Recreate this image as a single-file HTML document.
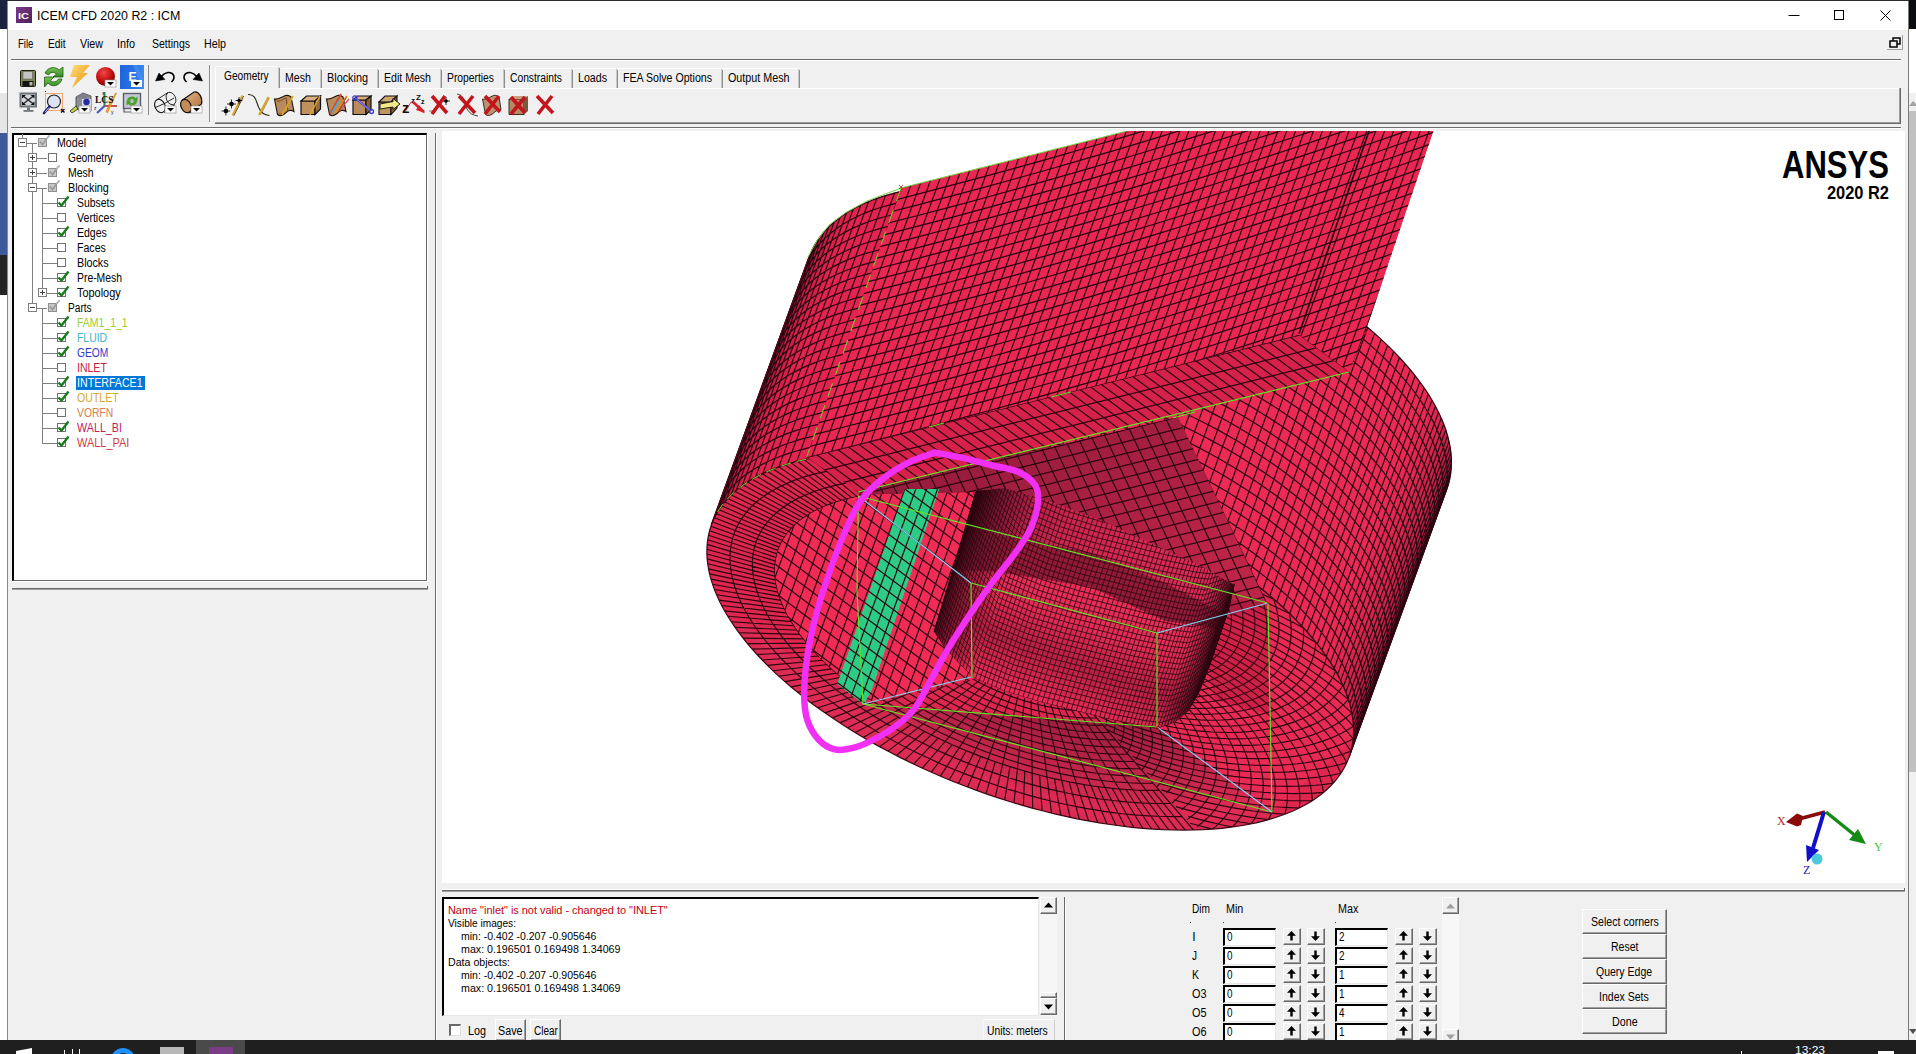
<!DOCTYPE html>
<html><head><meta charset="utf-8"><title>ICEM CFD 2020 R2 : ICM</title>
<style>
html,body{margin:0;padding:0}
body{width:1916px;height:1054px;overflow:hidden;position:relative;background:#f0f0f0;font-family:"Liberation Sans",sans-serif;font-size:11px;color:#000}
.a{position:absolute}
.t{position:absolute;white-space:nowrap;line-height:14px;font-size:11px}
.ln{position:absolute;background:#696969}
svg{position:absolute;overflow:visible}
</style></head><body>
<!-- background desktop strips -->
<div class="a" style="left:0;top:0;width:8px;height:29px;background:#1b2540"></div>
<div class="a" style="left:0;top:29px;width:8px;height:64px;background:#fff"></div>
<div class="a" style="left:0;top:93px;width:8px;height:40px;background:#e6e6e6"></div>
<div class="a" style="left:0;top:133px;width:8px;height:122px;background:#3c599b"></div>
<div class="a" style="left:0;top:255px;width:8px;height:40px;background:#242424"></div>
<div class="a" style="left:0;top:295px;width:8px;height:745px;background:#fff"></div>
<div class="a" style="left:1908px;top:0;width:8px;height:29px;background:#0b0b12"></div>
<div class="a" style="left:1908px;top:29px;width:8px;height:64px;background:#fff"></div>
<div class="a" style="left:1908px;top:93px;width:8px;height:18px;background:#f0f0f0"></div>
<div class="a" style="left:1908px;top:111px;width:8px;height:661px;background:#c1c1c1"></div>
<div class="a" style="left:1908px;top:772px;width:8px;height:268px;background:#f0f0f0"></div>
<svg style="left:1909px;top:101px" width="7" height="5"><path d="M0 5L4 0L7 3V5Z" fill="#a3a3a3"/></svg>
<svg style="left:1909px;top:1029px" width="7" height="5"><path d="M0 0H7V1L4 5Z" fill="#505050"/></svg>
<!-- window frame -->
<div class="a" style="left:7px;top:0;width:1px;height:1040px;background:#8a8a8a"></div>
<div class="a" style="left:1908px;top:0;width:1px;height:1040px;background:#7a7a7a"></div>
<div class="a" style="left:8px;top:0;width:1900px;height:30px;background:#fff"></div>
<div class="a" style="left:7px;top:0;width:1902px;height:1px;background:#2b2b2b"></div>
<!-- title -->
<div class="a" style="left:16px;top:7px;width:16px;height:16px;background:linear-gradient(135deg,#7a3c86,#4d1f5c)"></div>
<svg style="left:1780px;top:0" width="128" height="30" fill="none" stroke="#000" stroke-width="1"><path d="M8.5 15.5H19.500"/><rect x="54.500" y="10.500" width="9" height="9"/><path d="M100.500 10.500L110.500 20.500M110.500 10.500L100.500 20.500"/></svg>
<!-- menu -->
<!-- restore button in menu bar -->
<div class="a" style="left:1887px;top:35px;width:16px;height:15px;border-right:1px solid #a0a0a0;border-bottom:1px solid #a0a0a0;box-sizing:border-box"></div>
<svg style="left:1889px;top:37px" width="13" height="12" fill="none" stroke="#000" stroke-width="1.5"><rect x="4" y="1" width="7" height="6"/><rect x="1" y="4" width="7" height="6" fill="#f0f0f0"/></svg>
<!-- separators -->
<div class="a" style="left:11px;top:59px;width:1890px;height:1px;background:#6d6d6d"></div>
<div class="a" style="left:11px;top:60px;width:1890px;height:1px;background:#fff"></div>
<div class="a" style="left:11px;top:127px;width:1890px;height:1px;background:#6d6d6d"></div>
<div class="a" style="left:11px;top:128px;width:1890px;height:1px;background:#fff"></div>
<div class="a" style="left:148px;top:65px;width:1px;height:50px;background:#8a8a8a"></div>
<div class="a" style="left:209px;top:65px;width:1px;height:57px;background:#8a8a8a"></div>
<div class="a" style="left:210px;top:65px;width:1px;height:57px;background:#fff"></div>

<div class="t" style="left:18.3px;top:8.8815px;font-size:9px;color:#fff;font-weight:bold;transform:scaleX(1.2222);transform-origin:0 0;">IC</div>
<div class="t" style="left:37px;top:8.642px;font-size:12px;color:#000;transform:scaleX(1.0332);transform-origin:0 0;">ICEM CFD 2020 R2 : ICM</div>
<div class="t" style="left:18.4px;top:37.442px;font-size:12px;transform:scaleX(0.7965);transform-origin:0 0;">File</div>
<div class="t" style="left:48.4px;top:37.442px;font-size:12px;transform:scaleX(0.8511);transform-origin:0 0;">Edit</div>
<div class="t" style="left:80px;top:37.442px;font-size:12px;transform:scaleX(0.8917);transform-origin:0 0;">View</div>
<div class="t" style="left:117px;top:37.442px;font-size:12px;transform:scaleX(0.8993);transform-origin:0 0;">Info</div>
<div class="t" style="left:152px;top:37.442px;font-size:12px;transform:scaleX(0.8764);transform-origin:0 0;">Settings</div>
<div class="t" style="left:204px;top:37.442px;font-size:12px;transform:scaleX(0.8915);transform-origin:0 0;">Help</div>
<div class="t" style="left:224.4px;top:69.242px;font-size:12px;transform:scaleX(0.8466);transform-origin:0 0;">Geometry</div>
<div class="t" style="left:285px;top:70.842px;font-size:12px;transform:scaleX(0.8860);transform-origin:0 0;">Mesh</div>
<div class="t" style="left:327px;top:70.842px;font-size:12px;transform:scaleX(0.9040);transform-origin:0 0;">Blocking</div>
<div class="t" style="left:384px;top:70.842px;font-size:12px;transform:scaleX(0.8809);transform-origin:0 0;">Edit Mesh</div>
<div class="t" style="left:447px;top:70.842px;font-size:12px;transform:scaleX(0.8594);transform-origin:0 0;">Properties</div>
<div class="t" style="left:510px;top:70.842px;font-size:12px;transform:scaleX(0.8568);transform-origin:0 0;">Constraints</div>
<div class="t" style="left:578px;top:70.842px;font-size:12px;transform:scaleX(0.8870);transform-origin:0 0;">Loads</div>
<div class="t" style="left:623px;top:70.842px;font-size:12px;transform:scaleX(0.8837);transform-origin:0 0;">FEA Solve Options</div>
<div class="t" style="left:727.5px;top:70.842px;font-size:12px;transform:scaleX(0.8952);transform-origin:0 0;">Output Mesh</div>
<div class="a" style="left:216px;top:66px;width:62px;height:1px;background:#fff;"></div>
<div class="a" style="left:215px;top:67px;width:1px;height:21px;background:#fff;"></div>
<div class="a" style="left:278px;top:67px;width:1px;height:21px;background:#c8c8c8;"></div>
<div class="a" style="left:279px;top:68px;width:1px;height:20px;background:#8c8c8c;"></div>
<div class="a" style="left:281px;top:68px;width:39px;height:1px;background:#fff;"></div>
<div class="a" style="left:320px;top:69px;width:1px;height:19px;background:#c8c8c8;"></div>
<div class="a" style="left:321px;top:70px;width:1px;height:18px;background:#8c8c8c;"></div>
<div class="a" style="left:322px;top:68px;width:55px;height:1px;background:#fff;"></div>
<div class="a" style="left:377px;top:69px;width:1px;height:19px;background:#c8c8c8;"></div>
<div class="a" style="left:378px;top:70px;width:1px;height:18px;background:#8c8c8c;"></div>
<div class="a" style="left:379px;top:68px;width:61px;height:1px;background:#fff;"></div>
<div class="a" style="left:440px;top:69px;width:1px;height:19px;background:#c8c8c8;"></div>
<div class="a" style="left:441px;top:70px;width:1px;height:18px;background:#8c8c8c;"></div>
<div class="a" style="left:442px;top:68px;width:61px;height:1px;background:#fff;"></div>
<div class="a" style="left:503px;top:69px;width:1px;height:19px;background:#c8c8c8;"></div>
<div class="a" style="left:504px;top:70px;width:1px;height:18px;background:#8c8c8c;"></div>
<div class="a" style="left:505px;top:68px;width:66px;height:1px;background:#fff;"></div>
<div class="a" style="left:571px;top:69px;width:1px;height:19px;background:#c8c8c8;"></div>
<div class="a" style="left:572px;top:70px;width:1px;height:18px;background:#8c8c8c;"></div>
<div class="a" style="left:573px;top:68px;width:43px;height:1px;background:#fff;"></div>
<div class="a" style="left:616px;top:69px;width:1px;height:19px;background:#c8c8c8;"></div>
<div class="a" style="left:617px;top:70px;width:1px;height:18px;background:#8c8c8c;"></div>
<div class="a" style="left:618px;top:68px;width:103px;height:1px;background:#fff;"></div>
<div class="a" style="left:721px;top:69px;width:1px;height:19px;background:#c8c8c8;"></div>
<div class="a" style="left:722px;top:70px;width:1px;height:18px;background:#8c8c8c;"></div>
<div class="a" style="left:723px;top:68px;width:75px;height:1px;background:#fff;"></div>
<div class="a" style="left:798px;top:69px;width:1px;height:19px;background:#c8c8c8;"></div>
<div class="a" style="left:799px;top:70px;width:1px;height:18px;background:#8c8c8c;"></div>
<div class="a" style="left:280px;top:88px;width:1620px;height:1px;background:#fff;"></div>
<div class="a" style="left:215px;top:88px;width:1px;height:35px;background:#fff;"></div>
<div class="a" style="left:215px;top:122px;width:1685px;height:1px;background:#a0a0a0;"></div>
<div class="a" style="left:215px;top:123px;width:1686px;height:1px;background:#696969;"></div>
<div class="a" style="left:1899px;top:88px;width:1px;height:35px;background:#a0a0a0;"></div>
<div class="a" style="left:1900px;top:88px;width:1px;height:36px;background:#696969;"></div>
<!-- left toolbar icons -->
<svg style="left:19px;top:69px" width="18" height="19" viewBox="0 0 18 19"><rect x="1.500" y="1.500" width="15" height="16" rx="1" fill="#7d8558" stroke="#1c1f0c"/><rect x="4" y="2.500" width="9.500" height="7.500" fill="#c4c4c4" stroke="#555" stroke-width=".5"/><rect x="3.500" y="12" width="11" height="5" fill="#111"/><rect x="10.500" y="13" width="3" height="3.500" fill="#b9bba8"/></svg>
<svg style="left:43px;top:66px" width="22" height="22" viewBox="0 0 22 22"><defs><linearGradient id="gr1" x1="0" y1="0" x2="0" y2="1"><stop offset="0" stop-color="#7fc45a"/><stop offset="1" stop-color="#2f8a1e"/></linearGradient></defs><path d="M2 7C5 1 12 0 16 4L20 1V11H10L13.500 8C11 5.500 7 6 5.500 9Z" fill="url(#gr1)" stroke="#1f5a12" stroke-width=".8"/><path d="M19 13C17 20 9 22 5 17L1.500 21V11H11L7.500 14.500C10 17 14 16 15.500 13Z" fill="url(#gr1)" stroke="#1f5a12" stroke-width=".8"/></svg>
<svg style="left:69px;top:64px" width="23" height="25" viewBox="0 0 23 25"><defs><linearGradient id="gl1" x1="0" y1="0" x2="1" y2="1"><stop offset="0" stop-color="#fbe28a"/><stop offset=".5" stop-color="#f5b53a"/><stop offset="1" stop-color="#e98a1e"/></linearGradient></defs><path d="M5 1H21L14 9H19L3 24L8 13H1Z" fill="url(#gl1)"/></svg>
<svg style="left:95px;top:65px" width="24" height="24" viewBox="0 0 24 24"><defs><radialGradient id="gb1" cx=".4" cy=".3" r=".7"><stop offset="0" stop-color="#f04a4a"/><stop offset=".6" stop-color="#c40f10"/><stop offset="1" stop-color="#7a0507"/></radialGradient></defs><circle cx="10.500" cy="11.500" r="9.500" fill="url(#gb1)"/><rect x="10" y="15" width="11" height="7" fill="#fff" stroke="#8a8a8a" stroke-width=".6"/><path d="M12 17H19L15.500 20.500Z" fill="#000"/></svg>
<svg style="left:120px;top:65px" width="24" height="24" viewBox="0 0 24 24"><defs><linearGradient id="ge1" x1="0" y1="0" x2="1" y2="0"><stop offset="0" stop-color="#1d66de"/><stop offset=".6" stop-color="#2a72e4"/><stop offset="1" stop-color="#3b8af0"/></linearGradient></defs><rect width="24" height="24" fill="url(#ge1)"/><path d="M13 0L17 0L24 16V24H22Z" fill="#4a96f4" opacity=".55"/><text x="8.500" y="16" font-family="Liberation Sans,sans-serif" font-weight="bold" font-size="12" fill="#fff">E</text><rect x="11" y="15" width="11" height="7" fill="#fff"/><path d="M13 17H20L16.500 20.500Z" fill="#000"/></svg>
<svg style="left:154px;top:69px" width="24" height="16" viewBox="0 0 24 16" fill="none" stroke="#000"><path d="M17.500 13C22 9 20 3 14 3.500C11 4 8 6.500 6 9" stroke-width="1.600"/><path d="M1.500 12L5 4L11 10.500Z" fill="#000" stroke-width=".5"/></svg>
<svg style="left:180px;top:69px" width="24" height="16" viewBox="0 0 24 16" fill="none" stroke="#000"><path d="M6.500 13C2 9 4 3 10 3.500C13 4 16 6.500 18 9" stroke-width="1.600"/><path d="M22.500 12L19 4L13 10.500Z" fill="#000" stroke-width=".5"/></svg>
<!-- row 2 -->
<svg style="left:19px;top:92px" width="19" height="21" viewBox="0 0 19 21"><rect x=".5" y=".5" width="17.500" height="15" fill="#6f737a"/><rect x="2.500" y="2.500" width="13.500" height="11" fill="#d4d6dc"/><path d="M4 4L14.500 12M14.500 4L4 12" stroke="#222" stroke-width="1.300"/><path d="M3 3H7L3 6.500ZM15.500 3H11.500L15.500 6.500ZM3 13H7L3 9.500ZM15.500 13H11.500L15.500 9.500Z" fill="#111"/><rect x="8" y="15.500" width="3" height="2.500" fill="#6f737a"/><rect x="4.500" y="18" width="10" height="1.800" fill="#6f737a"/></svg>
<svg style="left:42px;top:90px" width="24" height="25" viewBox="0 0 24 25"><rect x="3.500" y="3.500" width="17" height="17" fill="none" stroke="#f0a060" stroke-width=".9"/><circle cx="12" cy="11.500" r="6.500" fill="#dde3f2" stroke="#222" stroke-width="1.200"/><path d="M7.500 16.500L2 23" stroke="#1c1c70" stroke-width="2.600" stroke-linecap="round"/><path d="M7 17.500L3 22.300" stroke="#c8c8f0" stroke-width=".9"/><path d="M19 19L22.500 22.500M22.500 19L19 22.500" stroke="#111" stroke-width="1.400"/><rect x="3" y="1" width="1" height="1" fill="#333"/></svg>
<svg style="left:68px;top:92px" width="24" height="23" viewBox="0 0 24 23"><path d="M8 5L15 1L23 4V19H12L8 16Z" fill="#8c8f96" stroke="#3a3a3a" stroke-width=".8"/><path d="M8 5L15 1L23 4L15 7Z" fill="#7d8087"/><rect x="14" y="7" width="9" height="12" fill="#d7d9e0"/><circle cx="18.500" cy="10" r="3.200" fill="#262aa0"/><path d="M8 14L2 19L4 21L10 17Z" fill="#c9d04a" stroke="#222" stroke-width=".8"/><rect x="11" y="14" width="11" height="7" fill="#fff" stroke="#8a8a8a" stroke-width=".6"/><path d="M13 16H20L16.500 19.500Z" fill="#000"/></svg>
<svg style="left:94px;top:90px" width="24" height="25" viewBox="0 0 24 25"><path d="M10.500 2V16" stroke="#2d8a4e" stroke-width="2"/><path d="M10.500 16L23 16" stroke="#c62828" stroke-width="1.600"/><path d="M10.500 16L3 23" stroke="#4a58c0" stroke-width="2.200"/><path d="M22 3L13 23" stroke="#d9a020" stroke-width="1.800"/><path d="M19 6L12 22" stroke="#e06020" stroke-width=".8"/><text x="1" y="13" font-family="Liberation Serif,serif" font-weight="bold" font-size="9.500" fill="#111">LCS</text><text x="8" y="5" font-family="Liberation Sans,sans-serif" font-size="5" fill="#111">x</text><text x="17" y="24" font-family="Liberation Sans,sans-serif" font-size="5" fill="#111">y</text><text x="0" y="20" font-family="Liberation Sans,sans-serif" font-size="5" fill="#111">z</text></svg>
<svg style="left:122px;top:92px" width="22" height="23" viewBox="0 0 22 23"><rect x="1.500" y="1.500" width="17" height="15" fill="#c6c8cf" stroke="#5b5d74" stroke-width="1.400"/><path d="M5 8C6 4 12 3.500 13.500 6L15.500 4.500V9.500H10.500L12 8C11 6.500 8 7 7.500 9Z" fill="#4aa02c"/><path d="M15 10C14 14 8 14.500 6.500 12L4.500 13.500V8.500H9.500L8 10C9 11.500 12 11 12.500 9Z" fill="#4aa02c"/><path d="M2 17V20H9" fill="none" stroke="#5b5d74" stroke-width="1.200"/><rect x="9" y="14" width="11" height="7" fill="#fff" stroke="#8a8a8a" stroke-width=".6"/><path d="M11 16H18L14.500 19.500Z" fill="#000"/></svg>
<svg style="left:153px;top:90px" width="25" height="25" viewBox="0 0 25 25" fill="none" stroke="#111" stroke-width="1.100"><ellipse cx="7" cy="16" rx="5" ry="7" transform="rotate(-25 7 16)"/><ellipse cx="18" cy="8.500" rx="4.500" ry="6.500" transform="rotate(-25 18 8.500)" stroke-width=".8"/><path d="M3.500 10L15 2.500M11 22.500L22 14.500M2.500 17.500L11.500 13.500L21 8" stroke-width=".9"/><rect x="12" y="16" width="11" height="7" fill="#fff" stroke="#8a8a8a" stroke-width=".6"/><path d="M14 18H21L17.500 21.500Z" fill="#000" stroke="none"/></svg>
<svg style="left:179px;top:90px" width="25" height="25" viewBox="0 0 25 25"><defs><linearGradient id="gc1" x1="0" y1="0" x2="1" y2="1"><stop offset="0" stop-color="#e6b98a"/><stop offset=".5" stop-color="#c99160"/><stop offset="1" stop-color="#a06c3c"/></linearGradient></defs><path d="M3.500 10L15 2C20 1 24 8 22.500 14L11 22.500Z" fill="url(#gc1)" stroke="#111" stroke-width="1.200"/><ellipse cx="7" cy="16" rx="5" ry="7" transform="rotate(-25 7 16)" fill="#c48a58" stroke="#111" stroke-width="1.200"/><rect x="12" y="16" width="11" height="7" fill="#fff" stroke="#8a8a8a" stroke-width=".6"/><path d="M14 18H21L17.500 21.500Z" fill="#000"/></svg>
<!-- geometry tab icons -->
<svg style="left:221px;top:93px" width="24" height="24" viewBox="0 0 24 24"><path d="M11.500 22.500L21.500 2.500" stroke="#d9a520" stroke-width="2"/><path d="M13 22.500L22.800 3" stroke="#3a2a05" stroke-width=".7"/><path d="M4.900 13.500V22.500M0.500 18H9.300" stroke="#000" stroke-width=".8"/><circle cx="4.900" cy="18" r="2.300" fill="#000"/><path d="M10.500 6.500V15.500M6 11H15" stroke="#000" stroke-width=".8"/><circle cx="10.500" cy="11" r="2.300" fill="#000"/><path d="M18 4V11M14.500 7.500H21.500" stroke="#000" stroke-width=".8"/><circle cx="18" cy="7.500" r="1.700" fill="#000"/></svg>
<svg style="left:247px;top:93px" width="24" height="24" viewBox="0 0 24 24" fill="none"><path d="M1 1.500C9 1 9 9 12 15C14 20 18 22 22.500 22.500" stroke="#2a2410" stroke-width="1.100"/><path d="M12 22L21.500 4" stroke="#d9a520" stroke-width="2"/><path d="M13.500 22L22.500 5" stroke="#8a6a10" stroke-width=".6"/></svg>
<svg style="left:273px;top:94px" width="23" height="23" viewBox="0 0 23 23"><path d="M1.500 5C5 6 9 3 12.500 1.500C15 1 17 2 18 3L21 17.500C17 15 15 17 12 19.500C9 22 6 22 4.500 20.500Z" fill="#b98a5c" stroke="#1e1408" stroke-width="1.100"/><path d="M4 7C7 8 10 5 13 4L15 17C12 18 9 21 6 20" fill="none" stroke="#5a3a18" stroke-width=".8"/><path d="M9 21L20 2" stroke="#d9a520" stroke-width="1.700"/></svg>
<svg style="left:300px;top:95px" width="22" height="21" viewBox="0 0 22 21"><path d="M1 6H15V19.500H1Z" fill="#c0905e" stroke="#111" stroke-width="1.200"/><path d="M1 6L6.500 1H20.500L15 6Z" fill="#dcae80" stroke="#111" stroke-width="1.200"/><path d="M15 6L20.500 1V14L15 19.500Z" fill="#9a6c40" stroke="#111" stroke-width="1.200"/><path d="M10 20L20 1" stroke="#d9a520" stroke-width="1.600"/></svg>
<svg style="left:325px;top:92px" width="26" height="25" viewBox="0 0 26 25"><path d="M1.500 7C5 8 9 5 12.500 3.500C15 3 17 4 18 5L21 19.500C17 17 15 19 12 21.500C9 24 6 24 4.500 22.500Z" fill="#b98a5c" stroke="#1e1408" stroke-width="1.100"/><path d="M5 22L16 2" stroke="#d04a38" stroke-width="1.800"/><path d="M7 21L14 9" stroke="#4ab0c8" stroke-width="1.600"/><path d="M10 21L22 4" stroke="#e88a1a" stroke-width="2"/><path d="M13 20L24 7" stroke="#e04a5a" stroke-width="1.300"/><path d="M12 22L21 6" stroke="#4a3010" stroke-width=".6"/></svg>
<svg style="left:352px;top:95px" width="23" height="21" viewBox="0 0 23 21"><path d="M1 5H14V19.500H1Z" fill="#b88a5c" stroke="#111" stroke-width="1.200"/><path d="M1 5L5 1H19L14 5Z" fill="#d9aa7c" stroke="#111" stroke-width="1.200"/><path d="M14 5L19 1V15L14 19.500Z" fill="#8a6038" stroke="#111" stroke-width="1.200"/><path d="M3 3L19 16" stroke="#4a4ad8" stroke-width="2.200"/><path d="M3 3L19 16" stroke="#9a9af0" stroke-width=".7"/><circle cx="2.800" cy="2.800" r="2" fill="none" stroke="#3a3ad0" stroke-width="1.300"/><circle cx="19.500" cy="16.500" r="2" fill="none" stroke="#3a3ad0" stroke-width="1.300"/></svg>
<svg style="left:378px;top:95px" width="23" height="21" viewBox="0 0 23 21"><path d="M1 7H13V19.500H1Z" fill="#bf9563" stroke="#111" stroke-width="1.100"/><path d="M1 7L7 1H19L13 7Z" fill="#cfa572" stroke="#111" stroke-width="1.100"/><path d="M13 7L19 1V13L13 19.500Z" fill="#8a6a38" stroke="#111" stroke-width="1.100"/><path d="M2 9L15 6.500V3.500L22 9L15 14.500V12L2 14Z" fill="#f2ea88" stroke="#111" stroke-width=".9"/></svg>
<svg style="left:402px;top:93px" width="25" height="24" viewBox="0 0 25 24"><text x="0" y="20" font-family="Liberation Sans,sans-serif" font-weight="bold" font-size="15" fill="#111">z</text><text x="9" y="10" font-family="Liberation Sans,sans-serif" font-weight="bold" font-size="8" fill="#111">z</text><text x="14" y="7" font-family="Liberation Sans,sans-serif" font-weight="bold" font-size="8" fill="#111">Z</text><text x="19" y="11" font-family="Liberation Sans,sans-serif" font-weight="bold" font-size="7" fill="#111">z</text><path d="M11 9L22 19" stroke="#d81e28" stroke-width="2.600"/><path d="M17 12L23 20L14 17Z" fill="#d81e28"/><path d="M3 19L9 9" stroke="#d81e28" stroke-width=".8"/></svg>
<svg style="left:429px;top:94px" width="24" height="22" viewBox="0 0 24 22"><path d="M0 17H6" stroke="#333" stroke-width=".6"/><path d="M17 3V11M13 7H21" stroke="#000" stroke-width=".8"/><circle cx="17" cy="7" r="1.800" fill="#000"/><path d="M3 2L18 19M16 2L3 20" stroke="#c4141c" stroke-width="3.600"/></svg>
<svg style="left:455px;top:93px" width="24" height="24" viewBox="0 0 24 24" fill="none"><path d="M2 1C10 2 9 10 12 16C14 20 18 22.500 23 23" stroke="#333" stroke-width=".9"/><path d="M4 3L20 20M18 3L4 21" stroke="#c4141c" stroke-width="3.600"/></svg>
<svg style="left:481px;top:94px" width="23" height="23" viewBox="0 0 23 23"><path d="M1.500 5C5 6 9 3 12.500 1.500C15 1 17 2 18 3L20 15.500C17 15 15 17 12 19.500C9 22 6 22 4.500 20.500Z" fill="#b99272" stroke="#2a1a10" stroke-width=".9"/><path d="M4 2L19 18M18 2L4 20" stroke="#c4141c" stroke-width="3.600"/></svg>
<svg style="left:508px;top:95px" width="21" height="21" viewBox="0 0 21 21"><path d="M1 4H16V19.500H1Z" fill="#b58a66" stroke="#2a1a10" stroke-width=".9"/><path d="M1 4L4 1H20L16 4Z" fill="#c9a07a"/><path d="M16 4L20 1V16L16 19.500Z" fill="#7a5a3a"/><path d="M3 2L17 18M17 2L3 19" stroke="#c4141c" stroke-width="3.600"/></svg>
<svg style="left:535px;top:94px" width="21" height="22" viewBox="0 0 21 22"><path d="M2 2L18 19M17 2L3 20" stroke="#c4141c" stroke-width="3.600"/></svg>
<!-- tree panel -->
<div class="a" style="left:12px;top:133px;width:415px;height:448px;background:#fff;box-sizing:border-box;border-left:2px solid #000;border-top:2px solid #000;border-right:1px solid #696969;border-bottom:1px solid #696969;"></div>
<div class="a" style="left:427px;top:133px;width:1px;height:449px;background:#fff;"></div>
<div class="a" style="left:12px;top:581px;width:416px;height:1px;background:#fff;"></div>
<div class="a" style="left:12px;top:588px;width:416px;height:1px;background:#696969;"></div>
<div class="a" style="left:12px;top:589px;width:416px;height:1px;background:#a0a0a0;"></div>
<div class="a" style="left:427px;top:586px;width:1px;height:3px;background:#696969;"></div>
<div class="a" style="left:435px;top:133px;width:1px;height:907px;background:#696969;"></div>
<div class="a" style="left:436px;top:133px;width:1px;height:907px;background:#fff;"></div>
<div class="a" style="left:22px;top:134px;width:1px;height:4px;background:#808080;"></div>
<div class="a" style="left:32px;top:142.5px;width:1px;height:161px;background:#808080;"></div>
<div class="a" style="left:42px;top:187.5px;width:1px;height:101px;background:#808080;"></div>
<div class="a" style="left:42px;top:307.5px;width:1px;height:136px;background:#808080;"></div>
<div class="a" style="left:27px;top:142.5px;width:10px;height:1px;background:#808080;"></div>
<div class="a" style="left:18px;top:138px;width:9px;height:9px;background:#fff;box-sizing:border-box;border:1px solid #808080;"></div>
<div class="a" style="left:20px;top:142px;width:5px;height:1px;background:#404040;"></div>
<div class="a" style="left:37.5px;top:138px;width:9px;height:9px;background:#c8c8c8;box-sizing:border-box;border:1px solid #909090;"></div>
<svg style="left:37.5px;top:135px" width="13" height="13" viewBox="0 0 13 13"><path d="M2 6.500L4.500 9.500L8 4.500L11.500 0.500" fill="none" stroke="#9a9a9a" stroke-width="1.700"/><path d="M8.500 4L12 0" stroke="#c4c4c4" stroke-width="1"/></svg>
<div class="t" style="left:57.4px;top:135.742px;font-size:12px;transform:scaleX(0.8873);transform-origin:0 0;">Model</div>
<div class="a" style="left:37px;top:157.5px;width:10px;height:1px;background:#808080;"></div>
<div class="a" style="left:28px;top:153px;width:9px;height:9px;background:#fff;box-sizing:border-box;border:1px solid #808080;"></div>
<div class="a" style="left:30px;top:157px;width:5px;height:1px;background:#404040;"></div>
<div class="a" style="left:32px;top:155px;width:1px;height:5px;background:#404040;"></div>
<div class="a" style="left:47.5px;top:153px;width:9px;height:9px;background:#fff;box-sizing:border-box;border:1px solid #707070;"></div>
<div class="t" style="left:67.6px;top:150.742px;font-size:12px;transform:scaleX(0.8466);transform-origin:0 0;">Geometry</div>
<div class="a" style="left:37px;top:172.5px;width:10px;height:1px;background:#808080;"></div>
<div class="a" style="left:28px;top:168px;width:9px;height:9px;background:#fff;box-sizing:border-box;border:1px solid #808080;"></div>
<div class="a" style="left:30px;top:172px;width:5px;height:1px;background:#404040;"></div>
<div class="a" style="left:32px;top:170px;width:1px;height:5px;background:#404040;"></div>
<div class="a" style="left:47.5px;top:168px;width:9px;height:9px;background:#c8c8c8;box-sizing:border-box;border:1px solid #909090;"></div>
<svg style="left:47.5px;top:165px" width="13" height="13" viewBox="0 0 13 13"><path d="M2 6.500L4.500 9.500L8 4.500L11.500 0.500" fill="none" stroke="#9a9a9a" stroke-width="1.700"/><path d="M8.500 4L12 0" stroke="#c4c4c4" stroke-width="1"/></svg>
<div class="t" style="left:67.6px;top:165.742px;font-size:12px;transform:scaleX(0.8724);transform-origin:0 0;">Mesh</div>
<div class="a" style="left:37px;top:187.5px;width:10px;height:1px;background:#808080;"></div>
<div class="a" style="left:37px;top:187.5px;width:10px;height:1px;background:#808080;"></div>
<div class="a" style="left:28px;top:183px;width:9px;height:9px;background:#fff;box-sizing:border-box;border:1px solid #808080;"></div>
<div class="a" style="left:30px;top:187px;width:5px;height:1px;background:#404040;"></div>
<div class="a" style="left:47.5px;top:183px;width:9px;height:9px;background:#c8c8c8;box-sizing:border-box;border:1px solid #909090;"></div>
<svg style="left:47.5px;top:180px" width="13" height="13" viewBox="0 0 13 13"><path d="M2 6.500L4.500 9.500L8 4.500L11.500 0.500" fill="none" stroke="#9a9a9a" stroke-width="1.700"/><path d="M8.500 4L12 0" stroke="#c4c4c4" stroke-width="1"/></svg>
<div class="t" style="left:67.6px;top:180.742px;font-size:12px;transform:scaleX(0.8995);transform-origin:0 0;">Blocking</div>
<div class="a" style="left:42px;top:202.5px;width:15px;height:1px;background:#808080;"></div>
<div class="a" style="left:57.3px;top:198px;width:9px;height:9px;background:#fff;box-sizing:border-box;border:1px solid #707070;"></div>
<svg style="left:57.3px;top:195px" width="13" height="13" viewBox="0 0 13 13"><path d="M1.500 7.500L4.500 10.500L11.500 1.500" fill="none" stroke="#147a1c" stroke-width="2.300"/></svg>
<div class="t" style="left:77.4px;top:195.742px;font-size:12px;transform:scaleX(0.8695);transform-origin:0 0;">Subsets</div>
<div class="a" style="left:42px;top:217.5px;width:15px;height:1px;background:#808080;"></div>
<div class="a" style="left:57.3px;top:213px;width:9px;height:9px;background:#fff;box-sizing:border-box;border:1px solid #707070;"></div>
<div class="t" style="left:77.4px;top:210.742px;font-size:12px;transform:scaleX(0.8832);transform-origin:0 0;">Vertices</div>
<div class="a" style="left:42px;top:232.5px;width:15px;height:1px;background:#808080;"></div>
<div class="a" style="left:57.3px;top:228px;width:9px;height:9px;background:#fff;box-sizing:border-box;border:1px solid #707070;"></div>
<svg style="left:57.3px;top:225px" width="13" height="13" viewBox="0 0 13 13"><path d="M1.500 7.500L4.500 10.500L11.500 1.500" fill="none" stroke="#147a1c" stroke-width="2.300"/></svg>
<div class="t" style="left:77.4px;top:225.742px;font-size:12px;transform:scaleX(0.8758);transform-origin:0 0;">Edges</div>
<div class="a" style="left:42px;top:247.5px;width:15px;height:1px;background:#808080;"></div>
<div class="a" style="left:57.3px;top:243px;width:9px;height:9px;background:#fff;box-sizing:border-box;border:1px solid #707070;"></div>
<div class="t" style="left:77.4px;top:240.742px;font-size:12px;transform:scaleX(0.8814);transform-origin:0 0;">Faces</div>
<div class="a" style="left:42px;top:262.5px;width:15px;height:1px;background:#808080;"></div>
<div class="a" style="left:57.3px;top:258px;width:9px;height:9px;background:#fff;box-sizing:border-box;border:1px solid #707070;"></div>
<div class="t" style="left:77.4px;top:255.742px;font-size:12px;transform:scaleX(0.8941);transform-origin:0 0;">Blocks</div>
<div class="a" style="left:42px;top:277.5px;width:15px;height:1px;background:#808080;"></div>
<div class="a" style="left:57.3px;top:273px;width:9px;height:9px;background:#fff;box-sizing:border-box;border:1px solid #707070;"></div>
<svg style="left:57.3px;top:270px" width="13" height="13" viewBox="0 0 13 13"><path d="M1.500 7.500L4.500 10.500L11.500 1.500" fill="none" stroke="#147a1c" stroke-width="2.300"/></svg>
<div class="t" style="left:77.4px;top:270.742px;font-size:12px;transform:scaleX(0.8651);transform-origin:0 0;">Pre-Mesh</div>
<div class="a" style="left:47px;top:292.5px;width:10px;height:1px;background:#808080;"></div>
<div class="a" style="left:38px;top:288px;width:9px;height:9px;background:#fff;box-sizing:border-box;border:1px solid #808080;"></div>
<div class="a" style="left:40px;top:292px;width:5px;height:1px;background:#404040;"></div>
<div class="a" style="left:42px;top:290px;width:1px;height:5px;background:#404040;"></div>
<div class="a" style="left:57.3px;top:288px;width:9px;height:9px;background:#fff;box-sizing:border-box;border:1px solid #707070;"></div>
<svg style="left:57.3px;top:285px" width="13" height="13" viewBox="0 0 13 13"><path d="M1.500 7.500L4.500 10.500L11.500 1.500" fill="none" stroke="#147a1c" stroke-width="2.300"/></svg>
<div class="t" style="left:77.4px;top:285.742px;font-size:12px;transform:scaleX(0.9098);transform-origin:0 0;">Topology</div>
<div class="a" style="left:37px;top:307.5px;width:10px;height:1px;background:#808080;"></div>
<div class="a" style="left:37px;top:307.5px;width:10px;height:1px;background:#808080;"></div>
<div class="a" style="left:28px;top:303px;width:9px;height:9px;background:#fff;box-sizing:border-box;border:1px solid #808080;"></div>
<div class="a" style="left:30px;top:307px;width:5px;height:1px;background:#404040;"></div>
<div class="a" style="left:47.5px;top:303px;width:9px;height:9px;background:#c8c8c8;box-sizing:border-box;border:1px solid #909090;"></div>
<svg style="left:47.5px;top:300px" width="13" height="13" viewBox="0 0 13 13"><path d="M2 6.500L4.500 9.500L8 4.500L11.500 0.500" fill="none" stroke="#9a9a9a" stroke-width="1.700"/><path d="M8.500 4L12 0" stroke="#c4c4c4" stroke-width="1"/></svg>
<div class="t" style="left:67.6px;top:300.742px;font-size:12px;transform:scaleX(0.8461);transform-origin:0 0;">Parts</div>
<div class="a" style="left:42px;top:322.5px;width:15px;height:1px;background:#808080;"></div>
<div class="a" style="left:57.3px;top:318px;width:9px;height:9px;background:#fff;box-sizing:border-box;border:1px solid #707070;"></div>
<svg style="left:57.3px;top:315px" width="13" height="13" viewBox="0 0 13 13"><path d="M1.500 7.500L4.500 10.500L11.500 1.500" fill="none" stroke="#147a1c" stroke-width="2.300"/></svg>
<div class="t" style="left:77.4px;top:315.742px;font-size:12px;color:#9acd32;transform:scaleX(0.8736);transform-origin:0 0;">FAM1_1_1</div>
<div class="a" style="left:42px;top:337.5px;width:15px;height:1px;background:#808080;"></div>
<div class="a" style="left:57.3px;top:333px;width:9px;height:9px;background:#fff;box-sizing:border-box;border:1px solid #707070;"></div>
<svg style="left:57.3px;top:330px" width="13" height="13" viewBox="0 0 13 13"><path d="M1.500 7.500L4.500 10.500L11.500 1.500" fill="none" stroke="#147a1c" stroke-width="2.300"/></svg>
<div class="t" style="left:77.4px;top:330.742px;font-size:12px;color:#3fb4c4;transform:scaleX(0.8682);transform-origin:0 0;">FLUID</div>
<div class="a" style="left:42px;top:352.5px;width:15px;height:1px;background:#808080;"></div>
<div class="a" style="left:57.3px;top:348px;width:9px;height:9px;background:#fff;box-sizing:border-box;border:1px solid #707070;"></div>
<svg style="left:57.3px;top:345px" width="13" height="13" viewBox="0 0 13 13"><path d="M1.500 7.500L4.500 10.500L11.500 1.500" fill="none" stroke="#147a1c" stroke-width="2.300"/></svg>
<div class="t" style="left:77.4px;top:345.742px;font-size:12px;color:#3838c8;transform:scaleX(0.8536);transform-origin:0 0;">GEOM</div>
<div class="a" style="left:42px;top:367.5px;width:15px;height:1px;background:#808080;"></div>
<div class="a" style="left:57.3px;top:363px;width:9px;height:9px;background:#fff;box-sizing:border-box;border:1px solid #707070;"></div>
<div class="t" style="left:77.4px;top:360.742px;font-size:12px;color:#c8203c;transform:scaleX(0.8763);transform-origin:0 0;">INLET</div>
<div class="a" style="left:42px;top:382.5px;width:15px;height:1px;background:#808080;"></div>
<div class="a" style="left:57.3px;top:378px;width:9px;height:9px;background:#fff;box-sizing:border-box;border:1px solid #707070;"></div>
<svg style="left:57.3px;top:375px" width="13" height="13" viewBox="0 0 13 13"><path d="M1.500 7.500L4.500 10.500L11.500 1.500" fill="none" stroke="#147a1c" stroke-width="2.300"/></svg>
<div class="a" style="left:75.7px;top:376px;width:69.5px;height:13.5px;background:#0078d7;"></div>
<div class="t" style="left:77.4px;top:375.742px;font-size:12px;color:#fff;transform:scaleX(0.8863);transform-origin:0 0;">INTERFACE1</div>
<div class="a" style="left:42px;top:397.5px;width:15px;height:1px;background:#808080;"></div>
<div class="a" style="left:57.3px;top:393px;width:9px;height:9px;background:#fff;box-sizing:border-box;border:1px solid #707070;"></div>
<svg style="left:57.3px;top:390px" width="13" height="13" viewBox="0 0 13 13"><path d="M1.500 7.500L4.500 10.500L11.500 1.500" fill="none" stroke="#147a1c" stroke-width="2.300"/></svg>
<div class="t" style="left:77.4px;top:390.742px;font-size:12px;color:#d4a830;transform:scaleX(0.8830);transform-origin:0 0;">OUTLET</div>
<div class="a" style="left:42px;top:412.5px;width:15px;height:1px;background:#808080;"></div>
<div class="a" style="left:57.3px;top:408px;width:9px;height:9px;background:#fff;box-sizing:border-box;border:1px solid #707070;"></div>
<div class="t" style="left:77.4px;top:405.742px;font-size:12px;color:#d98048;transform:scaleX(0.8595);transform-origin:0 0;">VORFN</div>
<div class="a" style="left:42px;top:427.5px;width:15px;height:1px;background:#808080;"></div>
<div class="a" style="left:57.3px;top:423px;width:9px;height:9px;background:#fff;box-sizing:border-box;border:1px solid #707070;"></div>
<svg style="left:57.3px;top:420px" width="13" height="13" viewBox="0 0 13 13"><path d="M1.500 7.500L4.500 10.500L11.500 1.500" fill="none" stroke="#147a1c" stroke-width="2.300"/></svg>
<div class="t" style="left:77.4px;top:420.742px;font-size:12px;color:#c8205a;transform:scaleX(0.8956);transform-origin:0 0;">WALL_BI</div>
<div class="a" style="left:42px;top:442.5px;width:15px;height:1px;background:#808080;"></div>
<div class="a" style="left:57.3px;top:438px;width:9px;height:9px;background:#fff;box-sizing:border-box;border:1px solid #707070;"></div>
<svg style="left:57.3px;top:435px" width="13" height="13" viewBox="0 0 13 13"><path d="M1.500 7.500L4.500 10.500L11.500 1.500" fill="none" stroke="#147a1c" stroke-width="2.300"/></svg>
<div class="t" style="left:77.4px;top:435.742px;font-size:12px;color:#d04040;transform:scaleX(0.9118);transform-origin:0 0;">WALL_PAI</div>
<!-- bottom panels -->
<div class="a" style="left:442px;top:889px;width:1463px;height:1px;background:#fff;"></div>
<div class="a" style="left:442px;top:890px;width:1463px;height:1px;background:#696969;"></div>
<div class="a" style="left:442px;top:891px;width:1463px;height:1px;background:#a0a0a0;"></div>
<div class="a" style="left:1904px;top:888px;width:1px;height:3px;background:#696969;"></div>
<div class="a" style="left:442px;top:897px;width:597px;height:119px;background:#fff;box-sizing:border-box;border-left:2px solid #000;border-top:2px solid #000;border-right:1px solid #e8e8e8;border-bottom:1px solid #e8e8e8;"></div>
<div class="t" style="left:448.4px;top:902.688px;font-size:11px;color:#c00010;transform:scaleX(0.9912);transform-origin:0 0;">Name "inlet" is not valid - changed to "INLET"</div>
<div class="t" style="left:448.4px;top:915.688px;font-size:11px;transform:scaleX(0.9217);transform-origin:0 0;">Visible images:</div>
<div class="t" style="left:460.9px;top:928.688px;font-size:11px;transform:scaleX(0.9537);transform-origin:0 0;">min: -0.402 -0.207 -0.905646</div>
<div class="t" style="left:460.9px;top:941.688px;font-size:11px;transform:scaleX(0.9689);transform-origin:0 0;">max: 0.196501 0.169498 1.34069</div>
<div class="t" style="left:448.4px;top:954.688px;font-size:11px;transform:scaleX(0.9658);transform-origin:0 0;">Data objects:</div>
<div class="t" style="left:460.9px;top:967.688px;font-size:11px;transform:scaleX(0.9537);transform-origin:0 0;">min: -0.402 -0.207 -0.905646</div>
<div class="t" style="left:460.9px;top:980.688px;font-size:11px;transform:scaleX(0.9689);transform-origin:0 0;">max: 0.196501 0.169498 1.34069</div>
<div class="a" style="left:1040px;top:897px;width:17px;height:119px;background:#f6f6f6;"></div>
<div class="a" style="left:1040px;top:897px;width:17px;height:17px;background:#f0f0f0;box-sizing:border-box;border-left:1px solid #fff;border-top:1px solid #fff;border-right:1px solid #696969;border-bottom:1px solid #696969;box-shadow:inset -1px -1px 0 #a0a0a0;"></div>
<div class="a" style="left:1040px;top:998px;width:17px;height:17px;background:#f0f0f0;box-sizing:border-box;border-left:1px solid #fff;border-top:1px solid #fff;border-right:1px solid #696969;border-bottom:1px solid #696969;box-shadow:inset -1px -1px 0 #a0a0a0;"></div>
<div class="a" style="left:1040px;top:992px;width:17px;height:6px;background:#f0f0f0;box-sizing:border-box;border-left:1px solid #fff;border-top:1px solid #fff;border-right:1px solid #696969;border-bottom:1px solid #696969;box-shadow:inset -1px -1px 0 #a0a0a0;"></div>
<svg style="left:1044px;top:902px" width="9" height="6"><path d="M0 5.500L4.500 0.500L9 5.500Z" fill="#000"/></svg>
<svg style="left:1044px;top:1004px" width="9" height="6"><path d="M0 0.500L4.500 5.500L9 0.500Z" fill="#000"/></svg>
<div class="a" style="left:449px;top:1024px;width:12px;height:12px;background:#fff;box-sizing:border-box;border-left:2px solid #696969;border-top:2px solid #696969;border-right:1px solid #e0e0e0;border-bottom:1px solid #e0e0e0;"></div>
<div class="t" style="left:467.6px;top:1024.14px;font-size:12px;transform:scaleX(0.8991);transform-origin:0 0;">Log</div>
<div class="a" style="left:495px;top:1019px;width:31px;height:22px;background:#f0f0f0;box-sizing:border-box;border-left:1px solid #fff;border-top:1px solid #fff;border-right:1px solid #696969;border-bottom:1px solid #696969;box-shadow:inset -1px -1px 0 #a0a0a0;"></div>
<div class="t" style="left:497.5px;top:1024.34px;font-size:12px;transform:scaleX(0.8957);transform-origin:0 0;">Save</div>
<div class="a" style="left:530px;top:1019px;width:31px;height:22px;background:#f0f0f0;box-sizing:border-box;border-left:1px solid #fff;border-top:1px solid #fff;border-right:1px solid #696969;border-bottom:1px solid #696969;box-shadow:inset -1px -1px 0 #a0a0a0;"></div>
<div class="t" style="left:533.5px;top:1024.34px;font-size:12px;transform:scaleX(0.8300);transform-origin:0 0;">Clear</div>
<div class="a" style="left:983px;top:1019px;width:72px;height:22px;background:#f0f0f0;box-sizing:border-box;border-left:1px solid #fff;border-top:1px solid #fff;border-right:1px solid #696969;border-bottom:1px solid #696969;box-shadow:inset -1px -1px 0 #a0a0a0;border-right-color:#d0d0d0;box-shadow:none;border-left-color:#f8f8f8"></div>
<div class="t" style="left:987.3px;top:1024.34px;font-size:12px;transform:scaleX(0.8588);transform-origin:0 0;">Units: meters</div>
<div class="a" style="left:1064px;top:897px;width:1px;height:143px;background:#696969;"></div>
<div class="a" style="left:1065px;top:897px;width:1px;height:143px;background:#fff;"></div>
<div class="t" style="left:1192.3px;top:901.842px;font-size:12px;transform:scaleX(0.8440);transform-origin:0 0;">Dim</div>
<div class="t" style="left:1226.2px;top:901.842px;font-size:12px;transform:scaleX(0.8947);transform-origin:0 0;">Min</div>
<div class="t" style="left:1338.2px;top:901.842px;font-size:12px;transform:scaleX(0.8954);transform-origin:0 0;">Max</div>
<div class="a" style="left:1190px;top:922px;width:1px;height:1px;background:#404040;"></div>
<div class="a" style="left:1223px;top:922px;width:1px;height:1px;background:#404040;"></div>
<div class="a" style="left:1335px;top:922px;width:1px;height:1px;background:#404040;"></div>
<div class="t" style="left:1192.3px;top:929.942px;font-size:12px;">I</div>
<div class="a" style="left:1223px;top:927.5px;width:53px;height:18px;background:#fff;box-sizing:border-box;border-left:2px solid #000;border-top:2px solid #000;border-right:1px solid #e8e8e8;border-bottom:1px solid #e8e8e8;"></div>
<div class="t" style="left:1227px;top:929.642px;font-size:12px;transform:scaleX(0.8242);transform-origin:0 0;">0</div>
<div class="a" style="left:1283px;top:928px;width:18px;height:17px;background:#f0f0f0;box-sizing:border-box;border-left:1px solid #fff;border-top:1px solid #fff;border-right:1px solid #696969;border-bottom:1px solid #696969;box-shadow:inset -1px -1px 0 #a0a0a0;"></div>
<svg style="left:1283px;top:928px" width="17" height="16"><path d="M8.500 3L4 7.800H7.300V12.500H9.700V7.800H13Z" fill="#000"/></svg>
<div class="a" style="left:1307px;top:928px;width:18px;height:17px;background:#f0f0f0;box-sizing:border-box;border-left:1px solid #fff;border-top:1px solid #fff;border-right:1px solid #696969;border-bottom:1px solid #696969;box-shadow:inset -1px -1px 0 #a0a0a0;"></div>
<svg style="left:1307px;top:928px" width="17" height="16"><path d="M8.500 13L4 8.200H7.300V3.500H9.700V8.200H13Z" fill="#000"/></svg>
<div class="a" style="left:1335px;top:927.5px;width:53px;height:18px;background:#fff;box-sizing:border-box;border-left:2px solid #000;border-top:2px solid #000;border-right:1px solid #e8e8e8;border-bottom:1px solid #e8e8e8;"></div>
<div class="t" style="left:1339px;top:929.642px;font-size:12px;transform:scaleX(0.8242);transform-origin:0 0;">2</div>
<div class="a" style="left:1395px;top:928px;width:18px;height:17px;background:#f0f0f0;box-sizing:border-box;border-left:1px solid #fff;border-top:1px solid #fff;border-right:1px solid #696969;border-bottom:1px solid #696969;box-shadow:inset -1px -1px 0 #a0a0a0;"></div>
<svg style="left:1395px;top:928px" width="17" height="16"><path d="M8.500 3L4 7.800H7.300V12.500H9.700V7.800H13Z" fill="#000"/></svg>
<div class="a" style="left:1419px;top:928px;width:18px;height:17px;background:#f0f0f0;box-sizing:border-box;border-left:1px solid #fff;border-top:1px solid #fff;border-right:1px solid #696969;border-bottom:1px solid #696969;box-shadow:inset -1px -1px 0 #a0a0a0;"></div>
<svg style="left:1419px;top:928px" width="17" height="16"><path d="M8.500 13L4 8.200H7.300V3.500H9.700V8.200H13Z" fill="#000"/></svg>
<div class="t" style="left:1192.3px;top:948.942px;font-size:12px;transform:scaleX(0.8333);transform-origin:0 0;">J</div>
<div class="a" style="left:1223px;top:946.5px;width:53px;height:18px;background:#fff;box-sizing:border-box;border-left:2px solid #000;border-top:2px solid #000;border-right:1px solid #e8e8e8;border-bottom:1px solid #e8e8e8;"></div>
<div class="t" style="left:1227px;top:948.642px;font-size:12px;transform:scaleX(0.8242);transform-origin:0 0;">0</div>
<div class="a" style="left:1283px;top:947px;width:18px;height:17px;background:#f0f0f0;box-sizing:border-box;border-left:1px solid #fff;border-top:1px solid #fff;border-right:1px solid #696969;border-bottom:1px solid #696969;box-shadow:inset -1px -1px 0 #a0a0a0;"></div>
<svg style="left:1283px;top:947px" width="17" height="16"><path d="M8.500 3L4 7.800H7.300V12.500H9.700V7.800H13Z" fill="#000"/></svg>
<div class="a" style="left:1307px;top:947px;width:18px;height:17px;background:#f0f0f0;box-sizing:border-box;border-left:1px solid #fff;border-top:1px solid #fff;border-right:1px solid #696969;border-bottom:1px solid #696969;box-shadow:inset -1px -1px 0 #a0a0a0;"></div>
<svg style="left:1307px;top:947px" width="17" height="16"><path d="M8.500 13L4 8.200H7.300V3.500H9.700V8.200H13Z" fill="#000"/></svg>
<div class="a" style="left:1335px;top:946.5px;width:53px;height:18px;background:#fff;box-sizing:border-box;border-left:2px solid #000;border-top:2px solid #000;border-right:1px solid #e8e8e8;border-bottom:1px solid #e8e8e8;"></div>
<div class="t" style="left:1339px;top:948.642px;font-size:12px;transform:scaleX(0.8242);transform-origin:0 0;">2</div>
<div class="a" style="left:1395px;top:947px;width:18px;height:17px;background:#f0f0f0;box-sizing:border-box;border-left:1px solid #fff;border-top:1px solid #fff;border-right:1px solid #696969;border-bottom:1px solid #696969;box-shadow:inset -1px -1px 0 #a0a0a0;"></div>
<svg style="left:1395px;top:947px" width="17" height="16"><path d="M8.500 3L4 7.800H7.300V12.500H9.700V7.800H13Z" fill="#000"/></svg>
<div class="a" style="left:1419px;top:947px;width:18px;height:17px;background:#f0f0f0;box-sizing:border-box;border-left:1px solid #fff;border-top:1px solid #fff;border-right:1px solid #696969;border-bottom:1px solid #696969;box-shadow:inset -1px -1px 0 #a0a0a0;"></div>
<svg style="left:1419px;top:947px" width="17" height="16"><path d="M8.500 13L4 8.200H7.300V3.500H9.700V8.200H13Z" fill="#000"/></svg>
<div class="t" style="left:1192.3px;top:967.942px;font-size:12px;transform:scaleX(0.8745);transform-origin:0 0;">K</div>
<div class="a" style="left:1223px;top:965.5px;width:53px;height:18px;background:#fff;box-sizing:border-box;border-left:2px solid #000;border-top:2px solid #000;border-right:1px solid #e8e8e8;border-bottom:1px solid #e8e8e8;"></div>
<div class="t" style="left:1227px;top:967.642px;font-size:12px;transform:scaleX(0.8242);transform-origin:0 0;">0</div>
<div class="a" style="left:1283px;top:966px;width:18px;height:17px;background:#f0f0f0;box-sizing:border-box;border-left:1px solid #fff;border-top:1px solid #fff;border-right:1px solid #696969;border-bottom:1px solid #696969;box-shadow:inset -1px -1px 0 #a0a0a0;"></div>
<svg style="left:1283px;top:966px" width="17" height="16"><path d="M8.500 3L4 7.800H7.300V12.500H9.700V7.800H13Z" fill="#000"/></svg>
<div class="a" style="left:1307px;top:966px;width:18px;height:17px;background:#f0f0f0;box-sizing:border-box;border-left:1px solid #fff;border-top:1px solid #fff;border-right:1px solid #696969;border-bottom:1px solid #696969;box-shadow:inset -1px -1px 0 #a0a0a0;"></div>
<svg style="left:1307px;top:966px" width="17" height="16"><path d="M8.500 13L4 8.200H7.300V3.500H9.700V8.200H13Z" fill="#000"/></svg>
<div class="a" style="left:1335px;top:965.5px;width:53px;height:18px;background:#fff;box-sizing:border-box;border-left:2px solid #000;border-top:2px solid #000;border-right:1px solid #e8e8e8;border-bottom:1px solid #e8e8e8;"></div>
<div class="t" style="left:1339px;top:967.642px;font-size:12px;transform:scaleX(0.8242);transform-origin:0 0;">1</div>
<div class="a" style="left:1395px;top:966px;width:18px;height:17px;background:#f0f0f0;box-sizing:border-box;border-left:1px solid #fff;border-top:1px solid #fff;border-right:1px solid #696969;border-bottom:1px solid #696969;box-shadow:inset -1px -1px 0 #a0a0a0;"></div>
<svg style="left:1395px;top:966px" width="17" height="16"><path d="M8.500 3L4 7.800H7.300V12.500H9.700V7.800H13Z" fill="#000"/></svg>
<div class="a" style="left:1419px;top:966px;width:18px;height:17px;background:#f0f0f0;box-sizing:border-box;border-left:1px solid #fff;border-top:1px solid #fff;border-right:1px solid #696969;border-bottom:1px solid #696969;box-shadow:inset -1px -1px 0 #a0a0a0;"></div>
<svg style="left:1419px;top:966px" width="17" height="16"><path d="M8.500 13L4 8.200H7.300V3.500H9.700V8.200H13Z" fill="#000"/></svg>
<div class="t" style="left:1192.3px;top:986.942px;font-size:12px;transform:scaleX(0.9058);transform-origin:0 0;">O3</div>
<div class="a" style="left:1223px;top:984.5px;width:53px;height:18px;background:#fff;box-sizing:border-box;border-left:2px solid #000;border-top:2px solid #000;border-right:1px solid #e8e8e8;border-bottom:1px solid #e8e8e8;"></div>
<div class="t" style="left:1227px;top:986.642px;font-size:12px;transform:scaleX(0.8242);transform-origin:0 0;">0</div>
<div class="a" style="left:1283px;top:985px;width:18px;height:17px;background:#f0f0f0;box-sizing:border-box;border-left:1px solid #fff;border-top:1px solid #fff;border-right:1px solid #696969;border-bottom:1px solid #696969;box-shadow:inset -1px -1px 0 #a0a0a0;"></div>
<svg style="left:1283px;top:985px" width="17" height="16"><path d="M8.500 3L4 7.800H7.300V12.500H9.700V7.800H13Z" fill="#000"/></svg>
<div class="a" style="left:1307px;top:985px;width:18px;height:17px;background:#f0f0f0;box-sizing:border-box;border-left:1px solid #fff;border-top:1px solid #fff;border-right:1px solid #696969;border-bottom:1px solid #696969;box-shadow:inset -1px -1px 0 #a0a0a0;"></div>
<svg style="left:1307px;top:985px" width="17" height="16"><path d="M8.500 13L4 8.200H7.300V3.500H9.700V8.200H13Z" fill="#000"/></svg>
<div class="a" style="left:1335px;top:984.5px;width:53px;height:18px;background:#fff;box-sizing:border-box;border-left:2px solid #000;border-top:2px solid #000;border-right:1px solid #e8e8e8;border-bottom:1px solid #e8e8e8;"></div>
<div class="t" style="left:1339px;top:986.642px;font-size:12px;transform:scaleX(0.8242);transform-origin:0 0;">1</div>
<div class="a" style="left:1395px;top:985px;width:18px;height:17px;background:#f0f0f0;box-sizing:border-box;border-left:1px solid #fff;border-top:1px solid #fff;border-right:1px solid #696969;border-bottom:1px solid #696969;box-shadow:inset -1px -1px 0 #a0a0a0;"></div>
<svg style="left:1395px;top:985px" width="17" height="16"><path d="M8.500 3L4 7.800H7.300V12.500H9.700V7.800H13Z" fill="#000"/></svg>
<div class="a" style="left:1419px;top:985px;width:18px;height:17px;background:#f0f0f0;box-sizing:border-box;border-left:1px solid #fff;border-top:1px solid #fff;border-right:1px solid #696969;border-bottom:1px solid #696969;box-shadow:inset -1px -1px 0 #a0a0a0;"></div>
<svg style="left:1419px;top:985px" width="17" height="16"><path d="M8.500 13L4 8.200H7.300V3.500H9.700V8.200H13Z" fill="#000"/></svg>
<div class="t" style="left:1192.3px;top:1005.94px;font-size:12px;transform:scaleX(0.9058);transform-origin:0 0;">O5</div>
<div class="a" style="left:1223px;top:1003.5px;width:53px;height:18px;background:#fff;box-sizing:border-box;border-left:2px solid #000;border-top:2px solid #000;border-right:1px solid #e8e8e8;border-bottom:1px solid #e8e8e8;"></div>
<div class="t" style="left:1227px;top:1005.64px;font-size:12px;transform:scaleX(0.8242);transform-origin:0 0;">0</div>
<div class="a" style="left:1283px;top:1004px;width:18px;height:17px;background:#f0f0f0;box-sizing:border-box;border-left:1px solid #fff;border-top:1px solid #fff;border-right:1px solid #696969;border-bottom:1px solid #696969;box-shadow:inset -1px -1px 0 #a0a0a0;"></div>
<svg style="left:1283px;top:1004px" width="17" height="16"><path d="M8.500 3L4 7.800H7.300V12.500H9.700V7.800H13Z" fill="#000"/></svg>
<div class="a" style="left:1307px;top:1004px;width:18px;height:17px;background:#f0f0f0;box-sizing:border-box;border-left:1px solid #fff;border-top:1px solid #fff;border-right:1px solid #696969;border-bottom:1px solid #696969;box-shadow:inset -1px -1px 0 #a0a0a0;"></div>
<svg style="left:1307px;top:1004px" width="17" height="16"><path d="M8.500 13L4 8.200H7.300V3.500H9.700V8.200H13Z" fill="#000"/></svg>
<div class="a" style="left:1335px;top:1003.5px;width:53px;height:18px;background:#fff;box-sizing:border-box;border-left:2px solid #000;border-top:2px solid #000;border-right:1px solid #e8e8e8;border-bottom:1px solid #e8e8e8;"></div>
<div class="t" style="left:1339px;top:1005.64px;font-size:12px;transform:scaleX(0.8242);transform-origin:0 0;">4</div>
<div class="a" style="left:1395px;top:1004px;width:18px;height:17px;background:#f0f0f0;box-sizing:border-box;border-left:1px solid #fff;border-top:1px solid #fff;border-right:1px solid #696969;border-bottom:1px solid #696969;box-shadow:inset -1px -1px 0 #a0a0a0;"></div>
<svg style="left:1395px;top:1004px" width="17" height="16"><path d="M8.500 3L4 7.800H7.300V12.500H9.700V7.800H13Z" fill="#000"/></svg>
<div class="a" style="left:1419px;top:1004px;width:18px;height:17px;background:#f0f0f0;box-sizing:border-box;border-left:1px solid #fff;border-top:1px solid #fff;border-right:1px solid #696969;border-bottom:1px solid #696969;box-shadow:inset -1px -1px 0 #a0a0a0;"></div>
<svg style="left:1419px;top:1004px" width="17" height="16"><path d="M8.500 13L4 8.200H7.300V3.500H9.700V8.200H13Z" fill="#000"/></svg>
<div class="t" style="left:1192.3px;top:1024.94px;font-size:12px;transform:scaleX(0.9058);transform-origin:0 0;">O6</div>
<div class="a" style="left:1223px;top:1022.5px;width:53px;height:18px;background:#fff;box-sizing:border-box;border-left:2px solid #000;border-top:2px solid #000;border-right:1px solid #e8e8e8;border-bottom:1px solid #e8e8e8;"></div>
<div class="t" style="left:1227px;top:1024.64px;font-size:12px;transform:scaleX(0.8242);transform-origin:0 0;">0</div>
<div class="a" style="left:1283px;top:1023px;width:18px;height:17px;background:#f0f0f0;box-sizing:border-box;border-left:1px solid #fff;border-top:1px solid #fff;border-right:1px solid #696969;border-bottom:1px solid #696969;box-shadow:inset -1px -1px 0 #a0a0a0;"></div>
<svg style="left:1283px;top:1023px" width="17" height="16"><path d="M8.500 3L4 7.800H7.300V12.500H9.700V7.800H13Z" fill="#000"/></svg>
<div class="a" style="left:1307px;top:1023px;width:18px;height:17px;background:#f0f0f0;box-sizing:border-box;border-left:1px solid #fff;border-top:1px solid #fff;border-right:1px solid #696969;border-bottom:1px solid #696969;box-shadow:inset -1px -1px 0 #a0a0a0;"></div>
<svg style="left:1307px;top:1023px" width="17" height="16"><path d="M8.500 13L4 8.200H7.300V3.500H9.700V8.200H13Z" fill="#000"/></svg>
<div class="a" style="left:1335px;top:1022.5px;width:53px;height:18px;background:#fff;box-sizing:border-box;border-left:2px solid #000;border-top:2px solid #000;border-right:1px solid #e8e8e8;border-bottom:1px solid #e8e8e8;"></div>
<div class="t" style="left:1339px;top:1024.64px;font-size:12px;transform:scaleX(0.8242);transform-origin:0 0;">1</div>
<div class="a" style="left:1395px;top:1023px;width:18px;height:17px;background:#f0f0f0;box-sizing:border-box;border-left:1px solid #fff;border-top:1px solid #fff;border-right:1px solid #696969;border-bottom:1px solid #696969;box-shadow:inset -1px -1px 0 #a0a0a0;"></div>
<svg style="left:1395px;top:1023px" width="17" height="16"><path d="M8.500 3L4 7.800H7.300V12.500H9.700V7.800H13Z" fill="#000"/></svg>
<div class="a" style="left:1419px;top:1023px;width:18px;height:17px;background:#f0f0f0;box-sizing:border-box;border-left:1px solid #fff;border-top:1px solid #fff;border-right:1px solid #696969;border-bottom:1px solid #696969;box-shadow:inset -1px -1px 0 #a0a0a0;"></div>
<svg style="left:1419px;top:1023px" width="17" height="16"><path d="M8.500 13L4 8.200H7.300V3.500H9.700V8.200H13Z" fill="#000"/></svg>
<div class="a" style="left:1442px;top:897px;width:17px;height:143px;background:#f7f7f7;"></div>
<div class="a" style="left:1442px;top:897px;width:17px;height:17px;background:#f0f0f0;box-sizing:border-box;border-left:1px solid #fff;border-top:1px solid #fff;border-right:1px solid #696969;border-bottom:1px solid #696969;box-shadow:inset -1px -1px 0 #a0a0a0;"></div>
<div class="a" style="left:1442px;top:1029px;width:17px;height:17px;background:#f0f0f0;box-sizing:border-box;border-left:1px solid #fff;border-top:1px solid #fff;border-right:1px solid #696969;border-bottom:1px solid #696969;box-shadow:inset -1px -1px 0 #a0a0a0;"></div>
<svg style="left:1446px;top:903px" width="9" height="6"><path d="M0 5.500L4.500 0.500L9 5.500Z" fill="#a0a0a0"/></svg>
<svg style="left:1446px;top:1034px" width="9" height="6"><path d="M0 0.500L4.500 5.500L9 0.500Z" fill="#a0a0a0"/></svg>
<div class="a" style="left:1582px;top:909px;width:85px;height:25px;background:#f0f0f0;box-sizing:border-box;border-left:1px solid #fff;border-top:1px solid #fff;border-right:1px solid #696969;border-bottom:1px solid #696969;box-shadow:inset -1px -1px 0 #a0a0a0;"></div>
<div class="t" style="left:1590.7px;top:915.242px;font-size:12px;transform:scaleX(0.8840);transform-origin:0 0;">Select corners</div>
<div class="a" style="left:1582px;top:934px;width:85px;height:25px;background:#f0f0f0;box-sizing:border-box;border-left:1px solid #fff;border-top:1px solid #fff;border-right:1px solid #696969;border-bottom:1px solid #696969;box-shadow:inset -1px -1px 0 #a0a0a0;"></div>
<div class="t" style="left:1610.5px;top:940.242px;font-size:12px;transform:scaleX(0.8773);transform-origin:0 0;">Reset</div>
<div class="a" style="left:1582px;top:959px;width:85px;height:25px;background:#f0f0f0;box-sizing:border-box;border-left:1px solid #fff;border-top:1px solid #fff;border-right:1px solid #696969;border-bottom:1px solid #696969;box-shadow:inset -1px -1px 0 #a0a0a0;"></div>
<div class="t" style="left:1596.2px;top:965.242px;font-size:12px;transform:scaleX(0.8760);transform-origin:0 0;">Query Edge</div>
<div class="a" style="left:1582px;top:984px;width:85px;height:25px;background:#f0f0f0;box-sizing:border-box;border-left:1px solid #fff;border-top:1px solid #fff;border-right:1px solid #696969;border-bottom:1px solid #696969;box-shadow:inset -1px -1px 0 #a0a0a0;"></div>
<div class="t" style="left:1599.4px;top:990.242px;font-size:12px;transform:scaleX(0.8783);transform-origin:0 0;">Index Sets</div>
<div class="a" style="left:1582px;top:1009px;width:85px;height:25px;background:#f0f0f0;box-sizing:border-box;border-left:1px solid #fff;border-top:1px solid #fff;border-right:1px solid #696969;border-bottom:1px solid #696969;box-shadow:inset -1px -1px 0 #a0a0a0;"></div>
<div class="t" style="left:1611.5px;top:1015.24px;font-size:12px;transform:scaleX(0.8924);transform-origin:0 0;">Done</div>
<div class="a" style="left:0px;top:1040px;width:1916px;height:14px;background:#1f1f1f;"></div>
<div class="a" style="left:196px;top:1040px;width:49px;height:14px;background:#4a4a4a;"></div>
<div class="a" style="left:160px;top:1047px;width:24px;height:7px;background:#b8b8b8;"></div>
<div class="a" style="left:209px;top:1047px;width:24px;height:7px;background:#7a3c86;"></div>
<svg style="left:110px;top:1046px" width="26" height="8"><circle cx="13" cy="14" r="12" fill="#1e90ff"/><circle cx="13" cy="14" r="7" fill="#1f1f1f"/></svg>
<svg style="left:14px;top:1048px" width="20" height="6"><path d="M2 3L18 0V6H2Z" fill="#fff"/></svg>
<div class="a" style="left:64px;top:1050px;width:1px;height:4px;background:#fff;"></div>
<div class="a" style="left:72px;top:1049px;width:1px;height:5px;background:#fff;"></div>
<div class="a" style="left:79px;top:1049px;width:1px;height:5px;background:#fff;"></div>
<div class="t" style="left:1795px;top:1043.19px;font-size:11px;color:#fff;transform:scaleX(1.0899);transform-origin:0 0;">13:23</div>
<div class="a" style="left:1741px;top:1051px;width:1px;height:3px;background:#fff;"></div>
<div class="a" style="left:1878px;top:1051px;width:16px;height:3px;background:#fff;"></div>
<!-- 3D view -->
<div class="a" style="left:442px;top:131px;width:1462.5px;height:752px;background:#fff;"></div>
<svg style="left:442px;top:131px;overflow:hidden" width="1462.5" height="752" viewBox="442 131 1462.5 752" shape-rendering="auto">
<defs><clipPath id="c1"><path d="M1349.0 757.4L1346.9 762.6L1344.4 767.5L1341.5 772.4L1338.3 777.0L1334.7 781.5L1330.7 785.9L1326.4 790.0L1321.7 794.0L1316.6 797.8L1311.2 801.4L1305.4 804.8L1299.3 808.0L1292.9 811.0L1286.2 813.8L1279.1 816.3L1271.8 818.7L1264.1 820.9L1256.2 822.8L1248.0 824.5L1239.5 826.0L1230.8 827.2L1221.8 828.3L1212.6 829.1L1203.1 829.7L1193.5 830.0L1183.7 830.1L1173.6 830.0L1163.4 829.7L1153.1 829.1L1142.6 828.3L1131.9 827.3L1121.1 826.0L1110.2 824.5L1099.3 822.8L1088.2 820.9L1077.1 818.8L1065.9 816.4L1054.6 813.8L1043.4 811.0L1032.1 808.1L1020.8 804.9L1009.5 801.5L998.3 797.9L987.0 794.1L975.9 790.1L964.8 786.0L953.8 781.7L942.9 777.2L932.1 772.5L921.4 767.7L910.8 762.7L900.4 757.6L890.1 752.3L880.0 746.9L870.1 741.4L860.4 735.7L850.9 730.0L841.6 724.1L832.6 718.1L823.8 712.1L815.2 705.9L806.9 699.7L798.9 693.4L791.1 687.0L783.7 680.6L776.5 674.1L769.7 667.6L763.2 661.0L757.0 654.5L751.1 647.9L745.6 641.3L740.4 634.7L735.6 628.1L731.1 621.5L727.0 615.0L723.2 608.5L719.9 602.0L716.9 595.6L714.3 589.2L712.1 582.9L710.2 576.7L708.8 570.5L707.8 564.4L707.1 558.5L706.8 552.6L707.0 546.8L707.5 541.2L708.4 535.6L709.7 530.2L711.4 525.0L713.5 519.8L716.0 514.9L718.9 510.0L722.1 505.4L725.7 500.9L729.7 496.5L734.0 492.4L738.7 488.4L743.8 484.6L749.2 481.0L755.0 477.6L761.1 474.4L767.5 471.4L774.2 468.6L781.3 466.1L788.6 463.7L796.3 461.5L804.2 459.6L812.4 457.9L820.9 456.4L829.6 455.2L838.6 454.1L847.8 453.3L857.3 452.7L866.9 452.4L876.7 452.3L886.8 452.4L897.0 452.7L907.3 453.3L917.8 454.1L928.5 455.1L939.3 456.4L950.2 457.9L961.1 459.6L972.2 461.5L983.3 463.6L994.5 466.0L1005.8 468.6L1017.0 471.4L1028.3 474.3L1039.6 477.5L1050.9 480.9L1062.1 484.5L1073.4 488.3L1084.5 492.3L1095.6 496.4L1106.6 500.7L1117.5 505.2L1128.3 509.9L1139.0 514.7L1149.6 519.7L1160.0 524.8L1170.3 530.1L1180.4 535.5L1190.3 541.0L1200.0 546.7L1209.5 552.4L1218.8 558.3L1227.8 564.3L1236.6 570.3L1245.2 576.5L1253.5 582.7L1261.5 589.0L1269.3 595.4L1276.7 601.8L1283.9 608.3L1290.7 614.8L1297.2 621.4L1303.4 627.9L1309.3 634.5L1314.8 641.1L1320.0 647.7L1324.8 654.3L1329.3 660.9L1333.4 667.4L1337.2 673.9L1340.5 680.4L1343.5 686.8L1346.1 693.2L1348.3 699.5L1350.2 705.7L1351.6 711.9L1352.6 718.0L1353.3 723.9L1353.6 729.8L1353.4 735.6L1352.9 741.2L1352.0 746.8L1350.7 752.2L1349.0 757.4Z"/></clipPath><radialGradient id="glow" gradientUnits="userSpaceOnUse" cx="0" cy="0" r="1" gradientTransform="matrix(318.772 116.244 -54.3093 148.93 1030.2 641.2)"><stop offset=".42" stop-color="#9e1c3e"/><stop offset=".62" stop-color="#b42246"/><stop offset=".8" stop-color="#cc284e"/><stop offset=".93" stop-color="#e02c56"/><stop offset="1" stop-color="#d82a52"/></radialGradient><clipPath id="c2"><path d="M858.0 492.0L1178.0 417.0L1267.0 603.0L1236.0 614.0L1000.0 640.0L870.0 520.0Z"/></clipPath><linearGradient id="gdark" gradientUnits="userSpaceOnUse" x1="1000" y1="440" x2="1100" y2="620"><stop offset="0" stop-color="#981c3c"/><stop offset=".5" stop-color="#aa2042"/><stop offset="1" stop-color="#bc2448"/></linearGradient><clipPath id="c3"><path d="M858.0 492.0L1178.0 417.0L1267.0 603.0L1236.0 614.0L1000.0 640.0L870.0 520.0Z"/></clipPath><clipPath id="c4"><path d="M871.8 494.3L862.9 495.6L854.3 497.2L846.1 499.1L838.2 501.4L830.8 503.9L823.7 506.7L817.1 509.7L811.0 513.1L805.2 516.7L800.0 520.5L795.2 524.6L790.9 529.0L787.1 533.5L783.8 538.3L781.0 543.4L778.7 548.6L777.0 554.0L775.7 559.5L775.0 565.3L774.8 571.2L775.1 577.3L776.0 583.4L777.4 589.7L779.3 596.1L781.7 602.6L784.6 609.2L788.0 615.9L792.0 622.6L796.4 629.3L801.3 636.1L806.7 642.8L812.5 649.6L818.8 656.4L825.5 663.1L832.6 669.7L840.2 676.4L848.1 682.9L856.4 689.4L865.1 695.7L874.1 702.0L975.0 679.0L1000.0 600.0L973.0 492.0Z"/></clipPath><clipPath id="c5"><path d="M905.0 489.0L939.5 489.0L872.0 690.0L864.0 705.0L837.0 684.0Z"/></clipPath><clipPath id="c6"><path d="M1235.0 583.0L1228.3 610.7L1218.0 641.7L1209.4 667.5L1199.0 693.3L1188.7 710.6L1174.9 722.6L1159.4 727.8L1143.9 726.0L1109.5 719.2L1075.0 710.6L1040.6 702.0L1006.0 691.6L973.4 677.8L959.6 664.0L944.0 646.8L933.8 631.3L975.8 490.9L1004.6 488.0L1043.0 499.0L1099.4 519.5L1150.6 543.0L1201.8 566.5L1234.2 585.1Z"/></clipPath><linearGradient id="gb3" gradientUnits="userSpaceOnUse" x1="1090" y1="587" x2="1042.04" y2="718.53"><stop offset="0" stop-color="#ec2e58"/><stop offset=".28" stop-color="#e22c54"/><stop offset=".55" stop-color="#b82044"/><stop offset=".75" stop-color="#d4284e"/><stop offset=".9" stop-color="#ee2e5a"/><stop offset="1" stop-color="#f03058"/></linearGradient><linearGradient id="gbi" gradientUnits="userSpaceOnUse" x1="965" y1="510" x2="1235" y2="600"><stop offset="0" stop-color="#6a1228"/><stop offset=".14" stop-color="#a81e42"/><stop offset=".35" stop-color="#cc264e"/><stop offset="1" stop-color="#e02c58"/></linearGradient><linearGradient id="ghubL" gradientUnits="userSpaceOnUse" x1="932.819" y1="618.893" x2="1191.18" y2="713.107"><stop offset="0" stop-color="#28040c" stop-opacity=".9"/><stop offset=".08" stop-color="#50101f" stop-opacity=".5"/><stop offset=".2" stop-color="#50101f" stop-opacity="0"/><stop offset=".9" stop-color="#50101f" stop-opacity="0"/><stop offset="1" stop-color="#30080f" stop-opacity=".75"/></linearGradient><clipPath id="c7"><path d="M901.0 188.0L1127.0 131.0L1433.6 131.0L1365.0 333.0L1349.0 372.0L1299.0 335.0L806.5 457.6Z"/></clipPath><clipPath id="c8"><path d="M806.5 457.6L1299.0 335.0L1349.0 372.0L858.0 492.0Z"/></clipPath></defs>
<g><path d="M711.4 525.0L712.1 523.3L809.9 254.9L809.3 256.5Z" fill="#971937" stroke="#971937" stroke-width=".6"/><path d="M712.1 523.3L714.8 517.2L812.6 248.8L809.9 254.9Z" fill="#9d1a39" stroke="#9d1a39" stroke-width=".6"/><path d="M714.8 517.2L718.0 511.4L815.9 243.0L812.6 248.8Z" fill="#a51b3c" stroke="#a51b3c" stroke-width=".6"/><path d="M718.0 511.4L721.8 505.8L819.7 237.4L815.9 243.0Z" fill="#ad1c3f" stroke="#ad1c3f" stroke-width=".6"/><path d="M721.8 505.8L726.1 500.4L824.0 232.0L819.7 237.4Z" fill="#b61e41" stroke="#b61e41" stroke-width=".6"/><path d="M726.1 500.4L731.0 495.3L828.8 226.9L824.0 232.0Z" fill="#be1f44" stroke="#be1f44" stroke-width=".6"/><path d="M731.0 495.3L736.3 490.4L834.2 222.0L828.8 226.9Z" fill="#c72047" stroke="#c72047" stroke-width=".6"/><path d="M736.3 490.4L742.2 485.8L840.1 217.4L834.2 222.0Z" fill="#cf2149" stroke="#cf2149" stroke-width=".6"/><path d="M742.2 485.8L748.6 481.4L846.5 213.0L840.1 217.4Z" fill="#d8224c" stroke="#d8224c" stroke-width=".6"/><path d="M748.6 481.4L755.5 477.4L853.3 209.0L846.5 213.0Z" fill="#e0234f" stroke="#e0234f" stroke-width=".6"/><path d="M755.5 477.4L762.8 473.6L860.7 205.2L853.3 209.0Z" fill="#e42450" stroke="#e42450" stroke-width=".6"/><path d="M762.8 473.6L770.6 470.1L868.5 201.7L860.7 205.2Z" fill="#e42450" stroke="#e42450" stroke-width=".6"/><path d="M770.6 470.1L778.9 466.9L876.8 198.5L868.5 201.7Z" fill="#e42450" stroke="#e42450" stroke-width=".6"/><path d="M778.9 466.9L787.6 464.0L885.5 195.6L876.8 198.5Z" fill="#e42450" stroke="#e42450" stroke-width=".6"/><path d="M787.6 464.0L796.7 461.4L894.6 193.0L885.5 195.6Z" fill="#e42450" stroke="#e42450" stroke-width=".6"/><path d="M796.7 461.4L806.3 459.2L904.1 190.8L894.6 193.0Z" fill="#e42450" stroke="#e42450" stroke-width=".6"/><path d="M806.3 459.2L816.2 457.2L914.1 188.8L904.1 190.8Z" fill="#aa1e3c" stroke="#aa1e3c" stroke-width=".6"/><path d="M816.2 457.2L826.5 455.6L924.4 187.2L914.1 188.8Z" fill="#aa1e3c" stroke="#aa1e3c" stroke-width=".6"/><path d="M826.5 455.6L837.1 454.3L935.0 185.9L924.4 187.2Z" fill="#aa1e3c" stroke="#aa1e3c" stroke-width=".6"/><path d="M837.1 454.3L848.1 453.3L946.0 184.9L935.0 185.9Z" fill="#aa1e3c" stroke="#aa1e3c" stroke-width=".6"/><path d="M848.1 453.3L859.4 452.6L957.3 184.2L946.0 184.9Z" fill="#aa1e3c" stroke="#aa1e3c" stroke-width=".6"/><path d="M859.4 452.6L871.0 452.3L968.9 183.9L957.3 184.2Z" fill="#aa1e3c" stroke="#aa1e3c" stroke-width=".6"/><path d="M871.0 452.3L882.9 452.3L980.8 183.9L968.9 183.9Z" fill="#aa1e3c" stroke="#aa1e3c" stroke-width=".6"/><path d="M882.9 452.3L895.0 452.6L992.9 184.2L980.8 183.9Z" fill="#aa1e3c" stroke="#aa1e3c" stroke-width=".6"/><path d="M895.0 452.6L907.4 453.3L1005.3 184.9L992.9 184.2Z" fill="#aa1e3c" stroke="#aa1e3c" stroke-width=".6"/><path d="M907.4 453.3L920.0 454.3L1017.8 185.9L1005.3 184.9Z" fill="#aa1e3c" stroke="#aa1e3c" stroke-width=".6"/><path d="M920.0 454.3L932.7 455.6L1030.6 187.2L1017.8 185.9Z" fill="#aa1e3c" stroke="#aa1e3c" stroke-width=".6"/><path d="M932.7 455.6L945.7 457.2L1043.6 188.8L1030.6 187.2Z" fill="#aa1e3c" stroke="#aa1e3c" stroke-width=".6"/><path d="M945.7 457.2L958.8 459.2L1056.7 190.8L1043.6 188.8Z" fill="#aa1e3c" stroke="#aa1e3c" stroke-width=".6"/><path d="M958.8 459.2L972.0 461.5L1069.9 193.0L1056.7 190.8Z" fill="#aa1e3c" stroke="#aa1e3c" stroke-width=".6"/><path d="M972.0 461.5L985.3 464.0L1083.2 195.6L1069.9 193.0Z" fill="#aa1e3c" stroke="#aa1e3c" stroke-width=".6"/><path d="M985.3 464.0L998.7 466.9L1096.6 198.5L1083.2 195.6Z" fill="#aa1e3c" stroke="#aa1e3c" stroke-width=".6"/><path d="M998.7 466.9L1012.1 470.1L1110.0 201.7L1096.6 198.5Z" fill="#aa1e3c" stroke="#aa1e3c" stroke-width=".6"/><path d="M1012.1 470.1L1025.6 473.6L1123.5 205.2L1110.0 201.7Z" fill="#aa1e3c" stroke="#aa1e3c" stroke-width=".6"/><path d="M1025.6 473.6L1039.1 477.4L1137.0 209.0L1123.5 205.2Z" fill="#aa1e3c" stroke="#aa1e3c" stroke-width=".6"/><path d="M1039.1 477.4L1049.5 480.5L1147.4 212.1L1137.0 209.0Z" fill="#ec2a56" stroke="#ec2a56" stroke-width=".6"/><path d="M1049.5 480.5L1059.9 483.8L1157.8 215.4L1147.4 212.1Z" fill="#ec2a56" stroke="#ec2a56" stroke-width=".6"/><path d="M1059.9 483.8L1070.3 487.2L1168.2 218.8L1157.8 215.4Z" fill="#ec2a56" stroke="#ec2a56" stroke-width=".6"/><path d="M1070.3 487.2L1080.6 490.9L1178.5 222.4L1168.2 218.8Z" fill="#ec2a56" stroke="#ec2a56" stroke-width=".6"/><path d="M1080.6 490.9L1090.9 494.6L1188.8 226.2L1178.5 222.4Z" fill="#ec2a56" stroke="#ec2a56" stroke-width=".6"/><path d="M1090.9 494.6L1101.1 498.6L1199.0 230.1L1188.8 226.2Z" fill="#ec2a56" stroke="#ec2a56" stroke-width=".6"/><path d="M1101.1 498.6L1111.3 502.6L1209.1 234.2L1199.0 230.1Z" fill="#ec2a56" stroke="#ec2a56" stroke-width=".6"/><path d="M1111.3 502.6L1121.3 506.8L1219.2 238.4L1209.1 234.2Z" fill="#ec2a56" stroke="#ec2a56" stroke-width=".6"/><path d="M1121.3 506.8L1131.3 511.2L1229.2 242.8L1219.2 238.4Z" fill="#ec2a56" stroke="#ec2a56" stroke-width=".6"/><path d="M1131.3 511.2L1141.2 515.7L1239.0 247.3L1229.2 242.8Z" fill="#ec2a56" stroke="#ec2a56" stroke-width=".6"/><path d="M1141.2 515.7L1150.9 520.3L1248.8 251.9L1239.0 247.3Z" fill="#ec2a56" stroke="#ec2a56" stroke-width=".6"/><path d="M1150.9 520.3L1160.5 525.1L1258.4 256.7L1248.8 251.9Z" fill="#ec2a56" stroke="#ec2a56" stroke-width=".6"/><path d="M1160.5 525.1L1170.0 529.9L1267.9 261.5L1258.4 256.7Z" fill="#ec2a56" stroke="#ec2a56" stroke-width=".6"/><path d="M1170.0 529.9L1179.4 534.9L1277.2 266.5L1267.9 261.5Z" fill="#ec2a56" stroke="#ec2a56" stroke-width=".6"/><path d="M1179.4 534.9L1188.5 540.0L1286.4 271.6L1277.2 266.5Z" fill="#ec2a56" stroke="#ec2a56" stroke-width=".6"/><path d="M1188.5 540.0L1197.6 545.2L1295.4 276.8L1286.4 271.6Z" fill="#ec2a56" stroke="#ec2a56" stroke-width=".6"/><path d="M1197.6 545.2L1206.4 550.5L1304.3 282.1L1295.4 276.8Z" fill="#ec2a56" stroke="#ec2a56" stroke-width=".6"/><path d="M1206.4 550.5L1215.1 555.9L1312.9 287.5L1304.3 282.1Z" fill="#ec2a56" stroke="#ec2a56" stroke-width=".6"/><path d="M1215.1 555.9L1223.5 561.4L1321.4 293.0L1312.9 287.5Z" fill="#ec2a56" stroke="#ec2a56" stroke-width=".6"/><path d="M1223.5 561.4L1231.8 567.0L1329.7 298.6L1321.4 293.0Z" fill="#ec2a56" stroke="#ec2a56" stroke-width=".6"/><path d="M1231.8 567.0L1239.9 572.6L1337.7 304.2L1329.7 298.6Z" fill="#ec2a56" stroke="#ec2a56" stroke-width=".6"/><path d="M1239.9 572.6L1247.7 578.4L1345.6 309.9L1337.7 304.2Z" fill="#ec2a56" stroke="#ec2a56" stroke-width=".6"/><path d="M1247.7 578.4L1255.3 584.1L1353.2 315.7L1345.6 309.9Z" fill="#ec2a56" stroke="#ec2a56" stroke-width=".6"/><path d="M1255.3 584.1L1262.7 590.0L1360.6 321.6L1353.2 315.7Z" fill="#ec2a56" stroke="#ec2a56" stroke-width=".6"/><path d="M1262.7 590.0L1269.8 595.9L1367.7 327.5L1360.6 321.6Z" fill="#ec2a56" stroke="#ec2a56" stroke-width=".6"/><path d="M1269.8 595.9L1276.7 601.8L1374.6 333.4L1367.7 327.5Z" fill="#ec2a56" stroke="#ec2a56" stroke-width=".6"/><path d="M1276.7 601.8L1283.3 607.8L1381.2 339.4L1374.6 333.4Z" fill="#ec2a56" stroke="#ec2a56" stroke-width=".6"/><path d="M1283.3 607.8L1289.7 613.8L1387.6 345.4L1381.2 339.4Z" fill="#ec2a56" stroke="#ec2a56" stroke-width=".6"/><path d="M1289.7 613.8L1295.8 619.9L1393.7 351.5L1387.6 345.4Z" fill="#ec2a56" stroke="#ec2a56" stroke-width=".6"/><path d="M1295.8 619.9L1301.6 626.0L1399.5 357.5L1393.7 351.5Z" fill="#ec2a56" stroke="#ec2a56" stroke-width=".6"/><path d="M1301.6 626.0L1307.1 632.0L1405.0 363.6L1399.5 357.5Z" fill="#ec2a56" stroke="#ec2a56" stroke-width=".6"/><path d="M1307.1 632.0L1312.4 638.1L1410.3 369.7L1405.0 363.6Z" fill="#ec2a56" stroke="#ec2a56" stroke-width=".6"/><path d="M1312.4 638.1L1317.3 644.2L1415.2 375.8L1410.3 369.7Z" fill="#ec2a56" stroke="#ec2a56" stroke-width=".6"/><path d="M1317.3 644.2L1322.0 650.3L1419.9 381.9L1415.2 375.8Z" fill="#ec2a56" stroke="#ec2a56" stroke-width=".6"/><path d="M1322.0 650.3L1326.3 656.4L1424.2 388.0L1419.9 381.9Z" fill="#ec2a56" stroke="#ec2a56" stroke-width=".6"/><path d="M1326.3 656.4L1330.4 662.5L1428.3 394.1L1424.2 388.0Z" fill="#ea2a55" stroke="#ea2a55" stroke-width=".6"/><path d="M1330.4 662.5L1334.1 668.5L1432.0 400.1L1428.3 394.1Z" fill="#e62954" stroke="#e62954" stroke-width=".6"/><path d="M1334.1 668.5L1337.5 674.6L1435.4 406.2L1432.0 400.1Z" fill="#e22853" stroke="#e22853" stroke-width=".6"/><path d="M1337.5 674.6L1340.6 680.6L1438.5 412.1L1435.4 406.2Z" fill="#de2751" stroke="#de2751" stroke-width=".6"/><path d="M1340.6 680.6L1343.4 686.5L1441.2 418.1L1438.5 412.1Z" fill="#d92750" stroke="#d92750" stroke-width=".6"/><path d="M1343.4 686.5L1345.8 692.4L1443.7 424.0L1441.2 418.1Z" fill="#d5264e" stroke="#d5264e" stroke-width=".6"/><path d="M1345.8 692.4L1347.9 698.2L1445.8 429.8L1443.7 424.0Z" fill="#cf254d" stroke="#cf254d" stroke-width=".6"/><path d="M1347.9 698.2L1349.7 704.0L1447.6 435.6L1445.8 429.8Z" fill="#ca244b" stroke="#ca244b" stroke-width=".6"/><path d="M1349.7 704.0L1351.1 709.7L1449.0 441.3L1447.6 435.6Z" fill="#c52349" stroke="#c52349" stroke-width=".6"/><path d="M1351.1 709.7L1352.2 715.4L1450.1 447.0L1449.0 441.3Z" fill="#bf2247" stroke="#bf2247" stroke-width=".6"/><path d="M1352.2 715.4L1353.0 721.0L1450.9 452.5L1450.1 447.0Z" fill="#b92145" stroke="#b92145" stroke-width=".6"/><path d="M1353.0 721.0L1353.5 726.5L1451.3 458.0L1450.9 452.5Z" fill="#b32044" stroke="#b32044" stroke-width=".6"/><path d="M1353.5 726.5L1353.6 731.8L1451.4 463.4L1451.3 458.0Z" fill="#ad1e42" stroke="#ad1e42" stroke-width=".6"/><path d="M1353.6 731.8L1353.3 737.2L1451.2 468.7L1451.4 463.4Z" fill="#a71d40" stroke="#a71d40" stroke-width=".6"/><path d="M1353.3 737.2L1352.8 742.4L1450.6 473.9L1451.2 468.7Z" fill="#a11c3d" stroke="#a11c3d" stroke-width=".6"/><path d="M1352.8 742.4L1351.8 747.5L1449.7 479.0L1450.6 473.9Z" fill="#9b1b3b" stroke="#9b1b3b" stroke-width=".6"/><path d="M1351.8 747.5L1350.6 752.4L1448.5 484.0L1449.7 479.0Z" fill="#941a39" stroke="#941a39" stroke-width=".6"/><path d="M1350.6 752.4L1349.0 757.3L1446.9 488.9L1448.5 484.0Z" fill="#8e1937" stroke="#8e1937" stroke-width=".6"/><path d="M1349.0 757.3L1349.0 757.4L1446.9 489.0L1446.9 488.9Z" fill="#8a1836" stroke="#8a1836" stroke-width=".6"/></g>
<path d="M711.4 525.0L809.3 256.5M712.1 523.3L809.9 254.9M714.8 517.2L812.6 248.8M718.0 511.4L815.9 243.0M721.8 505.8L819.7 237.4M726.1 500.4L824.0 232.0M731.0 495.3L828.8 226.9M736.3 490.4L834.2 222.0M742.2 485.8L840.1 217.4M748.6 481.4L846.5 213.0M755.5 477.4L853.3 209.0M762.8 473.6L860.7 205.2M770.6 470.1L868.5 201.7M778.9 466.9L876.8 198.5M787.6 464.0L885.5 195.6M796.7 461.4L894.6 193.0M806.3 459.2L904.1 190.8M816.2 457.2L914.1 188.8M826.5 455.6L924.4 187.2M837.1 454.3L935.0 185.9M848.1 453.3L946.0 184.9M859.4 452.6L957.3 184.2M871.0 452.3L968.9 183.9M882.9 452.3L980.8 183.9M895.0 452.6L992.9 184.2M907.4 453.3L1005.3 184.9M920.0 454.3L1017.8 185.9M932.7 455.6L1030.6 187.2M945.7 457.2L1043.6 188.8M958.8 459.2L1056.7 190.8M972.0 461.5L1069.9 193.0M985.3 464.0L1083.2 195.6M998.7 466.9L1096.6 198.5M1012.1 470.1L1110.0 201.7M1025.6 473.6L1123.5 205.2M1039.1 477.4L1137.0 209.0M1049.5 480.5L1147.4 212.1M1059.9 483.8L1157.8 215.4M1070.3 487.2L1168.2 218.8M1080.6 490.9L1178.5 222.4M1090.9 494.6L1188.8 226.2M1101.1 498.6L1199.0 230.1M1111.3 502.6L1209.1 234.2M1121.3 506.8L1219.2 238.4M1131.3 511.2L1229.2 242.8M1141.2 515.7L1239.0 247.3M1150.9 520.3L1248.8 251.9M1160.5 525.1L1258.4 256.7M1170.0 529.9L1267.9 261.5M1179.4 534.9L1277.2 266.5M1188.5 540.0L1286.4 271.6M1197.6 545.2L1295.4 276.8M1206.4 550.5L1304.3 282.1M1215.1 555.9L1312.9 287.5M1223.5 561.4L1321.4 293.0M1231.8 567.0L1329.7 298.6M1239.9 572.6L1337.7 304.2M1247.7 578.4L1345.6 309.9M1255.3 584.1L1353.2 315.7M1262.7 590.0L1360.6 321.6M1269.8 595.9L1367.7 327.5M1276.7 601.8L1374.6 333.4M1283.3 607.8L1381.2 339.4M1289.7 613.8L1387.6 345.4M1295.8 619.9L1393.7 351.5M1301.6 626.0L1399.5 357.5M1307.1 632.0L1405.0 363.6M1312.4 638.1L1410.3 369.7M1317.3 644.2L1415.2 375.8M1322.0 650.3L1419.9 381.9M1326.3 656.4L1424.2 388.0M1330.4 662.5L1428.3 394.1M1334.1 668.5L1432.0 400.1M1337.5 674.6L1435.4 406.2M1340.6 680.6L1438.5 412.1M1343.4 686.5L1441.2 418.1M1345.8 692.4L1443.7 424.0M1347.9 698.2L1445.8 429.8M1349.7 704.0L1447.6 435.6M1351.1 709.7L1449.0 441.3M1352.2 715.4L1450.1 447.0M1353.0 721.0L1450.9 452.5M1353.5 726.5L1451.3 458.0M1353.6 731.8L1451.4 463.4M1353.3 737.2L1451.2 468.7M1352.8 742.4L1450.6 473.9M1351.8 747.5L1449.7 479.0M1350.6 752.4L1448.5 484.0M1349.0 757.3L1446.9 488.9M1349.0 757.4L1446.9 489.0M711.4 525.0L713.5 519.8L716.0 514.9L718.9 510.0L722.1 505.4L725.7 500.9L729.7 496.5L734.0 492.4L738.7 488.4L743.8 484.6L749.2 481.0L755.0 477.6L761.1 474.4L767.5 471.4L774.2 468.6L781.3 466.1L788.6 463.7L796.3 461.5L804.2 459.6L812.4 457.9L820.9 456.4L829.6 455.2L838.6 454.1L847.8 453.3L857.3 452.7L866.9 452.4L876.7 452.3L886.8 452.4L897.0 452.7L907.3 453.3L917.8 454.1L928.5 455.1L939.3 456.4L950.2 457.9L961.1 459.6L972.2 461.5L983.3 463.6L994.5 466.0L1005.8 468.6L1017.0 471.4L1028.3 474.3L1039.6 477.5L1050.9 480.9L1062.1 484.5L1073.4 488.3L1084.5 492.3L1095.6 496.4L1106.6 500.7L1117.5 505.2L1128.3 509.9L1139.0 514.7L1149.6 519.7L1160.0 524.8L1170.3 530.1L1180.4 535.5L1190.3 541.0L1200.0 546.7L1209.5 552.4L1218.8 558.3L1227.8 564.3L1236.6 570.3L1245.2 576.5L1253.5 582.7L1261.5 589.0L1269.3 595.4L1276.7 601.8L1283.9 608.3L1290.7 614.8L1297.2 621.4L1303.4 627.9L1309.3 634.5L1314.8 641.1L1320.0 647.7L1324.8 654.3L1329.3 660.9L1333.4 667.4L1337.2 673.9L1340.5 680.4L1343.5 686.8L1346.1 693.2L1348.3 699.5L1350.2 705.7L1351.6 711.9L1352.6 718.0L1353.3 723.9L1353.6 729.8L1353.4 735.6L1352.9 741.2L1352.0 746.8L1350.7 752.2L1349.0 757.4M715.7 513.3L717.8 508.2L720.2 503.2L723.1 498.4L726.3 493.7L730.0 489.2L733.9 484.9L738.3 480.7L743.0 476.7L748.1 473.0L753.5 469.4L759.2 466.0L765.3 462.8L771.8 459.8L778.5 457.0L785.5 454.4L792.9 452.0L800.6 449.9L808.5 447.9L816.7 446.2L825.2 444.8L833.9 443.5L842.9 442.5L852.1 441.6L861.5 441.1L871.2 440.7L881.0 440.6L891.0 440.7L901.2 441.1L911.6 441.6L922.1 442.4L932.8 443.5L943.5 444.7L954.4 446.2L965.4 447.9L976.5 449.8L987.6 452.0L998.8 454.3L1010.0 456.9L1021.3 459.7L1032.6 462.7L1043.9 465.9L1055.1 469.3L1066.4 472.9L1077.6 476.6L1088.8 480.6L1099.9 484.7L1110.9 489.1L1121.8 493.6L1132.6 498.2L1143.3 503.0L1153.9 508.0L1164.3 513.1L1174.5 518.4L1184.6 523.8L1194.5 529.3L1204.2 535.0L1213.7 540.8L1223.0 546.6L1232.1 552.6L1240.9 558.7L1249.4 564.8L1257.7 571.1L1265.8 577.4L1273.5 583.7L1281.0 590.2L1288.1 596.6L1295.0 603.1L1301.5 609.7L1307.7 616.3L1313.6 622.8L1319.1 629.4L1324.3 636.0L1329.1 642.6L1333.6 649.2L1337.7 655.7L1341.4 662.2L1344.8 668.7L1347.8 675.1L1350.4 681.5L1352.6 687.8L1354.4 694.1L1355.8 700.2L1356.9 706.3L1357.6 712.3L1357.8 718.1L1357.7 723.9L1357.2 729.6L1356.2 735.1L1354.9 740.5L1353.2 745.8M719.9 501.6L722.0 496.5L724.5 491.5L727.4 486.7L730.6 482.0L734.2 477.5L738.2 473.2L742.5 469.0L747.3 465.1L752.3 461.3L757.7 457.7L763.5 454.3L769.6 451.1L776.0 448.1L782.7 445.3L789.8 442.7L797.2 440.4L804.8 438.2L812.7 436.3L821.0 434.6L829.4 433.1L838.2 431.8L847.1 430.8L856.3 430.0L865.8 429.4L875.4 429.1L885.3 428.9L895.3 429.0L905.5 429.4L915.8 430.0L926.4 430.8L937.0 431.8L947.8 433.0L958.7 434.5L969.7 436.2L980.7 438.2L991.9 440.3L1003.1 442.7L1014.3 445.2L1025.6 448.0L1036.8 451.0L1048.1 454.2L1059.4 457.6L1070.7 461.2L1081.9 465.0L1093.0 468.9L1104.1 473.1L1115.1 477.4L1126.0 481.9L1136.9 486.6L1147.5 491.4L1158.1 496.4L1168.5 501.5L1178.8 506.7L1188.9 512.1L1198.8 517.7L1208.5 523.3L1218.0 529.1L1227.3 535.0L1236.3 540.9L1245.1 547.0L1253.7 553.2L1262.0 559.4L1270.0 565.7L1277.8 572.1L1285.2 578.5L1292.4 585.0L1299.2 591.5L1305.7 598.0L1311.9 604.6L1317.8 611.2L1323.3 617.8L1328.5 624.4L1333.4 630.9L1337.8 637.5L1341.9 644.1L1345.7 650.6L1349.0 657.1L1352.0 663.5L1354.6 669.8L1356.8 676.2L1358.7 682.4L1360.1 688.5L1361.2 694.6L1361.8 700.6L1362.1 706.5L1361.9 712.2L1361.4 717.9L1360.5 723.4L1359.2 728.8L1357.5 734.1M724.2 489.9L726.3 484.8L728.8 479.8L731.6 475.0L734.9 470.3L738.5 465.8L742.5 461.5L746.8 457.4L751.5 453.4L756.6 449.6L762.0 446.0L767.8 442.6L773.8 439.4L780.3 436.4L787.0 433.6L794.1 431.1L801.4 428.7L809.1 426.5L817.0 424.6L825.2 422.9L833.7 421.4L842.4 420.1L851.4 419.1L860.6 418.3L870.0 417.7L879.7 417.4L889.5 417.3L899.5 417.4L909.7 417.7L920.1 418.3L930.6 419.1L941.3 420.1L952.0 421.4L962.9 422.9L973.9 424.6L985.0 426.5L996.1 428.6L1007.3 431.0L1018.5 433.6L1029.8 436.3L1041.1 439.3L1052.4 442.5L1063.7 445.9L1074.9 449.5L1086.1 453.3L1097.3 457.3L1108.4 461.4L1119.4 465.7L1130.3 470.2L1141.1 474.9L1151.8 479.7L1162.4 484.7L1172.8 489.8L1183.0 495.1L1193.1 500.5L1203.0 506.0L1212.7 511.6L1222.2 517.4L1231.5 523.3L1240.6 529.3L1249.4 535.3L1257.9 541.5L1266.2 547.7L1274.3 554.0L1282.0 560.4L1289.5 566.8L1296.6 573.3L1303.5 579.8L1310.0 586.4L1316.2 592.9L1322.1 599.5L1327.6 606.1L1332.8 612.7L1337.6 619.3L1342.1 625.8L1346.2 632.4L1349.9 638.9L1353.3 645.4L1356.3 651.8L1358.9 658.2L1361.1 664.5L1362.9 670.7L1364.4 676.9L1365.4 683.0L1366.1 688.9L1366.3 694.8L1366.2 700.6L1365.7 706.2L1364.8 711.8L1363.4 717.2L1361.7 722.4M728.5 478.3L730.5 473.1L733.0 468.2L735.9 463.3L739.1 458.7L742.7 454.2L746.7 449.9L751.1 445.7L755.8 441.7L760.8 437.9L766.2 434.3L772.0 430.9L778.1 427.7L784.5 424.8L791.3 422.0L798.3 419.4L805.7 417.0L813.3 414.9L821.3 412.9L829.5 411.2L837.9 409.7L846.7 408.5L855.6 407.4L864.9 406.6L874.3 406.1L883.9 405.7L893.8 405.6L903.8 405.7L914.0 406.0L924.4 406.6L934.9 407.4L945.5 408.4L956.3 409.7L967.2 411.2L978.2 412.9L989.2 414.8L1000.4 417.0L1011.6 419.3L1022.8 421.9L1034.1 424.7L1045.4 427.7L1056.6 430.9L1067.9 434.3L1079.2 437.8L1090.4 441.6L1101.5 445.6L1112.6 449.7L1123.6 454.1L1134.6 458.6L1145.4 463.2L1156.1 468.0L1166.6 473.0L1177.0 478.1L1187.3 483.4L1197.4 488.8L1207.3 494.3L1217.0 500.0L1226.5 505.7L1235.8 511.6L1244.8 517.6L1253.6 523.7L1262.2 529.8L1270.5 536.1L1278.5 542.4L1286.3 548.7L1293.7 555.2L1300.9 561.6L1307.7 568.1L1314.3 574.7L1320.5 581.3L1326.3 587.8L1331.9 594.4L1337.0 601.0L1341.9 607.6L1346.3 614.2L1350.4 620.7L1354.2 627.2L1357.5 633.7L1360.5 640.1L1363.1 646.5L1365.3 652.8L1367.2 659.1L1368.6 665.2L1369.7 671.3L1370.3 677.3L1370.6 683.1L1370.5 688.9L1369.9 694.6L1369.0 700.1L1367.7 705.5L1366.0 710.8M732.7 466.6L734.8 461.5L737.3 456.5L740.1 451.7L743.4 447.0L747.0 442.5L751.0 438.2L755.3 434.0L760.0 430.1L765.1 426.3L770.5 422.7L776.3 419.3L782.4 416.1L788.8 413.1L795.5 410.3L802.6 407.7L809.9 405.3L817.6 403.2L825.5 401.3L833.7 399.6L842.2 398.1L850.9 396.8L859.9 395.8L869.1 395.0L878.5 394.4L888.2 394.0L898.0 393.9L908.0 394.0L918.2 394.4L928.6 394.9L939.1 395.7L949.8 396.8L960.6 398.0L971.4 399.5L982.4 401.2L993.5 403.1L1004.6 405.3L1015.8 407.6L1027.1 410.2L1038.3 413.0L1049.6 416.0L1060.9 419.2L1072.2 422.6L1083.4 426.2L1094.6 430.0L1105.8 433.9L1116.9 438.1L1127.9 442.4L1138.8 446.9L1149.6 451.5L1160.3 456.4L1170.9 461.3L1181.3 466.5L1191.5 471.7L1201.6 477.1L1211.5 482.7L1221.2 488.3L1230.7 494.1L1240.0 499.9L1249.1 505.9L1257.9 512.0L1266.5 518.1L1274.8 524.4L1282.8 530.7L1290.5 537.1L1298.0 543.5L1305.1 550.0L1312.0 556.5L1318.5 563.0L1324.7 569.6L1330.6 576.2L1336.1 582.8L1341.3 589.4L1346.1 595.9L1350.6 602.5L1354.7 609.1L1358.4 615.6L1361.8 622.0L1364.8 628.5L1367.4 634.8L1369.6 641.1L1371.4 647.4L1372.9 653.5L1373.9 659.6L1374.6 665.6L1374.8 671.5L1374.7 677.2L1374.2 682.9L1373.3 688.4L1372.0 693.8L1370.3 699.1M737.0 454.9L739.1 449.8L741.5 444.8L744.4 440.0L747.6 435.3L751.2 430.8L755.2 426.5L759.6 422.4L764.3 418.4L769.3 414.6L774.8 411.0L780.5 407.6L786.6 404.4L793.0 401.4L799.8 398.6L806.8 396.0L814.2 393.7L821.8 391.5L829.8 389.6L838.0 387.9L846.4 386.4L855.2 385.1L864.2 384.1L873.4 383.3L882.8 382.7L892.4 382.4L902.3 382.3L912.3 382.4L922.5 382.7L932.9 383.3L943.4 384.1L954.0 385.1L964.8 386.4L975.7 387.8L986.7 389.5L997.7 391.5L1008.9 393.6L1020.1 396.0L1031.3 398.6L1042.6 401.3L1053.9 404.3L1065.2 407.5L1076.4 410.9L1087.7 414.5L1098.9 418.3L1110.0 422.2L1121.1 426.4L1132.1 430.7L1143.1 435.2L1153.9 439.9L1164.6 444.7L1175.1 449.7L1185.5 454.8L1195.8 460.1L1205.9 465.5L1215.8 471.0L1225.5 476.6L1235.0 482.4L1244.3 488.3L1253.3 494.3L1262.2 500.3L1270.7 506.5L1279.0 512.7L1287.0 519.0L1294.8 525.4L1302.2 531.8L1309.4 538.3L1316.2 544.8L1322.8 551.3L1329.0 557.9L1334.8 564.5L1340.4 571.1L1345.5 577.7L1350.4 584.3L1354.8 590.8L1359.0 597.4L1362.7 603.9L1366.1 610.4L1369.0 616.8L1371.6 623.2L1373.9 629.5L1375.7 635.7L1377.1 641.9L1378.2 647.9L1378.8 653.9L1379.1 659.8L1379.0 665.6L1378.4 671.2L1377.5 676.8L1376.2 682.2L1374.5 687.4M741.2 443.3L743.3 438.1L745.8 433.2L748.6 428.3L751.9 423.7L755.5 419.2L759.5 414.8L763.8 410.7L768.5 406.7L773.6 402.9L779.0 399.3L784.8 395.9L790.9 392.7L797.3 389.7L804.0 387.0L811.1 384.4L818.4 382.0L826.1 379.9L834.0 377.9L842.2 376.2L850.7 374.7L859.4 373.5L868.4 372.4L877.6 371.6L887.0 371.0L896.7 370.7L906.5 370.6L916.6 370.7L926.8 371.0L937.1 371.6L947.6 372.4L958.3 373.4L969.1 374.7L979.9 376.2L990.9 377.9L1002.0 379.8L1013.1 381.9L1024.3 384.3L1035.6 386.9L1046.8 389.7L1058.1 392.7L1069.4 395.8L1080.7 399.2L1091.9 402.8L1103.1 406.6L1114.3 410.6L1125.4 414.7L1136.4 419.0L1147.3 423.5L1158.1 428.2L1168.8 433.0L1179.4 438.0L1189.8 443.1L1200.1 448.4L1210.1 453.8L1220.1 459.3L1229.8 465.0L1239.3 470.7L1248.5 476.6L1257.6 482.6L1266.4 488.7L1275.0 494.8L1283.3 501.0L1291.3 507.3L1299.0 513.7L1306.5 520.1L1313.6 526.6L1320.5 533.1L1327.0 539.7L1333.2 546.2L1339.1 552.8L1344.6 559.4L1349.8 566.0L1354.6 572.6L1359.1 579.2L1363.2 585.7L1366.9 592.2L1370.3 598.7L1373.3 605.1L1375.9 611.5L1378.1 617.8L1379.9 624.0L1381.4 630.2L1382.4 636.3L1383.1 642.2L1383.4 648.1L1383.2 653.9L1382.7 659.5L1381.8 665.1L1380.5 670.5L1378.8 675.8M745.5 431.6L747.6 426.5L750.0 421.5L752.9 416.7L756.1 412.0L759.7 407.5L763.7 403.2L768.1 399.0L772.8 395.0L777.9 391.3L783.3 387.7L789.0 384.3L795.1 381.1L801.5 378.1L808.3 375.3L815.3 372.7L822.7 370.3L830.3 368.2L838.3 366.3L846.5 364.5L855.0 363.1L863.7 361.8L872.7 360.8L881.9 360.0L891.3 359.4L900.9 359.0L910.8 358.9L920.8 359.0L931.0 359.4L941.4 359.9L951.9 360.7L962.5 361.8L973.3 363.0L984.2 364.5L995.2 366.2L1006.3 368.1L1017.4 370.3L1028.6 372.6L1039.8 375.2L1051.1 378.0L1062.4 381.0L1073.7 384.2L1084.9 387.6L1096.2 391.2L1107.4 394.9L1118.6 398.9L1129.6 403.1L1140.7 407.4L1151.6 411.9L1162.4 416.5L1173.1 421.4L1183.6 426.3L1194.1 431.5L1204.3 436.7L1214.4 442.1L1224.3 447.6L1234.0 453.3L1243.5 459.1L1252.8 464.9L1261.9 470.9L1270.7 477.0L1279.2 483.1L1287.5 489.4L1295.6 495.7L1303.3 502.0L1310.8 508.5L1317.9 514.9L1324.8 521.5L1331.3 528.0L1337.5 534.6L1343.3 541.2L1348.9 547.7L1354.1 554.3L1358.9 560.9L1363.4 567.5L1367.5 574.0L1371.2 580.6L1374.6 587.0L1377.5 593.5L1380.2 599.8L1382.4 606.1L1384.2 612.4L1385.6 618.5L1386.7 624.6L1387.3 630.6L1387.6 636.5L1387.5 642.2L1386.9 647.9L1386.0 653.4L1384.7 658.8L1383.0 664.1M749.7 419.9L751.8 414.8L754.3 409.8L757.2 405.0L760.4 400.3L764.0 395.8L768.0 391.5L772.3 387.3L777.0 383.4L782.1 379.6L787.5 376.0L793.3 372.6L799.4 369.4L805.8 366.4L812.5 363.6L819.6 361.0L826.9 358.7L834.6 356.5L842.5 354.6L850.7 352.9L859.2 351.4L867.9 350.1L876.9 349.1L886.1 348.3L895.6 347.7L905.2 347.4L915.0 347.2L925.1 347.4L935.3 347.7L945.6 348.3L956.1 349.1L966.8 350.1L977.6 351.4L988.5 352.8L999.4 354.5L1010.5 356.5L1021.6 358.6L1032.8 361.0L1044.1 363.5L1055.3 366.3L1066.6 369.3L1077.9 372.5L1089.2 375.9L1100.4 379.5L1111.7 383.3L1122.8 387.2L1133.9 391.4L1144.9 395.7L1155.8 400.2L1166.6 404.9L1177.3 409.7L1187.9 414.7L1198.3 419.8L1208.6 425.0L1218.7 430.4L1228.6 436.0L1238.3 441.6L1247.8 447.4L1257.1 453.3L1266.1 459.2L1274.9 465.3L1283.5 471.5L1291.8 477.7L1299.8 484.0L1307.6 490.4L1315.0 496.8L1322.2 503.3L1329.0 509.8L1335.5 516.3L1341.7 522.9L1347.6 529.5L1353.1 536.1L1358.3 542.7L1363.1 549.3L1367.6 555.8L1371.7 562.4L1375.5 568.9L1378.8 575.4L1381.8 581.8L1384.4 588.2L1386.6 594.5L1388.5 600.7L1389.9 606.9L1390.9 612.9L1391.6 618.9L1391.9 624.8L1391.7 630.6L1391.2 636.2L1390.3 641.7L1389.0 647.1L1387.3 652.4M754.0 408.3L756.1 403.1L758.5 398.1L761.4 393.3L764.6 388.7L768.3 384.2L772.2 379.8L776.6 375.7L781.3 371.7L786.4 367.9L791.8 364.3L797.5 360.9L803.6 357.7L810.1 354.7L816.8 351.9L823.8 349.4L831.2 347.0L838.9 344.8L846.8 342.9L855.0 341.2L863.5 339.7L872.2 338.5L881.2 337.4L890.4 336.6L899.8 336.0L909.5 335.7L919.3 335.6L929.3 335.7L939.5 336.0L949.9 336.6L960.4 337.4L971.1 338.4L981.8 339.7L992.7 341.2L1003.7 342.9L1014.8 344.8L1025.9 346.9L1037.1 349.3L1048.3 351.9L1059.6 354.7L1070.9 357.6L1082.2 360.8L1093.4 364.2L1104.7 367.8L1115.9 371.6L1127.1 375.6L1138.2 379.7L1149.2 384.0L1160.1 388.5L1170.9 393.2L1181.6 398.0L1192.2 403.0L1202.6 408.1L1212.8 413.4L1222.9 418.8L1232.8 424.3L1242.5 430.0L1252.0 435.7L1261.3 441.6L1270.4 447.6L1279.2 453.6L1287.7 459.8L1296.0 466.0L1304.1 472.3L1311.8 478.7L1319.3 485.1L1326.4 491.6L1333.3 498.1L1339.8 504.7L1346.0 511.2L1351.9 517.8L1357.4 524.4L1362.6 531.0L1367.4 537.6L1371.9 544.2L1376.0 550.7L1379.7 557.2L1383.1 563.7L1386.1 570.1L1388.7 576.5L1390.9 582.8L1392.7 589.0L1394.2 595.2L1395.2 601.3L1395.9 607.2L1396.1 613.1L1396.0 618.9L1395.5 624.5L1394.5 630.1L1393.2 635.5L1391.5 640.7M758.2 396.6L760.3 391.5L762.8 386.5L765.7 381.7L768.9 377.0L772.5 372.5L776.5 368.2L780.8 364.0L785.6 360.0L790.6 356.3L796.0 352.7L801.8 349.3L807.9 346.1L814.3 343.1L821.0 340.3L828.1 337.7L835.5 335.3L843.1 333.2L851.0 331.2L859.3 329.5L867.7 328.0L876.5 326.8L885.4 325.8L894.6 324.9L904.1 324.4L913.7 324.0L923.6 323.9L933.6 324.0L943.8 324.4L954.1 324.9L964.7 325.7L975.3 326.8L986.1 328.0L997.0 329.5L1008.0 331.2L1019.0 333.1L1030.2 335.3L1041.4 337.6L1052.6 340.2L1063.9 343.0L1075.1 346.0L1086.4 349.2L1097.7 352.6L1109.0 356.2L1120.2 359.9L1131.3 363.9L1142.4 368.0L1153.4 372.4L1164.3 376.9L1175.2 381.5L1185.9 386.3L1196.4 391.3L1206.8 396.4L1217.1 401.7L1227.2 407.1L1237.1 412.6L1246.8 418.3L1256.3 424.1L1265.6 429.9L1274.6 435.9L1283.4 442.0L1292.0 448.1L1300.3 454.4L1308.3 460.7L1316.1 467.0L1323.5 473.5L1330.7 479.9L1337.5 486.4L1344.0 493.0L1350.2 499.6L1356.1 506.1L1361.6 512.7L1366.8 519.3L1371.7 525.9L1376.1 532.5L1380.2 539.0L1384.0 545.5L1387.3 552.0L1390.3 558.4L1392.9 564.8L1395.1 571.1L1397.0 577.4L1398.4 583.5L1399.5 589.6L1400.1 595.6L1400.4 601.4L1400.2 607.2L1399.7 612.9L1398.8 618.4L1397.5 623.8L1395.8 629.1M762.5 384.9L764.6 379.8L767.1 374.8L769.9 370.0L773.2 365.3L776.8 360.8L780.8 356.5L785.1 352.3L789.8 348.4L794.9 344.6L800.3 341.0L806.1 337.6L812.1 334.4L818.6 331.4L825.3 328.6L832.4 326.0L839.7 323.7L847.4 321.5L855.3 319.6L863.5 317.9L872.0 316.4L880.7 315.1L889.7 314.1L898.9 313.3L908.3 312.7L918.0 312.3L927.8 312.2L937.8 312.3L948.0 312.7L958.4 313.3L968.9 314.1L979.6 315.1L990.3 316.3L1001.2 317.8L1012.2 319.5L1023.3 321.5L1034.4 323.6L1045.6 326.0L1056.8 328.5L1068.1 331.3L1079.4 334.3L1090.7 337.5L1102.0 340.9L1113.2 344.5L1124.4 348.3L1135.6 352.2L1146.7 356.4L1157.7 360.7L1168.6 365.2L1179.4 369.9L1190.1 374.7L1200.7 379.6L1211.1 384.8L1221.3 390.0L1231.4 395.4L1241.3 401.0L1251.0 406.6L1260.5 412.4L1269.8 418.3L1278.9 424.2L1287.7 430.3L1296.2 436.5L1304.5 442.7L1312.6 449.0L1320.3 455.4L1327.8 461.8L1334.9 468.3L1341.8 474.8L1348.3 481.3L1354.5 487.9L1360.4 494.5L1365.9 501.1L1371.1 507.7L1375.9 514.2L1380.4 520.8L1384.5 527.4L1388.2 533.9L1391.6 540.4L1394.6 546.8L1397.2 553.1L1399.4 559.5L1401.2 565.7L1402.7 571.8L1403.7 577.9L1404.4 583.9L1404.6 589.8L1404.5 595.5L1404.0 601.2L1403.1 606.7L1401.7 612.1L1400.0 617.4M766.8 373.2L768.8 368.1L771.3 363.1L774.2 358.3L777.4 353.6L781.0 349.1L785.0 344.8L789.4 340.7L794.1 336.7L799.1 332.9L804.6 329.3L810.3 325.9L816.4 322.7L822.8 319.7L829.6 316.9L836.6 314.4L844.0 312.0L851.6 309.8L859.6 307.9L867.8 306.2L876.2 304.7L885.0 303.4L893.9 302.4L903.2 301.6L912.6 301.0L922.2 300.7L932.1 300.6L942.1 300.7L952.3 301.0L962.7 301.6L973.2 302.4L983.8 303.4L994.6 304.7L1005.5 306.2L1016.5 307.9L1027.5 309.8L1038.7 311.9L1049.9 314.3L1061.1 316.9L1072.4 319.6L1083.7 322.6L1094.9 325.8L1106.2 329.2L1117.5 332.8L1128.7 336.6L1139.8 340.6L1150.9 344.7L1161.9 349.0L1172.9 353.5L1183.7 358.2L1194.4 363.0L1204.9 368.0L1215.3 373.1L1225.6 378.4L1235.7 383.8L1245.6 389.3L1255.3 394.9L1264.8 400.7L1274.1 406.6L1283.1 412.6L1291.9 418.6L1300.5 424.8L1308.8 431.0L1316.8 437.3L1324.6 443.7L1332.0 450.1L1339.2 456.6L1346.0 463.1L1352.6 469.7L1358.8 476.2L1364.6 482.8L1370.2 489.4L1375.3 496.0L1380.2 502.6L1384.6 509.1L1388.7 515.7L1392.5 522.2L1395.8 528.7L1398.8 535.1L1401.4 541.5L1403.6 547.8L1405.5 554.0L1406.9 560.2L1408.0 566.2L1408.6 572.2L1408.9 578.1L1408.8 583.9L1408.2 589.5L1407.3 595.1L1406.0 600.5L1404.3 605.7M771.0 361.6L773.1 356.4L775.6 351.5L778.4 346.6L781.7 342.0L785.3 337.5L789.3 333.1L793.6 329.0L798.3 325.0L803.4 321.2L808.8 317.6L814.6 314.2L820.7 311.0L827.1 308.1L833.8 305.3L840.9 302.7L848.2 300.3L855.9 298.2L863.8 296.2L872.0 294.5L880.5 293.0L889.2 291.8L898.2 290.7L907.4 289.9L916.8 289.4L926.5 289.0L936.3 288.9L946.3 289.0L956.5 289.3L966.9 289.9L977.4 290.7L988.1 291.7L998.9 293.0L1009.7 294.5L1020.7 296.2L1031.8 298.1L1042.9 300.3L1054.1 302.6L1065.4 305.2L1076.6 308.0L1087.9 311.0L1099.2 314.2L1110.5 317.6L1121.7 321.1L1132.9 324.9L1144.1 328.9L1155.2 333.0L1166.2 337.4L1177.1 341.9L1187.9 346.5L1198.6 351.3L1209.2 356.3L1219.6 361.4L1229.9 366.7L1239.9 372.1L1249.8 377.6L1259.5 383.3L1269.1 389.0L1278.3 394.9L1287.4 400.9L1296.2 407.0L1304.8 413.1L1313.1 419.4L1321.1 425.7L1328.8 432.0L1336.3 438.4L1343.4 444.9L1350.3 451.4L1356.8 458.0L1363.0 464.5L1368.9 471.1L1374.4 477.7L1379.6 484.3L1384.4 490.9L1388.9 497.5L1393.0 504.0L1396.7 510.5L1400.1 517.0L1403.1 523.4L1405.7 529.8L1407.9 536.1L1409.7 542.3L1411.2 548.5L1412.2 554.6L1412.9 560.6L1413.1 566.4L1413.0 572.2L1412.5 577.9L1411.6 583.4L1410.3 588.8L1408.6 594.1M775.3 349.9L777.4 344.8L779.8 339.8L782.7 335.0L785.9 330.3L789.5 325.8L793.5 321.5L797.9 317.3L802.6 313.4L807.6 309.6L813.1 306.0L818.8 302.6L824.9 299.4L831.3 296.4L838.1 293.6L845.1 291.0L852.5 288.6L860.1 286.5L868.1 284.6L876.3 282.9L884.8 281.4L893.5 280.1L902.5 279.1L911.7 278.3L921.1 277.7L930.7 277.3L940.6 277.2L950.6 277.3L960.8 277.7L971.2 278.2L981.7 279.0L992.3 280.1L1003.1 281.3L1014.0 282.8L1025.0 284.5L1036.0 286.4L1047.2 288.6L1058.4 290.9L1069.6 293.5L1080.9 296.3L1092.2 299.3L1103.5 302.5L1114.7 305.9L1126.0 309.5L1137.2 313.3L1148.3 317.2L1159.4 321.4L1170.4 325.7L1181.4 330.2L1192.2 334.8L1202.9 339.7L1213.4 344.6L1223.8 349.8L1234.1 355.0L1244.2 360.4L1254.1 366.0L1263.8 371.6L1273.3 377.4L1282.6 383.2L1291.6 389.2L1300.5 395.3L1309.0 401.4L1317.3 407.7L1325.3 414.0L1333.1 420.4L1340.5 426.8L1347.7 433.3L1354.5 439.8L1361.1 446.3L1367.3 452.9L1373.1 459.5L1378.7 466.1L1383.8 472.7L1388.7 479.2L1393.1 485.8L1397.3 492.4L1401.0 498.9L1404.4 505.3L1407.3 511.8L1409.9 518.1L1412.2 524.4L1414.0 530.7L1415.4 536.8L1416.5 542.9L1417.1 548.9L1417.4 554.8L1417.3 560.5L1416.7 566.2L1415.8 571.7L1414.5 577.1L1412.8 582.4M779.5 338.2L781.6 333.1L784.1 328.1L786.9 323.3L790.2 318.6L793.8 314.1L797.8 309.8L802.1 305.7L806.8 301.7L811.9 297.9L817.3 294.3L823.1 290.9L829.2 287.7L835.6 284.7L842.3 281.9L849.4 279.3L856.7 277.0L864.4 274.8L872.3 272.9L880.5 271.2L889.0 269.7L897.7 268.4L906.7 267.4L915.9 266.6L925.4 266.0L935.0 265.7L944.8 265.6L954.9 265.7L965.1 266.0L975.4 266.6L985.9 267.4L996.6 268.4L1007.4 269.7L1018.2 271.1L1029.2 272.8L1040.3 274.8L1051.4 276.9L1062.6 279.3L1073.9 281.8L1085.1 284.6L1096.4 287.6L1107.7 290.8L1119.0 294.2L1130.2 297.8L1141.4 301.6L1152.6 305.5L1163.7 309.7L1174.7 314.0L1185.6 318.5L1196.4 323.2L1207.1 328.0L1217.7 333.0L1228.1 338.1L1238.4 343.4L1248.4 348.8L1258.4 354.3L1268.1 359.9L1277.6 365.7L1286.8 371.6L1295.9 377.6L1304.7 383.6L1313.3 389.8L1321.6 396.0L1329.6 402.3L1337.3 408.7L1344.8 415.1L1352.0 421.6L1358.8 428.1L1365.3 434.6L1371.5 441.2L1377.4 447.8L1382.9 454.4L1388.1 461.0L1392.9 467.6L1397.4 474.1L1401.5 480.7L1405.2 487.2L1408.6 493.7L1411.6 500.1L1414.2 506.5L1416.4 512.8L1418.2 519.0L1419.7 525.2L1420.7 531.2L1421.4 537.2L1421.7 543.1L1421.5 548.9L1421.0 554.5L1420.1 560.0L1418.8 565.5L1417.1 570.7M783.8 326.6L785.9 321.4L788.3 316.5L791.2 311.6L794.4 307.0L798.0 302.5L802.0 298.1L806.4 294.0L811.1 290.0L816.2 286.2L821.6 282.6L827.3 279.2L833.4 276.0L839.8 273.0L846.6 270.3L853.6 267.7L861.0 265.3L868.6 263.2L876.6 261.2L884.8 259.5L893.3 258.0L902.0 256.8L911.0 255.7L920.2 254.9L929.6 254.3L939.2 254.0L949.1 253.9L959.1 254.0L969.3 254.3L979.7 254.9L990.2 255.7L1000.8 256.7L1011.6 258.0L1022.5 259.5L1033.5 261.2L1044.6 263.1L1055.7 265.2L1066.9 267.6L1078.1 270.2L1089.4 273.0L1100.7 276.0L1112.0 279.1L1123.2 282.5L1134.5 286.1L1145.7 289.9L1156.9 293.9L1167.9 298.0L1179.0 302.3L1189.9 306.8L1200.7 311.5L1211.4 316.3L1221.9 321.3L1232.4 326.4L1242.6 331.7L1252.7 337.1L1262.6 342.6L1272.3 348.3L1281.8 354.0L1291.1 359.9L1300.2 365.9L1309.0 372.0L1317.5 378.1L1325.8 384.3L1333.9 390.6L1341.6 397.0L1349.1 403.4L1356.2 409.9L1363.1 416.4L1369.6 423.0L1375.8 429.5L1381.6 436.1L1387.2 442.7L1392.4 449.3L1397.2 455.9L1401.7 462.5L1405.8 469.0L1409.5 475.5L1412.9 482.0L1415.8 488.4L1418.5 494.8L1420.7 501.1L1422.5 507.3L1423.9 513.5L1425.0 519.6L1425.6 525.5L1425.9 531.4L1425.8 537.2L1425.2 542.8L1424.3 548.4L1423.0 553.8L1421.3 559.1M788.0 314.9L790.1 309.8L792.6 304.8L795.5 300.0L798.7 295.3L802.3 290.8L806.3 286.5L810.6 282.3L815.3 278.3L820.4 274.6L825.8 271.0L831.6 267.6L837.7 264.4L844.1 261.4L850.8 258.6L857.9 256.0L865.2 253.6L872.9 251.5L880.8 249.6L889.0 247.8L897.5 246.4L906.2 245.1L915.2 244.1L924.4 243.3L933.9 242.7L943.5 242.3L953.3 242.2L963.4 242.3L973.6 242.7L983.9 243.2L994.4 244.0L1005.1 245.1L1015.9 246.3L1026.8 247.8L1037.7 249.5L1048.8 251.4L1059.9 253.6L1071.1 255.9L1082.4 258.5L1093.6 261.3L1104.9 264.3L1116.2 267.5L1127.5 270.9L1138.7 274.5L1150.0 278.2L1161.1 282.2L1172.2 286.4L1183.2 290.7L1194.1 295.2L1204.9 299.8L1215.6 304.7L1226.2 309.6L1236.6 314.8L1246.9 320.0L1257.0 325.4L1266.9 330.9L1276.6 336.6L1286.1 342.4L1295.4 348.2L1304.4 354.2L1313.2 360.3L1321.8 366.4L1330.1 372.7L1338.1 379.0L1345.9 385.3L1353.3 391.8L1360.5 398.2L1367.3 404.8L1373.8 411.3L1380.0 417.9L1385.9 424.5L1391.4 431.0L1396.6 437.6L1401.4 444.2L1405.9 450.8L1410.0 457.3L1413.8 463.9L1417.1 470.3L1420.1 476.8L1422.7 483.1L1424.9 489.4L1426.8 495.7L1428.2 501.8L1429.2 507.9L1429.9 513.9L1430.2 519.8L1430.0 525.5L1429.5 531.2L1428.6 536.7L1427.3 542.1L1425.6 547.4M792.3 303.2L794.4 298.1L796.9 293.1L799.7 288.3L802.9 283.6L806.6 279.1L810.5 274.8L814.9 270.6L819.6 266.7L824.7 262.9L830.1 259.3L835.8 255.9L841.9 252.7L848.4 249.7L855.1 246.9L862.1 244.3L869.5 242.0L877.2 239.8L885.1 237.9L893.3 236.2L901.8 234.7L910.5 233.4L919.5 232.4L928.7 231.6L938.1 231.0L947.8 230.7L957.6 230.5L967.6 230.7L977.8 231.0L988.2 231.6L998.7 232.4L1009.4 233.4L1020.1 234.6L1031.0 236.1L1042.0 237.8L1053.1 239.8L1064.2 241.9L1075.4 244.3L1086.6 246.8L1097.9 249.6L1109.2 252.6L1120.5 255.8L1131.7 259.2L1143.0 262.8L1154.2 266.6L1165.4 270.5L1176.5 274.7L1187.5 279.0L1198.4 283.5L1209.2 288.2L1219.9 293.0L1230.5 298.0L1240.9 303.1L1251.1 308.3L1261.2 313.7L1271.1 319.3L1280.8 324.9L1290.3 330.7L1299.6 336.6L1308.7 342.5L1317.5 348.6L1326.0 354.8L1334.3 361.0L1342.4 367.3L1350.1 373.7L1357.6 380.1L1364.7 386.6L1371.6 393.1L1378.1 399.6L1384.3 406.2L1390.2 412.8L1395.7 419.4L1400.9 426.0L1405.7 432.6L1410.2 439.1L1414.3 445.7L1418.0 452.2L1421.4 458.7L1424.4 465.1L1427.0 471.5L1429.2 477.8L1431.0 484.0L1432.5 490.2L1433.5 496.2L1434.2 502.2L1434.4 508.1L1434.3 513.9L1433.8 519.5L1432.8 525.0L1431.5 530.4L1429.8 535.7M796.5 291.6L798.6 286.4L801.1 281.4L804.0 276.6L807.2 272.0L810.8 267.5L814.8 263.1L819.1 259.0L823.9 255.0L828.9 251.2L834.3 247.6L840.1 244.2L846.2 241.0L852.6 238.0L859.4 235.2L866.4 232.7L873.8 230.3L881.4 228.1L889.3 226.2L897.6 224.5L906.0 223.0L914.8 221.8L923.7 220.7L932.9 219.9L942.4 219.3L952.0 219.0L961.9 218.9L971.9 219.0L982.1 219.3L992.4 219.9L1003.0 220.7L1013.6 221.7L1024.4 223.0L1035.3 224.5L1046.3 226.2L1057.3 228.1L1068.5 230.2L1079.7 232.6L1090.9 235.2L1102.2 238.0L1113.4 240.9L1124.7 244.1L1136.0 247.5L1147.3 251.1L1158.5 254.9L1169.6 258.9L1180.7 263.0L1191.7 267.3L1202.6 271.8L1213.5 276.5L1224.2 281.3L1234.7 286.3L1245.1 291.4L1255.4 296.7L1265.5 302.1L1275.4 307.6L1285.1 313.3L1294.6 319.0L1303.9 324.9L1312.9 330.9L1321.7 336.9L1330.3 343.1L1338.6 349.3L1346.6 355.6L1354.4 362.0L1361.8 368.4L1369.0 374.9L1375.8 381.4L1382.3 388.0L1388.5 394.5L1394.4 401.1L1399.9 407.7L1405.1 414.3L1410.0 420.9L1414.4 427.5L1418.5 434.0L1422.3 440.5L1425.6 447.0L1428.6 453.4L1431.2 459.8L1433.4 466.1L1435.3 472.3L1436.7 478.5L1437.8 484.6L1438.4 490.5L1438.7 496.4L1438.5 502.2L1438.0 507.8L1437.1 513.4L1435.8 518.8L1434.1 524.0M800.8 279.9L802.9 274.8L805.4 269.8L808.2 265.0L811.5 260.3L815.1 255.8L819.1 251.5L823.4 247.3L828.1 243.3L833.2 239.5L838.6 236.0L844.4 232.6L850.4 229.4L856.9 226.4L863.6 223.6L870.7 221.0L878.0 218.6L885.7 216.5L893.6 214.5L901.8 212.8L910.3 211.3L919.0 210.1L928.0 209.1L937.2 208.2L946.6 207.7L956.3 207.3L966.1 207.2L976.1 207.3L986.3 207.7L996.7 208.2L1007.2 209.0L1017.9 210.1L1028.6 211.3L1039.5 212.8L1050.5 214.5L1061.6 216.4L1072.7 218.6L1083.9 220.9L1095.1 223.5L1106.4 226.3L1117.7 229.3L1129.0 232.5L1140.3 235.9L1151.5 239.4L1162.7 243.2L1173.9 247.2L1185.0 251.3L1196.0 255.7L1206.9 260.2L1217.7 264.8L1228.4 269.6L1239.0 274.6L1249.4 279.7L1259.6 285.0L1269.7 290.4L1279.6 295.9L1289.3 301.6L1298.8 307.4L1308.1 313.2L1317.2 319.2L1326.0 325.3L1334.5 331.4L1342.8 337.7L1350.9 344.0L1358.6 350.3L1366.1 356.8L1373.2 363.2L1380.1 369.7L1386.6 376.3L1392.8 382.9L1398.7 389.4L1404.2 396.0L1409.4 402.6L1414.2 409.2L1418.7 415.8L1422.8 422.3L1426.5 428.8L1429.9 435.3L1432.9 441.7L1435.5 448.1L1437.7 454.4L1439.5 460.7L1441.0 466.8L1442.0 472.9L1442.7 478.9L1442.9 484.7L1442.8 490.5L1442.3 496.2L1441.4 501.7L1440.0 507.1L1438.3 512.4M805.1 268.2L807.1 263.1L809.6 258.1L812.5 253.3L815.7 248.6L819.3 244.1L823.3 239.8L827.7 235.6L832.4 231.7L837.4 227.9L842.9 224.3L848.6 220.9L854.7 217.7L861.1 214.7L867.9 211.9L874.9 209.3L882.3 207.0L889.9 204.8L897.9 202.9L906.1 201.2L914.5 199.7L923.3 198.4L932.2 197.4L941.5 196.6L950.9 196.0L960.5 195.6L970.4 195.5L980.4 195.6L990.6 196.0L1001.0 196.6L1011.5 197.4L1022.1 198.4L1032.9 199.6L1043.8 201.1L1054.8 202.8L1065.8 204.7L1077.0 206.9L1088.2 209.3L1099.4 211.8L1110.7 214.6L1122.0 217.6L1133.2 220.8L1144.5 224.2L1155.8 227.8L1167.0 231.6L1178.1 235.5L1189.2 239.7L1200.2 244.0L1211.2 248.5L1222.0 253.2L1232.7 258.0L1243.2 262.9L1253.6 268.1L1263.9 273.3L1274.0 278.7L1283.9 284.3L1293.6 289.9L1303.1 295.7L1312.4 301.6L1321.4 307.5L1330.2 313.6L1338.8 319.8L1347.1 326.0L1355.1 332.3L1362.9 338.7L1370.3 345.1L1377.5 351.6L1384.3 358.1L1390.9 364.6L1397.1 371.2L1402.9 377.8L1408.5 384.4L1413.6 391.0L1418.5 397.5L1422.9 404.1L1427.0 410.7L1430.8 417.2L1434.1 423.6L1437.1 430.1L1439.7 436.4L1441.9 442.8L1443.8 449.0L1445.2 455.1L1446.3 461.2L1446.9 467.2L1447.2 473.1L1447.1 478.8L1446.5 484.5L1445.6 490.0L1444.3 495.4L1442.6 500.7M809.3 256.5L811.4 251.4L813.9 246.4L816.7 241.6L820.0 236.9L823.6 232.4L827.6 228.1L831.9 224.0L836.6 220.0L841.7 216.2L847.1 212.6L852.9 209.2L859.0 206.0L865.4 203.0L872.1 200.2L879.2 197.6L886.5 195.3L894.2 193.1L902.1 191.2L910.3 189.5L918.8 188.0L927.5 186.7L936.5 185.7L945.7 184.9L955.1 184.3L964.8 184.0L974.6 183.9L984.6 184.0L994.9 184.3L1005.2 184.9L1015.7 185.7L1026.4 186.7L1037.2 188.0L1048.0 189.4L1059.0 191.2L1070.1 193.1L1081.2 195.2L1092.4 197.6L1103.7 200.2L1114.9 202.9L1126.2 205.9L1137.5 209.1L1148.8 212.5L1160.0 216.1L1171.2 219.9L1182.4 223.9L1193.5 228.0L1204.5 232.3L1215.4 236.8L1226.2 241.5L1236.9 246.3L1247.5 251.3L1257.9 256.4L1268.2 261.7L1278.2 267.1L1288.1 272.6L1297.8 278.2L1307.4 284.0L1316.6 289.9L1325.7 295.9L1334.5 301.9L1343.1 308.1L1351.4 314.3L1359.4 320.6L1367.1 327.0L1374.6 333.4L1381.7 339.9L1388.6 346.4L1395.1 352.9L1401.3 359.5L1407.2 366.1L1412.7 372.7L1417.9 379.3L1422.7 385.9L1427.2 392.4L1431.3 399.0L1435.0 405.5L1438.4 412.0L1441.4 418.4L1444.0 424.8L1446.2 431.1L1448.0 437.3L1449.5 443.5L1450.5 449.5L1451.2 455.5L1451.4 461.4L1451.3 467.2L1450.8 472.8L1449.9 478.4L1448.6 483.8L1446.9 489.0" fill="none" stroke="#2b0610" stroke-width="1.2"/>
<path d="M711.4 525.0L809.3 256.5" stroke="#4a0a18" stroke-width="1.6" fill="none"/>
<g clip-path="url(#c1)"><path d="M1349.0 757.4L1346.9 762.6L1344.4 767.5L1341.5 772.4L1338.3 777.0L1334.7 781.5L1330.7 785.9L1326.4 790.0L1321.7 794.0L1316.6 797.8L1311.2 801.4L1305.4 804.8L1299.3 808.0L1292.9 811.0L1286.2 813.8L1279.1 816.3L1271.8 818.7L1264.1 820.9L1256.2 822.8L1248.0 824.5L1239.5 826.0L1230.8 827.2L1221.8 828.3L1212.6 829.1L1203.1 829.7L1193.5 830.0L1183.7 830.1L1173.6 830.0L1163.4 829.7L1153.1 829.1L1142.6 828.3L1131.9 827.3L1121.1 826.0L1110.2 824.5L1099.3 822.8L1088.2 820.9L1077.1 818.8L1065.9 816.4L1054.6 813.8L1043.4 811.0L1032.1 808.1L1020.8 804.9L1009.5 801.5L998.3 797.9L987.0 794.1L975.9 790.1L964.8 786.0L953.8 781.7L942.9 777.2L932.1 772.5L921.4 767.7L910.8 762.7L900.4 757.6L890.1 752.3L880.0 746.9L870.1 741.4L860.4 735.7L850.9 730.0L841.6 724.1L832.6 718.1L823.8 712.1L815.2 705.9L806.9 699.7L798.9 693.4L791.1 687.0L783.7 680.6L776.5 674.1L769.7 667.6L763.2 661.0L757.0 654.5L751.1 647.9L745.6 641.3L740.4 634.7L735.6 628.1L731.1 621.5L727.0 615.0L723.2 608.5L719.9 602.0L716.9 595.6L714.3 589.2L712.1 582.9L710.2 576.7L708.8 570.5L707.8 564.4L707.1 558.5L706.8 552.6L707.0 546.8L707.5 541.2L708.4 535.6L709.7 530.2L711.4 525.0L713.5 519.8L716.0 514.9L718.9 510.0L722.1 505.4L725.7 500.9L729.7 496.5L734.0 492.4L738.7 488.4L743.8 484.6L749.2 481.0L755.0 477.6L761.1 474.4L767.5 471.4L774.2 468.6L781.3 466.1L788.6 463.7L796.3 461.5L804.2 459.6L812.4 457.9L820.9 456.4L829.6 455.2L838.6 454.1L847.8 453.3L857.3 452.7L866.9 452.4L876.7 452.3L886.8 452.4L897.0 452.7L907.3 453.3L917.8 454.1L928.5 455.1L939.3 456.4L950.2 457.9L961.1 459.6L972.2 461.5L983.3 463.6L994.5 466.0L1005.8 468.6L1017.0 471.4L1028.3 474.3L1039.6 477.5L1050.9 480.9L1062.1 484.5L1073.4 488.3L1084.5 492.3L1095.6 496.4L1106.6 500.7L1117.5 505.2L1128.3 509.9L1139.0 514.7L1149.6 519.7L1160.0 524.8L1170.3 530.1L1180.4 535.5L1190.3 541.0L1200.0 546.7L1209.5 552.4L1218.8 558.3L1227.8 564.3L1236.6 570.3L1245.2 576.5L1253.5 582.7L1261.5 589.0L1269.3 595.4L1276.7 601.8L1283.9 608.3L1290.7 614.8L1297.2 621.4L1303.4 627.9L1309.3 634.5L1314.8 641.1L1320.0 647.7L1324.8 654.3L1329.3 660.9L1333.4 667.4L1337.2 673.9L1340.5 680.4L1343.5 686.8L1346.1 693.2L1348.3 699.5L1350.2 705.7L1351.6 711.9L1352.6 718.0L1353.3 723.9L1353.6 729.8L1353.4 735.6L1352.9 741.2L1352.0 746.8L1350.7 752.2L1349.0 757.4Z" fill="#de264e"/><path d="M709.0 600.0L863.0 704.0L1157.0 727.0L1272.0 812.0L1300.0 900.0L650.0 900.0Z" fill="url(#glow)"/><path d="M1157.0 727.0L1157.0 600.0L1277.0 602.0L1400.0 700.0L1272.0 812.0Z" fill="#e82a54"/><path d="M1088.0 708.0L1193.5 830.0M1152.7 790.4L1185.3 830.1M1082.1 708.0L1177.1 830.1M1139.6 790.2L1168.7 829.9M1076.2 707.8L1160.1 829.5M1126.0 789.5L1151.5 829.0M1070.0 707.4L1142.8 828.3M1112.1 788.3L1133.9 827.5M1063.7 706.7L1125.0 826.5M1098.0 786.7L1116.0 825.3M1057.3 705.9L1107.0 824.0M1083.6 784.5L1097.8 822.6M1050.9 704.8L1088.6 821.0M1069.1 781.8L1079.4 819.2M1044.3 703.5L1070.1 817.3M1054.4 778.7L1060.8 815.3M1037.7 702.0L1051.5 813.1M1039.6 775.1L1042.1 810.7M1031.1 700.3L1032.7 808.2M1024.8 771.1L1023.4 805.6M1024.5 698.4L1014.0 802.8M1010.0 766.6L1004.7 799.9M1017.9 696.3L995.3 796.9M995.3 761.7L986.0 793.7M1011.3 694.0L976.8 790.5M980.7 756.4L967.6 787.0M1004.8 691.5L958.4 783.5M966.3 750.7L949.3 779.8M998.4 688.9L940.3 776.1M952.1 744.6L931.3 772.2M992.1 686.1L922.4 768.2M938.1 738.2L913.6 764.1M985.9 683.2L904.9 759.9M924.5 731.5L896.4 755.5M979.9 680.1L887.9 751.1M911.2 724.5L879.5 746.6M974.0 676.9L871.3 742.1M898.3 717.2L863.2 737.4M968.3 673.5L855.3 732.6M885.9 709.6L847.5 727.8M962.9 670.1L839.8 722.9M873.9 701.8L832.3 717.9M957.6 666.6L825.0 712.9M862.5 693.8L817.8 707.8M952.6 662.9L810.9 702.7M851.6 685.6L804.1 697.5M947.9 659.2L797.5 692.2M841.3 677.3L791.1 686.9M943.4 655.5L784.9 681.6M831.7 668.9L778.9 676.2M939.3 651.7L773.1 670.8M822.7 660.3L767.5 665.4M935.4 647.8L762.2 660.0M814.4 651.7L757.0 654.5M931.9 644.0L752.1 649.1M806.9 643.1L747.5 643.6M928.6 640.1L743.0 638.1M800.1 634.4L738.9 632.7M925.8 636.2L734.9 627.2M794.0 625.8L731.2 621.7M923.2 632.4L727.8 616.3M788.8 617.3L724.6 610.9M921.1 628.6L721.7 605.5M784.4 608.8L719.0 600.1M919.3 624.8L716.6 594.8M780.8 600.4L714.4 589.5M917.9 621.1L712.5 584.3M778.0 592.1L710.9 579.1M916.8 617.4L709.6 573.9M776.1 584.1L708.5 568.9M916.1 613.8L707.7 563.8M775.0 576.2L707.1 558.9M915.8 610.4L706.9 554.0M774.8 568.5L706.9 549.2M915.9 607.0L707.1 544.4M775.5 561.1L707.7 539.8M916.4 603.7L708.5 535.2M777.0 553.9L709.6 530.7M917.3 600.6L710.9 526.3M779.3 547.1L712.6 522.0M918.5 597.6L714.5 517.8M782.5 540.5L716.6 513.7M920.2 594.7L719.0 509.7M786.5 534.3L721.7 505.9M922.1 592.0L724.7 502.1M791.4 528.5L727.8 498.5M924.5 589.5L731.3 494.9M797.0 523.0L735.0 491.5M927.2 587.1L738.9 488.3M803.5 517.9L743.1 485.1M930.2 584.9L747.6 482.1M810.6 513.2L752.2 479.2M933.6 582.9L757.1 476.5M818.6 509.0L762.3 473.8M937.3 581.1L767.6 471.4M827.2 505.2L773.2 469.0M941.4 579.5L779.0 466.9M836.5 501.9L785.0 464.8M945.7 578.2L791.2 462.9M846.5 499.0L797.6 461.2M950.3 577.0L804.2 459.6M857.1 496.6L811.0 458.2M955.2 576.0L818.0 456.9M868.2 494.7L825.2 455.8M960.3 575.3L832.5 454.8M880.0 493.3L840.0 454.0M965.6 574.8L847.6 453.3M892.2 492.4L855.5 452.8M971.2 574.5L863.4 452.5M904.8 492.0L871.5 452.3M977.0 574.4L879.7 452.3M917.9 492.1L888.1 452.4M982.9 574.5L896.6 452.7M931.4 492.7L905.1 453.2M989.0 574.9L913.8 453.8M945.2 493.8L922.6 454.5M995.3 575.5L931.5 455.5M959.3 495.3L940.5 456.5M1001.7 576.3L949.5 457.8M973.7 497.4L958.6 459.2M1008.1 577.4L967.8 460.7M988.2 500.0L977.0 462.4M1014.7 578.6L986.3 464.2M1002.8 503.0L995.5 466.2M1021.2 580.1L1004.9 468.4M1017.6 506.5L1014.2 470.6M1027.9 581.7L1023.6 473.1M1032.4 510.4L1033.0 475.6M1034.5 583.6L1042.3 478.3M1047.2 514.8L1051.7 481.2M1041.1 585.7L1061.0 484.2M1061.9 519.6L1070.3 487.3M1047.7 587.9L1079.6 490.5M1076.5 524.8L1088.8 493.9M1054.2 590.3L1098.0 497.4M1091.0 530.4L1107.2 501.0M1060.6 592.9L1116.2 504.7M1105.3 536.4L1125.2 508.5M1067.0 595.7L1134.1 512.5M1119.3 542.7L1143.0 516.5M1073.2 598.6L1151.7 520.7M1133.0 549.4L1160.3 525.0M1079.2 601.6L1168.8 529.3M1146.3 556.4L1177.2 533.8M1085.1 604.8L1185.5 538.3M1159.3 563.6L1193.7 543.0M1090.9 608.1L1201.7 547.7M1171.9 571.1L1209.6 552.5M1096.4 611.5L1217.3 557.4M1183.9 578.9L1224.8 562.3M1101.7 615.1L1232.2 567.3M1117.3 612.5L1116.5 615.8M1126.5 611.3L1125.8 614.8L1124.9 618.2L1123.6 621.4M1136.0 606.5L1135.9 610.4L1135.4 614.0L1134.6 617.5L1133.4 620.9L1132.0 624.0L1130.2 627.0M1145.5 605.6L1145.5 609.6L1145.2 613.5L1144.5 617.1L1143.5 620.6L1142.1 623.9L1140.4 627.0L1138.4 630.0L1136.1 632.7M1154.8 600.7L1155.3 605.0L1155.5 609.1L1155.2 613.1L1154.7 616.9L1153.8 620.5L1152.5 624.0L1150.9 627.3L1149.0 630.4L1146.8 633.3L1144.3 636.0L1141.5 638.5M1163.6 595.4L1164.7 600.0L1165.3 604.5L1165.6 608.8L1165.5 612.9L1165.0 616.9L1164.2 620.7L1163.1 624.3L1161.6 627.7L1159.8 631.0L1157.6 634.0L1155.2 636.9L1152.4 639.6L1149.4 642.0L1146.1 644.3M1173.6 594.8L1174.8 599.6L1175.6 604.2L1176.0 608.7L1176.0 613.0L1175.6 617.1L1174.9 621.1L1173.8 624.8L1172.4 628.4L1170.7 631.8L1168.6 635.0L1166.3 638.0L1163.6 640.8L1160.6 643.5L1157.4 645.9L1153.9 648.0L1150.1 650.0M1182.2 589.4L1183.9 594.5L1185.2 599.4L1186.0 604.2L1186.5 608.8L1186.7 613.3L1186.4 617.5L1185.8 621.7L1184.8 625.6L1183.5 629.3L1181.8 632.9L1179.8 636.2L1177.5 639.4L1174.9 642.4L1171.9 645.1L1168.8 647.7L1165.3 650.0L1161.6 652.1L1157.6 654.0L1153.4 655.7M1192.6 589.0L1194.4 594.3L1195.7 599.4L1196.7 604.3L1197.3 609.1L1197.5 613.7L1197.4 618.2L1196.8 622.5L1195.9 626.5L1194.7 630.4L1193.1 634.1L1191.1 637.7L1188.9 641.0L1186.3 644.1L1183.4 647.0L1180.2 649.7L1176.8 652.2L1173.1 654.4L1169.2 656.5L1165.0 658.3L1160.6 660.0L1156.0 661.4M1200.8 583.4L1203.2 588.9L1205.1 594.4L1206.6 599.6L1207.6 604.7L1208.3 609.7L1208.6 614.5L1208.5 619.1L1208.1 623.5L1207.2 627.7L1206.0 631.8L1204.5 635.6L1202.6 639.3L1200.4 642.8L1197.8 646.0L1195.0 649.1L1191.8 651.9L1188.4 654.5L1184.7 656.9L1180.8 659.1L1176.6 661.1L1172.2 662.9L1167.6 664.4L1162.8 665.8L1157.8 666.9M1211.6 583.3L1214.0 589.0L1216.0 594.6L1217.6 600.1L1218.8 605.3L1219.5 610.4L1219.9 615.4L1219.9 620.1L1219.5 624.7L1218.7 629.1L1217.5 633.3L1216.0 637.3L1214.2 641.1L1212.0 644.8L1209.5 648.2L1206.6 651.3L1203.5 654.3L1200.1 657.1L1196.4 659.6L1192.5 662.0L1188.3 664.1L1183.9 666.0L1179.3 667.7L1174.4 669.1L1169.4 670.4L1164.2 671.4L1158.8 672.2M1219.6 577.4L1222.5 583.5L1225.1 589.4L1227.2 595.1L1228.8 600.7L1230.1 606.1L1230.9 611.4L1231.3 616.5L1231.4 621.4L1231.0 626.2L1230.3 630.7L1229.2 635.1L1227.7 639.2L1225.9 643.2L1223.7 647.0L1221.2 650.5L1218.4 653.8L1215.3 657.0L1211.9 659.9L1208.2 662.6L1204.3 665.0L1200.1 667.3L1195.6 669.3L1191.0 671.1L1186.1 672.7L1181.0 674.1L1175.8 675.3L1170.4 676.2L1164.8 676.9L1159.1 677.4M1230.6 577.6L1233.7 583.8L1236.3 589.9L1238.5 595.8L1240.3 601.6L1241.6 607.2L1242.5 612.6L1243.0 617.9L1243.1 623.0L1242.7 627.8L1242.1 632.6L1241.0 637.1L1239.5 641.4L1237.7 645.5L1235.6 649.4L1233.1 653.1L1230.3 656.6L1227.2 659.8L1223.8 662.9L1220.1 665.7L1216.1 668.3L1211.9 670.7L1207.4 672.8L1202.7 674.8L1197.8 676.5L1192.7 678.0L1187.4 679.3L1181.9 680.3L1176.3 681.2L1170.5 681.8L1164.7 682.2L1158.7 682.4M1238.4 571.6L1242.0 578.1L1245.1 584.4L1247.8 590.7L1250.1 596.7L1251.9 602.7L1253.3 608.4L1254.2 614.0L1254.8 619.4L1254.9 624.7L1254.6 629.7L1253.9 634.6L1252.9 639.3L1251.5 643.7L1249.7 648.0L1247.5 652.0L1245.1 655.9L1242.2 659.5L1239.1 662.9L1235.7 666.1L1232.0 669.0L1228.0 671.8L1223.7 674.3L1219.2 676.6L1214.4 678.6L1209.5 680.5L1204.3 682.1L1198.9 683.5L1193.4 684.6L1187.7 685.6L1181.9 686.3L1175.9 686.8L1169.9 687.1L1163.7 687.2L1157.5 687.1M1256.7 585.2L1259.5 591.6L1261.8 597.9L1263.7 604.0L1265.1 609.9L1266.1 615.7L1266.7 621.2L1266.9 626.6L1266.6 631.8L1266.0 636.9L1264.9 641.7L1263.5 646.3L1261.7 650.7L1259.6 654.9L1257.1 658.9L1254.3 662.6L1251.1 666.2L1247.6 669.5L1243.9 672.6L1239.9 675.4L1235.5 678.1L1231.0 680.5L1226.2 682.7L1221.2 684.6L1215.9 686.4L1210.5 687.9L1204.9 689.1L1199.1 690.2L1193.2 691.0L1187.2 691.6L1181.0 692.0L1174.7 692.2L1168.4 692.2L1162.0 692.0L1155.5 691.5M1256.7 585.2L1245.7 580.9L1234.8 576.8M1273.8 599.3L1275.7 605.5L1277.2 611.6L1278.2 617.5L1278.8 623.3L1279.0 628.8L1278.8 634.2L1278.1 639.3L1277.1 644.3L1275.7 649.1L1273.9 653.6L1271.7 657.9L1269.2 662.1L1266.3 665.9L1263.2 669.6L1259.7 673.1L1255.9 676.3L1251.8 679.3L1247.4 682.1L1242.8 684.6L1237.9 686.9L1232.8 689.0L1227.5 690.8L1222.0 692.4L1216.3 693.8L1210.5 695.0L1204.4 695.9L1198.3 696.6L1192.0 697.1L1185.7 697.4L1179.2 697.5L1172.7 697.3L1166.1 697.0L1159.5 696.4L1152.8 695.7M1273.8 599.3L1263.0 594.5L1252.3 590.0L1241.6 585.8L1230.9 581.8L1220.3 578.0M1289.4 613.5L1290.4 619.6L1291.1 625.5L1291.3 631.2L1291.0 636.7L1290.4 642.0L1289.4 647.1L1287.9 652.0L1286.1 656.7L1283.9 661.2L1281.4 665.5L1278.5 669.5L1275.3 673.3L1271.7 676.9L1267.9 680.2L1263.7 683.3L1259.3 686.2L1254.6 688.9L1249.7 691.3L1244.5 693.5L1239.1 695.4L1233.5 697.2L1227.7 698.7L1221.7 699.9L1215.6 701.0L1209.4 701.8L1203.0 702.4L1196.5 702.7L1189.9 702.9L1183.2 702.8L1176.5 702.6L1169.8 702.1L1163.0 701.4L1156.2 700.6L1149.4 699.5M1289.4 613.5L1278.9 608.4L1268.4 603.6L1257.9 599.0L1247.5 594.6L1237.1 590.5L1226.7 586.6L1216.4 582.9M1303.4 627.9L1303.6 633.8L1303.4 639.5L1302.8 644.9L1301.7 650.2L1300.3 655.2L1298.4 660.1L1296.2 664.7L1293.6 669.1L1290.7 673.2L1287.4 677.2L1283.8 680.9L1279.9 684.3L1275.7 687.6L1271.2 690.6L1266.4 693.4L1261.4 695.9L1256.1 698.2L1250.6 700.3L1244.9 702.1L1239.0 703.7L1232.9 705.0L1226.7 706.2L1220.3 707.1L1213.8 707.8L1207.2 708.2L1200.5 708.4L1193.7 708.5L1186.8 708.3L1179.9 707.9L1173.0 707.3L1166.0 706.5L1159.1 705.5L1152.2 704.4L1145.3 703.0M1303.4 627.9L1293.3 622.6L1283.2 617.4L1273.0 612.5L1262.8 607.7L1252.6 603.3L1242.4 599.0L1232.3 595.0L1222.2 591.2L1212.2 587.7L1202.3 584.4M1315.9 642.4L1315.2 648.0L1314.2 653.4L1312.7 658.6L1310.8 663.6L1308.5 668.4L1305.9 672.9L1302.9 677.2L1299.6 681.2L1295.9 685.1L1291.9 688.7L1287.6 692.0L1283.0 695.2L1278.2 698.0L1273.0 700.7L1267.7 703.1L1262.1 705.2L1256.3 707.2L1250.3 708.9L1244.1 710.3L1237.7 711.5L1231.2 712.5L1224.6 713.3L1217.8 713.8L1210.9 714.2L1204.0 714.3L1197.0 714.1L1189.9 713.8L1182.8 713.3L1175.7 712.6L1168.6 711.6L1161.5 710.5L1154.4 709.2L1147.4 707.8L1140.5 706.1M1315.9 642.4L1306.2 636.8L1296.4 631.3L1286.6 626.1L1276.7 621.1L1266.8 616.3L1256.8 611.7L1246.9 607.3L1237.0 603.2L1227.1 599.3L1217.3 595.7L1207.6 592.2L1198.0 589.1M1326.7 656.9L1325.1 662.3L1323.2 667.4L1320.9 672.2L1318.2 676.9L1315.2 681.3L1311.7 685.5L1308.0 689.5L1303.9 693.2L1299.5 696.7L1294.9 699.9L1289.9 702.9L1284.7 705.6L1279.2 708.1L1273.5 710.4L1267.6 712.4L1261.4 714.2L1255.1 715.8L1248.6 717.1L1242.0 718.1L1235.2 719.0L1228.3 719.6L1221.3 720.0L1214.2 720.2L1207.0 720.1L1199.8 719.9L1192.5 719.4L1185.2 718.7L1177.9 717.9L1170.7 716.8L1163.4 715.6L1156.2 714.1L1149.1 712.6L1142.0 710.8L1135.0 708.9M1326.7 656.9L1317.4 651.0L1308.1 645.3L1298.7 639.8L1289.1 634.5L1279.6 629.4L1269.9 624.5L1260.3 619.9L1250.6 615.4L1240.9 611.2L1231.3 607.2L1221.7 603.4L1212.2 599.9L1202.7 596.6L1193.3 593.5L1184.1 590.7M1335.7 671.3L1333.3 676.3L1330.6 681.1L1327.4 685.7L1323.9 690.0L1320.1 694.1L1315.9 697.9L1311.5 701.5L1306.7 704.8L1301.6 707.9L1296.3 710.8L1290.7 713.4L1284.8 715.7L1278.8 717.9L1272.5 719.7L1266.0 721.4L1259.4 722.8L1252.6 723.9L1245.7 724.8L1238.6 725.5L1231.4 726.0L1224.2 726.2L1216.8 726.2L1209.4 726.0L1202.0 725.6L1194.5 725.0L1187.1 724.2L1179.6 723.2L1172.2 722.0L1164.8 720.6L1157.4 719.1L1150.2 717.3L1143.0 715.4L1135.9 713.4L1128.9 711.2M1335.7 671.3L1327.0 665.2L1318.2 659.3L1309.2 653.5L1300.1 648.0L1290.9 642.6L1281.6 637.5L1272.3 632.5L1262.9 627.8L1253.5 623.3L1244.1 618.9L1234.7 614.9L1225.3 611.0L1216.0 607.4L1206.7 604.0L1197.5 600.8L1188.4 597.8L1179.4 595.1M1342.9 685.5L1339.7 690.2L1336.1 694.6L1332.2 698.8L1327.9 702.8L1323.3 706.5L1318.4 709.9L1313.3 713.1L1307.8 716.1L1302.1 718.8L1296.1 721.2L1289.9 723.4L1283.5 725.4L1276.9 727.1L1270.1 728.6L1263.1 729.8L1256.0 730.8L1248.8 731.6L1241.5 732.1L1234.0 732.4L1226.5 732.5L1218.9 732.3L1211.3 732.0L1203.7 731.4L1196.0 730.6L1188.3 729.7L1180.7 728.5L1173.1 727.2L1165.6 725.6L1158.1 723.9L1150.7 722.1L1143.4 720.1L1136.2 717.9L1129.2 715.6L1122.3 713.1M1342.9 685.5L1334.8 679.3L1326.5 673.1L1318.0 667.2L1309.4 661.4L1300.7 655.8L1291.8 650.4L1282.9 645.2L1273.8 640.2L1264.7 635.4L1255.6 630.8L1246.5 626.4L1237.3 622.3L1228.2 618.3L1219.0 614.6L1210.0 611.1L1201.0 607.8L1192.0 604.8L1183.2 601.9L1174.5 599.4L1165.8 597.0M1348.3 699.5L1344.3 703.8L1339.9 707.9L1335.2 711.7L1330.2 715.2L1324.9 718.5L1319.3 721.6L1313.4 724.4L1307.3 726.9L1300.9 729.2L1294.4 731.2L1287.6 733.0L1280.6 734.6L1273.5 735.9L1266.3 736.9L1258.9 737.8L1251.3 738.3L1243.7 738.7L1236.0 738.8L1228.2 738.7L1220.4 738.4L1212.6 737.9L1204.7 737.2L1196.9 736.2L1189.0 735.1L1181.2 733.8L1173.5 732.3L1165.8 730.6L1158.2 728.8L1150.7 726.8L1143.3 724.6L1136.0 722.3L1128.9 719.9L1121.9 717.3L1115.1 714.6M1348.3 699.5L1340.8 693.1L1333.1 686.8L1325.2 680.7L1317.1 674.7L1308.9 669.0L1300.5 663.3L1291.9 657.9L1283.3 652.7L1274.6 647.6L1265.8 642.8L1257.0 638.1L1248.1 633.7L1239.2 629.4L1230.3 625.4L1221.4 621.6L1212.5 618.0L1203.7 614.6L1194.9 611.5L1186.2 608.5L1177.6 605.9L1169.2 603.4L1160.8 601.1M1351.8 713.1L1347.0 717.0L1341.8 720.7L1336.4 724.1L1330.6 727.2L1324.6 730.1L1318.4 732.7L1311.9 735.1L1305.1 737.2L1298.2 739.1L1291.1 740.7L1283.8 742.1L1276.3 743.2L1268.7 744.1L1261.0 744.7L1253.2 745.1L1245.3 745.3L1237.4 745.3L1229.3 745.0L1221.3 744.5L1213.2 743.8L1205.2 742.9L1197.1 741.8L1189.1 740.5L1181.1 739.0L1173.2 737.4L1165.4 735.6L1157.6 733.6L1150.0 731.4L1142.5 729.1L1135.1 726.7L1127.9 724.1L1120.9 721.4L1114.1 718.6L1107.4 715.7M1351.8 713.1L1345.0 706.6L1337.9 700.2L1330.6 694.0L1323.1 687.9L1315.4 681.9L1307.5 676.1L1299.5 670.5L1291.3 665.0L1283.0 659.8L1274.6 654.7L1266.1 649.8L1257.6 645.1L1248.9 640.6L1240.3 636.3L1231.6 632.2L1222.9 628.3L1214.3 624.6L1205.7 621.2L1197.1 617.9L1188.6 614.9L1180.1 612.1L1171.8 609.6L1163.6 607.2L1155.5 605.1L1147.5 603.2M1353.5 726.3L1347.8 729.8L1341.9 733.0L1335.8 736.0L1329.3 738.7L1322.7 741.1L1315.8 743.3L1308.7 745.3L1301.4 747.0L1293.9 748.4L1286.2 749.6L1278.5 750.5L1270.6 751.2L1262.5 751.7L1254.5 751.9L1246.3 751.9L1238.1 751.6L1229.8 751.2L1221.5 750.5L1213.2 749.7L1204.9 748.6L1196.7 747.3L1188.5 745.9L1180.4 744.2L1172.3 742.4L1164.3 740.4L1156.5 738.3L1148.7 736.0L1141.1 733.5L1133.7 731.0L1126.4 728.3L1119.3 725.4L1112.4 722.5L1105.7 719.5L1099.2 716.3M1353.5 726.3L1347.3 719.7L1340.9 713.3L1334.3 706.9L1327.4 700.7L1320.3 694.6L1313.0 688.7L1305.5 682.9L1297.8 677.3L1290.0 671.8L1282.0 666.5L1273.9 661.4L1265.7 656.5L1257.4 651.7L1249.1 647.2L1240.7 642.8L1232.3 638.7L1223.8 634.7L1215.4 631.0L1207.0 627.5L1198.6 624.1L1190.2 621.1L1182.0 618.2L1173.8 615.5L1165.7 613.1L1157.7 610.9L1149.8 608.9L1142.1 607.1L1134.6 605.6M1353.2 739.0L1346.8 742.0L1340.2 744.8L1333.4 747.3L1326.3 749.6L1319.0 751.6L1311.5 753.4L1303.8 754.8L1296.0 756.1L1288.0 757.1L1279.9 757.8L1271.7 758.3L1263.4 758.6L1255.0 758.6L1246.5 758.4L1238.1 758.0L1229.6 757.3L1221.0 756.5L1212.5 755.4L1204.1 754.2L1195.6 752.7L1187.3 751.1L1179.0 749.3L1170.8 747.3L1162.7 745.2L1154.7 742.9L1146.8 740.4L1139.2 737.8L1131.6 735.1L1124.3 732.3L1117.1 729.3L1110.2 726.2L1103.4 723.1M1353.2 739.0L1347.8 732.4L1342.1 725.9L1336.2 719.5L1329.9 713.2L1323.4 707.0L1316.7 701.0L1309.8 695.1L1302.7 689.3L1295.4 683.7L1287.9 678.2L1280.2 672.9L1272.5 667.8L1264.6 662.8L1256.6 658.1L1248.5 653.5L1240.4 649.1L1232.2 644.9L1224.0 640.9L1215.8 637.1L1207.6 633.5L1199.4 630.1L1191.2 626.9L1183.1 624.0L1175.1 621.2L1167.1 618.7L1159.3 616.4L1151.5 614.3L1143.9 612.4L1136.4 610.8L1129.1 609.4M1351.0 751.1L1343.9 753.7L1336.7 756.0L1329.2 758.1L1321.5 759.9L1313.6 761.4L1305.6 762.7L1297.4 763.7L1289.1 764.5L1280.6 765.1L1272.1 765.4L1263.5 765.4L1254.8 765.2L1246.1 764.8L1237.4 764.2L1228.6 763.4L1219.9 762.3L1211.2 761.1L1202.5 759.7L1193.9 758.0L1185.4 756.2L1176.9 754.2L1168.6 752.1L1160.3 749.8L1152.2 747.3L1144.3 744.7L1136.5 742.0L1128.9 739.1L1121.5 736.1L1114.3 733.0L1107.3 729.8M1351.0 751.1L1346.4 744.5L1341.4 738.0L1336.2 731.6L1330.7 725.3L1324.9 719.0L1318.8 712.9L1312.5 706.9L1306.0 701.0L1299.2 695.3L1292.2 689.7L1285.1 684.2L1277.8 679.0L1270.3 673.8L1262.8 668.8L1255.1 664.0L1247.3 659.4L1239.4 655.0L1231.5 650.8L1223.5 646.7L1215.5 642.8L1207.5 639.2L1199.5 635.7L1191.5 632.5L1183.6 629.5L1175.7 626.7L1167.9 624.1L1160.2 621.7L1152.6 619.5L1145.1 617.6L1137.7 615.8L1130.5 614.3L1123.4 613.0L1116.5 611.9M1346.9 762.6L1339.2 764.7L1331.3 766.5L1323.2 768.1L1314.9 769.5L1306.5 770.5L1298.0 771.3L1289.3 771.9L1280.6 772.2L1271.8 772.3L1262.9 772.2L1253.9 771.8L1244.9 771.2L1235.9 770.4L1227.0 769.3L1218.0 768.1L1209.1 766.6L1200.2 765.0L1191.4 763.2L1182.7 761.2L1174.1 759.0L1165.7 756.7L1157.3 754.2L1149.1 751.6L1141.1 748.8L1133.2 745.9L1125.6 742.9L1118.1 739.8M1346.9 762.6L1343.1 756.1L1338.9 749.6L1334.5 743.2L1329.7 736.9L1324.6 730.6L1319.2 724.4L1313.5 718.4L1307.6 712.4L1301.4 706.6L1295.1 700.9L1288.5 695.3L1281.7 689.9L1274.7 684.6L1267.6 679.5L1260.3 674.5L1252.9 669.7L1245.4 665.0L1237.8 660.6L1230.1 656.3L1222.4 652.2L1214.6 648.3L1206.8 644.6L1199.0 641.1L1191.2 637.8L1183.5 634.7L1175.8 631.8L1168.1 629.2L1160.5 626.7L1153.0 624.4L1145.6 622.4L1138.3 620.6L1131.2 619.0L1124.2 617.6L1117.3 616.4M1340.9 773.3L1332.6 775.0L1324.1 776.3L1315.5 777.4L1306.7 778.3L1297.9 778.9L1288.9 779.2L1279.8 779.3L1270.7 779.2L1261.5 778.8L1252.2 778.2L1243.0 777.4L1233.8 776.4L1224.6 775.1L1215.4 773.7L1206.3 772.0L1197.3 770.2L1188.3 768.2L1179.4 766.0L1170.7 763.6L1162.1 761.1L1153.6 758.5L1145.4 755.7L1137.2 752.7L1129.3 749.7L1121.6 746.5M1340.9 773.3L1338.0 766.9L1334.6 760.5L1330.9 754.2L1326.9 747.9L1322.5 741.6L1317.9 735.5L1312.9 729.4L1307.6 723.4L1302.1 717.5L1296.3 711.7L1290.3 706.1L1284.0 700.5L1277.6 695.1L1271.0 689.8L1264.2 684.7L1257.2 679.8L1250.1 674.9L1242.9 670.3L1235.5 665.8L1228.1 661.5L1220.6 657.4L1213.1 653.5L1205.5 649.7L1197.9 646.2L1190.3 642.8L1182.7 639.7L1175.2 636.7L1167.7 634.0L1160.2 631.4L1152.8 629.1L1145.5 627.0L1138.3 625.1L1131.3 623.4L1124.4 622.0M1333.1 783.3L1324.3 784.4L1315.3 785.3L1306.1 785.9L1296.9 786.3L1287.6 786.4L1278.2 786.3L1268.8 785.9L1259.3 785.3L1249.8 784.5L1240.3 783.5L1230.9 782.2L1221.4 780.7L1212.1 779.1L1202.8 777.2L1193.5 775.2L1184.4 773.0L1175.4 770.6L1166.6 768.1L1157.8 765.4L1149.3 762.5L1140.9 759.6L1132.7 756.5M1333.1 783.3L1331.0 777.0L1328.5 770.7L1325.6 764.5L1322.4 758.2L1318.8 752.1L1314.8 745.9L1310.6 739.9L1306.0 733.9L1301.1 728.0L1296.0 722.2L1290.6 716.4L1284.9 710.8L1279.1 705.3L1272.9 700.0L1266.6 694.7L1260.2 689.6L1253.5 684.6L1246.7 679.8L1239.8 675.2L1232.7 670.7L1225.5 666.4L1218.3 662.2L1211.0 658.3L1203.6 654.5L1196.2 650.9L1188.8 647.5L1181.4 644.3L1174.0 641.3L1166.6 638.5L1159.3 635.9L1152.1 633.5L1144.9 631.3L1137.8 629.4L1130.8 627.6M1323.6 792.4L1314.2 793.1L1304.7 793.4L1295.1 793.6L1285.5 793.4L1275.8 793.1L1266.1 792.5L1256.3 791.7L1246.6 790.6L1236.9 789.3L1227.2 787.9L1217.5 786.2L1208.0 784.3L1198.5 782.2L1189.1 780.0L1179.8 777.6L1170.7 775.0L1161.7 772.3L1152.9 769.4L1144.2 766.4L1135.7 763.2M1323.6 792.4L1322.3 786.3L1320.6 780.2L1318.6 774.1L1316.1 767.9L1313.3 761.9L1310.1 755.8L1306.6 749.8L1302.8 743.8L1298.6 737.9L1294.1 732.1L1289.4 726.4L1284.3 720.7L1279.0 715.2L1273.5 709.7L1267.7 704.4L1261.8 699.2L1255.6 694.1L1249.2 689.1L1242.7 684.3L1236.1 679.7L1229.3 675.2L1222.4 670.9L1215.4 666.7L1208.3 662.7L1201.2 658.9L1194.0 655.3L1186.7 651.8L1179.5 648.6L1172.3 645.6L1165.1 642.7L1157.9 640.1L1150.8 637.6L1143.7 635.4L1136.7 633.3M1312.3 800.7L1302.5 800.8L1292.5 800.7L1282.6 800.3L1272.6 799.7L1262.6 798.9L1252.6 797.8L1242.6 796.5L1232.6 795.0L1222.7 793.3L1212.9 791.4L1203.1 789.3L1193.4 787.0L1183.9 784.6L1174.5 781.9L1165.2 779.2L1156.1 776.2L1147.2 773.2M1312.3 800.7L1311.9 794.8L1311.1 788.8L1309.8 782.9L1308.2 776.9L1306.2 770.9L1303.8 765.0L1301.0 759.1L1297.9 753.2L1294.5 747.3L1290.7 741.5L1286.6 735.8L1282.2 730.1L1277.6 724.6L1272.6 719.1L1267.4 713.7L1262.0 708.4L1256.4 703.2L1250.5 698.2L1244.4 693.2L1238.2 688.5L1231.8 683.8L1225.3 679.3L1218.7 675.0L1211.9 670.8L1205.1 666.8L1198.1 663.0L1191.2 659.3L1184.1 655.9L1177.1 652.6L1170.0 649.5L1163.0 646.6L1155.9 643.9L1148.9 641.4L1142.0 639.1M1299.3 808.0L1289.1 807.6L1278.8 807.0L1268.5 806.1L1258.3 805.0L1248.0 803.7L1237.7 802.2L1227.6 800.4L1217.4 798.5L1207.4 796.4L1197.5 794.0L1187.6 791.5L1178.0 788.9L1168.4 786.0L1159.0 783.1M1299.3 808.0L1299.8 802.3L1299.8 796.6L1299.4 790.8L1298.6 785.0L1297.4 779.2L1295.8 773.4L1293.8 767.6L1291.5 761.8L1288.8 756.1L1285.7 750.3L1282.3 744.7L1278.6 739.0L1274.6 733.5L1270.3 728.0L1265.7 722.5L1260.9 717.2L1255.8 712.0L1250.5 706.9L1244.9 701.9L1239.2 697.0L1233.2 692.2L1227.1 687.6L1220.9 683.1L1214.5 678.8L1208.0 674.6L1201.3 670.6L1194.6 666.7L1187.9 663.1L1181.0 659.6L1174.1 656.3L1167.3 653.1L1160.3 650.2L1153.5 647.4L1146.6 644.9M1284.8 814.3L1274.2 813.4L1263.6 812.3L1253.1 811.0L1242.6 809.4L1232.1 807.6L1221.7 805.6L1211.4 803.4L1201.2 801.1L1191.1 798.5L1181.1 795.8L1171.3 792.9L1161.6 789.9M1284.8 814.3L1286.1 808.9L1287.0 803.4L1287.4 797.9L1287.5 792.3L1287.1 786.7L1286.3 781.1L1285.1 775.5L1283.5 769.8L1281.6 764.2L1279.3 758.5L1276.6 752.9L1273.6 747.3L1270.2 741.8L1266.6 736.3L1262.6 730.9L1258.4 725.6L1253.9 720.3L1249.1 715.2L1244.1 710.1L1238.9 705.1L1233.4 700.3L1227.8 695.6L1221.9 691.0L1215.9 686.5L1209.8 682.2L1203.5 678.0L1197.1 674.0L1190.6 670.1L1184.1 666.4L1177.4 662.9L1170.7 659.6L1164.0 656.4L1157.3 653.4L1150.5 650.7M1268.7 819.6L1257.9 818.2L1247.1 816.6L1236.3 814.8L1225.6 812.8L1215.0 810.5L1204.5 808.1L1194.1 805.5L1183.9 802.7L1173.8 799.8M1268.7 819.6L1270.9 814.5L1272.7 809.3L1273.9 804.1L1274.8 798.7L1275.2 793.4L1275.3 787.9L1274.9 782.5L1274.1 777.0L1272.9 771.5L1271.3 766.0L1269.4 760.5L1267.1 755.0L1264.4 749.6L1261.5 744.2L1258.2 738.8L1254.6 733.5L1250.7 728.2L1246.5 723.0L1242.0 717.9L1237.3 712.9L1232.4 708.0L1227.2 703.2L1221.9 698.5L1216.3 693.9L1210.6 689.5L1204.7 685.2L1198.7 681.0L1192.5 677.0L1186.2 673.2L1179.8 669.5L1173.4 665.9L1166.9 662.6L1160.3 659.4L1153.7 656.4M1251.3 823.8L1240.2 822.0L1229.2 819.9L1218.3 817.6L1207.6 815.1L1196.9 812.4L1186.3 809.6L1175.9 806.6M1251.3 823.8L1254.3 819.1L1256.9 814.2L1259.0 809.3L1260.7 804.2L1262.0 799.1L1262.8 793.9L1263.2 788.7L1263.2 783.4L1262.8 778.1L1261.9 772.8L1260.8 767.4L1259.2 762.1L1257.3 756.7L1255.0 751.4L1252.4 746.1L1249.4 740.8L1246.1 735.6L1242.6 730.4L1238.7 725.3L1234.6 720.3L1230.2 715.4L1225.5 710.5L1220.7 705.7L1215.6 701.1L1210.3 696.5L1204.8 692.1L1199.2 687.8L1193.4 683.7L1187.4 679.7L1181.4 675.8L1175.2 672.1L1168.9 668.6L1162.6 665.2L1156.2 662.0M1232.5 827.0L1221.3 824.7L1210.2 822.1L1199.3 819.4L1188.4 816.4M1232.5 827.0L1236.4 822.6L1239.8 818.1L1242.7 813.5L1245.2 808.7L1247.3 803.9L1248.9 799.0L1250.1 794.0L1250.9 789.0L1251.3 783.9L1251.2 778.7L1250.8 773.6L1249.9 768.4L1248.7 763.2L1247.2 757.9L1245.2 752.7L1243.0 747.6L1240.3 742.4L1237.4 737.3L1234.2 732.2L1230.6 727.2L1226.8 722.2L1222.7 717.4L1218.4 712.6L1213.8 707.9L1209.0 703.3L1203.9 698.8L1198.7 694.4L1193.3 690.1L1187.7 686.0L1182.0 682.0L1176.1 678.1L1170.2 674.4L1164.1 670.9L1157.9 667.5M1212.6 829.1L1201.3 826.3L1190.2 823.3M1212.6 829.1L1217.2 825.1L1221.4 820.9L1225.2 816.7L1228.5 812.3L1231.4 807.8L1233.8 803.2L1235.8 798.5L1237.3 793.7L1238.5 788.8L1239.2 783.9L1239.5 778.9L1239.4 773.9L1238.9 768.9L1238.1 763.8L1236.8 758.8L1235.3 753.7L1233.3 748.6L1231.0 743.6L1228.4 738.6L1225.5 733.6L1222.3 728.7L1218.7 723.8L1214.9 719.0L1210.9 714.3L1206.6 709.6L1202.0 705.1L1197.2 700.6L1192.3 696.3L1187.1 692.0L1181.7 687.9L1176.2 683.9L1170.6 680.1L1164.8 676.4L1158.9 672.8M1197.0 826.5L1202.0 822.7L1206.5 818.8L1210.6 814.8L1214.2 810.6L1217.4 806.3L1220.2 802.0L1222.5 797.5L1224.4 792.9L1225.9 788.2L1227.0 783.5L1227.6 778.7L1227.9 773.9L1227.8 769.0L1227.2 764.1L1226.3 759.1L1225.1 754.2L1223.5 749.3L1221.5 744.4L1219.2 739.5L1216.6 734.6L1213.7 729.7L1210.4 725.0L1206.9 720.2L1203.1 715.6L1199.1 711.0L1194.8 706.5L1190.3 702.1L1185.5 697.8L1180.6 693.6L1175.5 689.5L1170.2 685.5L1164.7 681.7L1159.1 678.0M1186.8 819.9L1191.6 816.3L1196.0 812.5L1200.0 808.6L1203.5 804.5L1206.6 800.3L1209.3 796.1L1211.5 791.7L1213.3 787.2L1214.7 782.7L1215.7 778.1L1216.3 773.4L1216.5 768.7L1216.3 763.9L1215.7 759.1L1214.8 754.3L1213.5 749.5L1211.8 744.7L1209.8 739.9L1207.5 735.2L1204.8 730.4L1201.9 725.7L1198.7 721.1L1195.1 716.5L1191.4 712.0L1187.3 707.5L1183.1 703.2L1178.6 698.9L1173.8 694.7L1168.9 690.7L1163.8 686.7L1158.6 682.9M1181.5 809.8L1185.8 806.1L1189.6 802.3L1193.0 798.3L1196.0 794.2L1198.6 790.1L1200.7 785.8L1202.4 781.4L1203.7 777.0L1204.6 772.5L1205.1 768.0L1205.2 763.4L1205.0 758.7L1204.3 754.1L1203.3 749.4L1202.0 744.7L1200.3 740.0L1198.2 735.4L1195.9 730.7L1193.2 726.1L1190.2 721.6L1187.0 717.0L1183.5 712.6L1179.7 708.2L1175.6 703.9L1171.4 699.7L1166.9 695.5L1162.2 691.5L1157.3 687.6M1171.7 803.3L1175.9 799.7L1179.6 795.9L1182.8 792.1L1185.7 788.1L1188.1 784.0L1190.1 779.8L1191.7 775.6L1192.9 771.2L1193.7 766.9L1194.1 762.4L1194.2 757.9L1193.8 753.4L1193.1 748.9L1192.1 744.3L1190.6 739.8L1188.9 735.2L1186.8 730.7L1184.4 726.1L1181.7 721.7L1178.7 717.2L1175.4 712.8L1171.9 708.5L1168.1 704.3L1164.0 700.1L1159.7 696.0L1155.3 692.0M1166.2 793.1L1169.7 789.5L1172.9 785.7L1175.6 781.8L1177.9 777.9L1179.8 773.8L1181.3 769.6L1182.4 765.4L1183.1 761.1L1183.4 756.8L1183.3 752.4L1182.9 748.0L1182.1 743.6L1181.0 739.1L1179.5 734.7L1177.7 730.2L1175.5 725.8L1173.1 721.4L1170.3 717.1L1167.3 712.8L1163.9 708.5L1160.4 704.3L1156.5 700.2L1152.5 696.1M1156.8 786.6L1160.2 783.0L1163.2 779.3L1165.7 775.5L1167.9 771.6L1169.7 767.6L1171.0 763.6L1172.0 759.5L1172.6 755.3L1172.8 751.0L1172.7 746.8L1172.1 742.5L1171.3 738.1L1170.0 733.8L1168.5 729.5L1166.6 725.1L1164.4 720.8L1161.9 716.6L1159.0 712.3L1156.0 708.1L1152.6 704.0L1149.0 699.9M1150.9 776.5L1153.7 772.9L1156.2 769.2L1158.2 765.3L1159.8 761.4L1161.1 757.5L1161.9 753.4L1162.4 749.3L1162.5 745.2L1162.2 741.0L1161.6 736.8L1160.6 732.6L1159.3 728.4L1157.6 724.1L1155.7 719.9L1153.4 715.7L1150.8 711.6L1147.9 707.4L1144.8 703.4M1141.9 769.9L1144.6 766.4L1146.9 762.7L1148.7 759.0L1150.2 755.2L1151.3 751.3L1152.0 747.3L1152.4 743.3L1152.4 739.3L1152.0 735.2L1151.2 731.1L1150.2 727.0L1148.7 722.8L1147.0 718.7L1144.9 714.6L1142.6 710.5L1139.9 706.5M1135.7 759.8L1137.8 756.2L1139.6 752.6L1140.9 748.8L1141.8 745.0L1142.4 741.2L1142.6 737.2L1142.5 733.3L1142.0 729.3L1141.1 725.3L1139.9 721.2L1138.4 717.2L1136.5 713.2L1134.4 709.1M1127.1 753.2L1129.1 749.7L1130.6 746.1L1131.8 742.4L1132.6 738.7L1133.1 734.9L1133.1 731.1L1132.8 727.2L1132.2 723.3L1131.2 719.3L1129.9 715.4L1128.2 711.4M1120.6 743.1L1122.0 739.6L1123.0 736.0L1123.7 732.3L1123.9 728.6L1123.9 724.8L1123.4 721.0L1122.6 717.2L1121.5 713.3M1113.7 733.1L1114.5 729.5L1115.0 725.9L1115.1 722.2L1114.9 718.5L1114.3 714.8M1105.6 726.5L1106.3 723.0L1106.6 719.4L1106.5 715.8M1159.2 790.3L1152.3 790.4L1145.2 790.4L1138.0 790.2L1130.8 789.8L1123.4 789.3L1116.0 788.7L1108.4 787.9L1100.8 787.0L1093.1 786.0L1085.4 784.8L1077.6 783.4L1069.7 782.0L1061.8 780.3L1053.9 778.6L1046.0 776.7L1038.0 774.7L1030.1 772.6L1022.1 770.3L1014.2 767.9L1006.2 765.4L998.3 762.7L990.4 760.0L982.6 757.1L974.8 754.1L967.1 751.0L959.4 747.8L951.8 744.5L944.2 741.1L936.8 737.6L929.4 734.0L922.2 730.3L915.0 726.5L907.9 722.7L901.0 718.8L894.2 714.7L887.5 710.7L881.0 706.5L874.6 702.3L868.4 698.0L862.3 693.7L856.4 689.3L850.6 684.9L845.1 680.4L839.7 675.9L834.5 671.4L829.4 666.8L824.6 662.2L820.0 657.6L815.6 653.0L811.4 648.3L807.4 643.7L803.6 639.0L800.0 634.4L796.7 629.7L793.6 625.1L790.7 620.5L788.0 615.9L785.6 611.3L783.5 606.8L781.5 602.3L779.8 597.8L778.4 593.4L777.2 589.0L776.2 584.7L775.5 580.4L775.0 576.2L774.8 572.0L774.8 567.9L775.1 563.9L775.6 560.0L776.4 556.1L777.4 552.3L778.7 548.7L780.2 545.0L781.9 541.5L783.9 538.1L786.2 534.8L788.6 531.6L791.3 528.5L794.3 525.5L797.4 522.6L800.8 519.9L804.4 517.2L808.3 514.7L812.3 512.3L816.6 510.0L821.0 507.9L825.7 505.8L830.6 503.9L835.6 502.2L840.9 500.6L846.3 499.1L851.9 497.7L857.7 496.5L863.7 495.4L869.8 494.5L876.1 493.7L882.5 493.1L889.1 492.6L895.8 492.2L902.6 492.0L909.5 492.0L916.6 492.1L923.8 492.3L931.1 492.7L938.5 493.2L946.0 493.8L953.5 494.6L961.1 495.6L968.8 496.7L976.6 497.9L984.4 499.3L992.2 500.8L1000.1 502.4L1008.1 504.2L1016.0 506.1L1023.9 508.1L1031.9 510.3L1039.9 512.6L1047.8 515.0L1055.7 517.6L1063.7 520.2L1071.5 523.0L1079.4 525.9L1087.1 528.9L1094.9 532.0L1102.5 535.2L1110.1 538.6L1117.7 542.0L1125.1 545.5L1132.4 549.1L1139.7 552.8L1146.8 556.6L1153.8 560.5L1160.8 564.4L1167.5 568.5L1174.2 572.6L1180.7 576.7L1187.0 581.0L1193.2 585.2M1170.5 803.4L1163.0 803.5L1155.3 803.5L1147.5 803.2L1139.6 802.9L1131.6 802.3L1123.5 801.6L1115.3 800.8L1107.0 799.8L1098.6 798.7L1090.2 797.4L1081.7 795.9L1073.2 794.3L1064.6 792.5L1056.0 790.6L1047.4 788.6L1038.7 786.4L1030.1 784.1L1021.4 781.6L1012.8 779.0L1004.1 776.3L995.5 773.4L987.0 770.4L978.4 767.3L969.9 764.0L961.5 760.6L953.2 757.2L944.9 753.6L936.7 749.9L928.6 746.1L920.6 742.1L912.7 738.1L904.9 734.0L897.2 729.8L889.7 725.6L882.3 721.2L875.0 716.8L867.9 712.2L861.0 707.7L854.2 703.0L847.6 698.3L841.1 693.5L834.9 688.7L828.8 683.9L823.0 679.0L817.3 674.0L811.8 669.1L806.6 664.1L801.6 659.0L796.8 654.0L792.2 649.0L787.8 643.9L783.7 638.8L779.8 633.8L776.2 628.7L772.8 623.7L769.7 618.7L766.8 613.7L764.2 608.7L761.8 603.8L759.7 598.9L757.9 594.0L756.3 589.2L755.0 584.4L753.9 579.7L753.2 575.1L752.6 570.5L752.4 566.0L752.4 561.5L752.7 557.1L753.3 552.9L754.2 548.7L755.3 544.6L756.6 540.5L758.3 536.6L760.2 532.8L762.3 529.1L764.8 525.5L767.5 522.0L770.4 518.6L773.6 515.4L777.0 512.2L780.7 509.2L784.6 506.3L788.8 503.6L793.2 501.0L797.8 498.5L802.7 496.2L807.8 494.0L813.1 491.9L818.6 490.0L824.3 488.2L830.2 486.6L836.3 485.1L842.6 483.8L849.1 482.7L855.7 481.7L862.6 480.8L869.5 480.1L876.7 479.6L884.0 479.2L891.4 479.0L899.0 478.9L906.7 479.0L914.5 479.2L922.4 479.6L930.4 480.2L938.6 480.9L946.8 481.8L955.1 482.8L963.4 484.0L971.9 485.3L980.4 486.8L988.9 488.4L997.5 490.2L1006.1 492.2L1014.7 494.2L1023.4 496.5L1032.1 498.8L1040.7 501.3L1049.4 503.9L1058.0 506.7L1066.6 509.6L1075.2 512.6L1083.7 515.8L1092.1 519.1L1100.5 522.4L1108.9 525.9L1117.2 529.6L1125.3 533.3L1133.4 537.1L1141.4 541.1L1149.3 545.1L1157.1 549.2L1164.7 553.4L1172.2 557.7L1179.6 562.1L1186.8 566.5L1193.9 571.1L1200.8 575.7L1207.5 580.3M1181.8 816.5L1173.7 816.6L1165.4 816.5L1157.0 816.3L1148.4 815.9L1139.8 815.3L1131.0 814.6L1122.1 813.7L1113.2 812.6L1104.1 811.4L1095.0 809.9L1085.9 808.4L1076.7 806.6L1067.4 804.7L1058.1 802.7L1048.8 800.5L1039.4 798.1L1030.1 795.6L1020.7 792.9L1011.4 790.1L1002.0 787.1L992.7 784.0L983.5 780.8L974.3 777.4L965.1 773.9L956.0 770.3L947.0 766.5L938.0 762.6L929.2 758.6L920.4 754.5L911.7 750.3L903.2 745.9L894.8 741.5L886.5 737.0L878.4 732.4L870.4 727.6L862.5 722.8L854.8 718.0L847.3 713.0L840.0 708.0L832.9 702.9L825.9 697.8L819.2 692.6L812.6 687.3L806.3 682.0L800.1 676.7L794.2 671.3L788.6 665.9L783.1 660.5L777.9 655.0L773.0 649.6L768.3 644.1L763.9 638.7L759.7 633.2L755.7 627.7L752.1 622.3L748.7 616.9L745.6 611.5L742.7 606.1L740.2 600.8L737.9 595.5L735.9 590.2L734.2 585.0L732.8 579.9L731.7 574.8L730.8 569.7L730.3 564.8L730.0 559.9L730.0 555.1L730.4 550.4L731.0 545.7L731.9 541.2L733.1 536.8L734.6 532.4L736.3 528.2L738.4 524.1L740.7 520.1L743.4 516.2L746.3 512.4L749.4 508.7L752.9 505.2L756.6 501.8L760.6 498.6L764.8 495.5L769.3 492.5L774.1 489.7L779.1 487.0L784.4 484.5L789.9 482.1L795.6 479.9L801.5 477.8L807.7 475.9L814.1 474.1L820.7 472.6L827.5 471.1L834.5 469.9L841.7 468.8L849.0 467.9L856.6 467.1L864.3 466.5L872.2 466.1L880.2 465.9L888.4 465.8L896.7 465.9L905.1 466.2L913.7 466.6L922.4 467.2L931.2 468.0L940.1 468.9L949.0 470.0L958.1 471.3L967.2 472.8L976.4 474.4L985.6 476.1L994.9 478.1L1004.2 480.1L1013.5 482.4L1022.9 484.8L1032.2 487.3L1041.6 490.0L1050.9 492.9L1060.2 495.9L1069.5 499.0L1078.8 502.3L1088.0 505.7L1097.1 509.2L1106.2 512.9L1115.2 516.7L1124.2 520.6L1133.0 524.6L1141.7 528.7L1150.4 533.0L1158.9 537.3L1167.3 541.8L1175.5 546.3L1183.6 551.0L1191.6 555.7L1199.4 560.5L1207.1 565.4L1214.5 570.4L1221.8 575.4M1152.9 783.1L1145.2 783.2L1137.4 783.1L1129.4 782.8L1121.2 782.3L1113.0 781.7L1104.6 780.8L1096.2 779.8L1087.6 778.6L1079.0 777.2L1070.3 775.6L1061.6 773.9L1052.8 771.9L1044.0 769.8L1035.1 767.6L1026.3 765.1L1017.5 762.5L1008.7 759.8L999.9 756.8L991.1 753.8L982.4 750.5L973.8 747.2L965.2 743.7L956.8 740.0L948.4 736.3L940.1 732.4L932.0 728.3L924.0 724.2L916.1 720.0L908.4 715.6L900.8 711.2L893.4 706.6L886.2 702.0L879.2 697.3L872.4 692.5L865.7 687.7L859.4 682.8L853.2 677.8L847.2 672.8L841.6 667.7L836.1 662.7L830.9 657.5L826.0 652.4L821.3 647.3L817.0 642.1L812.9 636.9L809.1 631.8L805.5 626.6L802.3 621.5L799.4 616.4L796.8 611.3L794.5 606.3L792.5 601.3L790.8 596.4L789.4 591.5L788.4 586.7L787.7 582.0L787.3 577.4L787.2 572.8L787.4 568.3L788.0 563.9L788.9 559.6L790.1 555.5L791.6 551.4L793.4 547.5L795.6 543.7L798.0 540.0L800.8 536.4L803.8 533.0L807.2 529.7L810.9 526.6L814.8 523.6L819.0 520.8L823.5 518.2L828.3 515.7L833.4 513.3L838.7 511.2L844.3 509.2L850.1 507.4L856.1 505.7L862.4 504.3L868.9 503.0L875.6 501.9L882.5 501.0L889.7 500.3L897.0 499.7L904.4 499.4L912.1 499.2L919.9 499.3L927.8 499.5L935.9 499.9L944.1 500.4L952.4 501.2L960.8 502.2L969.4 503.3L978.0 504.6L986.6 506.1L995.3 507.8L1004.1 509.7L1012.9 511.7L1021.7 513.9L1030.6 516.3L1039.4 518.8L1048.2 521.5L1057.0 524.4L1065.8 527.4L1074.5 530.6L1083.2 533.9L1091.7 537.3L1100.2 540.9L1108.7 544.6L1117.0 548.5L1125.2 552.4L1133.2 556.5L1141.2 560.7L1149.0 565.0L1156.6 569.4L1164.0 573.9L1171.3 578.5L1178.4 583.2L1185.3 587.9M1146.7 775.9L1139.4 775.9L1131.9 775.9L1124.3 775.6L1116.6 775.1L1108.8 774.5L1100.8 773.7L1092.8 772.7L1084.7 771.6L1076.5 770.2L1068.3 768.8L1060.0 767.1L1051.6 765.3L1043.3 763.3L1034.9 761.1L1026.5 758.8L1018.1 756.3L1009.8 753.7L1001.4 750.9L993.1 748.0L984.9 745.0L976.7 741.8L968.6 738.4L960.5 735.0L952.6 731.4L944.7 727.7L937.0 723.9L929.4 720.0L921.9 716.0L914.6 711.8L907.4 707.6L900.4 703.3L893.5 698.9L886.9 694.4L880.4 689.9L874.1 685.3L868.1 680.7L862.2 675.9L856.6 671.2L851.2 666.4L846.0 661.6L841.1 656.7L836.4 651.8L832.0 646.9L827.8 642.0L823.9 637.1L820.3 632.3L817.0 627.4L813.9 622.5L811.2 617.7L808.7 612.9L806.5 608.1L804.6 603.4L803.0 598.7L801.7 594.1L800.7 589.5L800.0 585.0L799.7 580.6L799.6 576.3L799.8 572.0L800.3 567.9L801.2 563.8L802.3 559.8L803.7 556.0L805.5 552.3L807.5 548.6L809.8 545.1L812.5 541.8L815.4 538.5L818.6 535.4L822.0 532.5L825.8 529.6L829.8 527.0L834.1 524.4L838.6 522.1L843.4 519.9L848.5 517.8L853.7 515.9L859.3 514.2L865.0 512.6L871.0 511.3L877.1 510.1L883.5 509.0L890.1 508.2L896.8 507.5L903.8 507.0L910.8 506.6L918.1 506.5L925.5 506.5L933.0 506.7L940.7 507.1L948.5 507.6L956.4 508.4L964.4 509.3L972.5 510.3L980.6 511.6L988.8 513.0L997.1 514.6L1005.4 516.4L1013.8 518.3L1022.2 520.4L1030.5 522.7L1038.9 525.1L1047.3 527.6L1055.6 530.3L1064.0 533.2L1072.2 536.2L1080.5 539.3L1088.6 542.6L1096.7 546.0L1104.7 549.5L1112.5 553.2L1120.3 557.0L1128.0 560.8L1135.5 564.8L1142.9 568.9L1150.1 573.1L1157.2 577.4L1164.1 581.7L1170.9 586.2L1177.4 590.7M1140.4 768.6L1133.5 768.7L1126.4 768.6L1119.3 768.4L1111.9 767.9L1104.5 767.3L1097.0 766.6L1089.4 765.7L1081.8 764.6L1074.0 763.3L1066.2 761.9L1058.4 760.3L1050.5 758.6L1042.6 756.7L1034.6 754.7L1026.7 752.5L1018.8 750.1L1010.9 747.7L1003.0 745.0L995.1 742.3L987.3 739.4L979.6 736.4L971.9 733.2L964.3 730.0L956.7 726.6L949.3 723.1L942.0 719.5L934.8 715.7L927.7 711.9L920.8 708.0L914.0 704.0L907.4 700.0L900.9 695.8L894.6 691.6L888.5 687.3L882.5 682.9L876.8 678.5L871.2 674.1L865.9 669.6L860.8 665.0L855.9 660.5L851.2 655.9L846.8 651.3L842.6 646.6L838.7 642.0L835.0 637.4L831.6 632.7L828.4 628.1L825.6 623.5L822.9 618.9L820.6 614.4L818.5 609.9L816.7 605.4L815.2 601.0L814.0 596.6L813.1 592.3L812.4 588.0L812.0 583.9L812.0 579.8L812.2 575.7L812.7 571.8L813.5 568.0L814.5 564.2L815.9 560.6L817.5 557.0L819.5 553.6L821.7 550.3L824.2 547.1L826.9 544.0L829.9 541.1L833.2 538.3L836.8 535.6L840.6 533.1L844.6 530.7L848.9 528.5L853.5 526.4L858.2 524.4L863.2 522.7L868.4 521.0L873.9 519.6L879.5 518.2L885.4 517.1L891.4 516.1L897.6 515.3L904.0 514.6L910.5 514.2L917.3 513.8L924.1 513.7L931.1 513.7L938.3 513.9L945.5 514.3L952.9 514.8L960.4 515.5L967.9 516.4L975.6 517.4L983.3 518.6L991.1 519.9L998.9 521.4L1006.8 523.1L1014.7 524.9L1022.6 526.9L1030.5 529.0L1038.5 531.3L1046.4 533.7L1054.3 536.3L1062.2 539.0L1070.0 541.8L1077.8 544.8L1085.5 547.9L1093.1 551.1L1100.7 554.5L1108.1 557.9L1115.5 561.5L1122.7 565.2L1129.9 568.9L1136.8 572.8L1143.7 576.8L1150.4 580.8L1156.9 584.9L1163.3 589.1L1169.5 593.4M1134.2 761.4L1127.6 761.5L1121.0 761.4L1114.2 761.1L1107.3 760.7L1100.3 760.2L1093.2 759.5L1086.1 758.6L1078.8 757.6L1071.5 756.4L1064.2 755.1L1056.8 753.6L1049.3 751.9L1041.9 750.2L1034.4 748.2L1026.9 746.2L1019.4 744.0L1012.0 741.6L1004.5 739.1L997.1 736.5L989.7 733.8L982.4 731.0L975.2 728.0L968.0 724.9L960.9 721.7L953.9 718.4L947.0 715.0L940.2 711.5L933.6 707.9L927.0 704.2L920.6 700.5L914.3 696.6L908.2 692.7L902.3 688.7L896.5 684.7L890.9 680.6L885.5 676.4L880.3 672.2L875.2 668.0L870.4 663.7L865.8 659.4L861.4 655.0L857.2 650.7L853.3 646.3L849.6 642.0L846.1 637.6L842.9 633.2L839.9 628.9L837.2 624.5L834.7 620.2L832.5 615.9L830.5 611.6L828.8 607.4L827.4 603.3L826.3 599.1L825.4 595.1L824.8 591.1L824.4 587.1L824.4 583.2L824.6 579.5L825.0 575.7L825.8 572.1L826.8 568.6L828.1 565.1L829.6 561.8L831.4 558.6L833.5 555.5L835.9 552.4L838.5 549.6L841.3 546.8L844.4 544.1L847.7 541.6L851.3 539.2L855.2 537.0L859.2 534.9L863.5 532.9L868.0 531.1L872.7 529.4L877.6 527.8L882.7 526.5L888.1 525.2L893.6 524.1L899.3 523.2L905.1 522.4L911.2 521.8L917.3 521.4L923.7 521.1L930.1 520.9L936.7 521.0L943.5 521.1L950.3 521.5L957.3 522.0L964.3 522.6L971.5 523.4L978.7 524.4L985.9 525.5L993.3 526.8L1000.7 528.2L1008.1 529.8L1015.5 531.5L1023.0 533.4L1030.5 535.4L1038.0 537.5L1045.5 539.8L1052.9 542.2L1060.3 544.8L1067.7 547.5L1075.1 550.3L1082.3 553.2L1089.5 556.2L1096.7 559.4L1103.7 562.6L1110.6 566.0L1117.5 569.5L1124.2 573.0L1130.8 576.7L1137.3 580.4L1143.6 584.2L1149.7 588.1L1155.8 592.1L1161.6 596.1M1127.9 754.2L1121.8 754.2L1115.5 754.2L1109.1 753.9L1102.7 753.5L1096.1 753.0L1089.4 752.3L1082.7 751.5L1075.9 750.6L1069.0 749.5L1062.1 748.2L1055.2 746.8L1048.2 745.3L1041.2 743.6L1034.1 741.8L1027.1 739.8L1020.1 737.8L1013.1 735.6L1006.1 733.3L999.1 730.8L992.2 728.2L985.3 725.6L978.5 722.8L971.7 719.9L965.1 716.9L958.5 713.8L952.0 710.6L945.6 707.3L939.4 703.9L933.2 700.4L927.2 696.9L921.3 693.3L915.6 689.6L910.0 685.9L904.5 682.1L899.3 678.2L894.2 674.3L889.3 670.3L884.6 666.4L880.0 662.3L875.7 658.3L871.6 654.2L867.6 650.1L863.9 646.0L860.4 641.9L857.2 637.8L854.2 633.7L851.4 629.6L848.8 625.5L846.5 621.5L844.4 617.4L842.5 613.4L841.0 609.5L839.6 605.5L838.5 601.7L837.7 597.8L837.1 594.1L836.8 590.4L836.7 586.7L836.9 583.2L837.4 579.7L838.1 576.3L839.0 573.0L840.2 569.7L841.7 566.6L843.4 563.6L845.4 560.6L847.6 557.8L850.0 555.1L852.7 552.5L855.6 550.0L858.7 547.6L862.1 545.4L865.7 543.3L869.5 541.3L873.5 539.4L877.8 537.7L882.2 536.1L886.8 534.7L891.6 533.4L896.6 532.2L901.8 531.2L907.1 530.3L912.7 529.6L918.3 529.0L924.1 528.6L930.1 528.3L936.2 528.2L942.4 528.2L948.7 528.4L955.1 528.7L961.7 529.1L968.3 529.8L975.0 530.5L981.8 531.4L988.6 532.5L995.5 533.7L1002.4 535.0L1009.4 536.5L1016.4 538.1L1023.5 539.9L1030.5 541.8L1037.5 543.8L1044.5 545.9L1051.5 548.2L1058.5 550.6L1065.5 553.1L1072.4 555.8L1079.2 558.5L1086.0 561.4L1092.7 564.3L1099.3 567.4L1105.8 570.5L1112.2 573.8L1118.5 577.1L1124.7 580.6L1130.8 584.1L1136.8 587.7L1142.6 591.3L1148.2 595.0L1153.7 598.8M1121.6 746.9L1115.9 747.0L1110.0 746.9L1104.1 746.7L1098.0 746.4L1091.9 745.9L1085.6 745.2L1079.3 744.5L1073.0 743.6L1066.6 742.5L1060.1 741.3L1053.6 740.0L1047.0 738.6L1040.5 737.0L1033.9 735.3L1027.3 733.5L1020.7 731.6L1014.1 729.5L1007.6 727.4L1001.1 725.1L994.6 722.7L988.2 720.2L981.8 717.5L975.5 714.8L969.3 712.0L963.1 709.1L957.0 706.1L951.1 703.1L945.2 699.9L939.4 696.7L933.8 693.3L928.3 690.0L922.9 686.5L917.7 683.0L912.6 679.4L907.7 675.8L902.9 672.2L898.3 668.5L893.9 664.7L889.6 661.0L885.6 657.2L881.7 653.4L878.0 649.6L874.6 645.7L871.3 641.9L868.3 638.0L865.4 634.2L862.8 630.3L860.4 626.5L858.2 622.7L856.3 619.0L854.6 615.2L853.1 611.5L851.8 607.8L850.8 604.2L850.0 600.6L849.5 597.1L849.2 593.6L849.1 590.2L849.3 586.9L849.7 583.6L850.4 580.4L851.3 577.3L852.4 574.3L853.8 571.4L855.4 568.5L857.2 565.8L859.2 563.1L861.5 560.6L864.0 558.1L866.8 555.8L869.7 553.6L872.9 551.5L876.2 549.5L879.8 547.7L883.6 545.9L887.5 544.3L891.7 542.8L896.0 541.5L900.5 540.3L905.2 539.2L910.0 538.2L915.0 537.4L920.2 536.7L925.5 536.2L930.9 535.8L936.5 535.5L942.2 535.4L948.0 535.4L953.9 535.6L959.9 535.9L966.1 536.3L972.3 536.9L978.5 537.6L984.9 538.5L991.3 539.4L997.7 540.6L1004.2 541.8L1010.8 543.2L1017.3 544.7L1023.9 546.4L1030.5 548.1L1037.1 550.0L1043.6 552.0L1050.2 554.2L1056.7 556.4L1063.2 558.8L1069.7 561.2L1076.1 563.8L1082.4 566.5L1088.7 569.2L1094.9 572.1L1101.0 575.1L1107.0 578.1L1112.9 581.2L1118.7 584.4L1124.4 587.7L1129.9 591.1L1135.4 594.5L1140.6 598.0L1145.8 601.5M1115.4 739.7L1110.0 739.8L1104.6 739.7L1099.0 739.5L1093.4 739.2L1087.7 738.7L1081.9 738.1L1076.0 737.4L1070.1 736.6L1064.1 735.6L1058.0 734.5L1052.0 733.3L1045.9 731.9L1039.8 730.5L1033.6 728.9L1027.5 727.2L1021.4 725.4L1015.2 723.5L1009.1 721.5L1003.1 719.3L997.0 717.1L991.1 714.8L985.1 712.3L979.2 709.8L973.4 707.2L967.7 704.5L962.0 701.7L956.5 698.8L951.0 695.9L945.6 692.9L940.4 689.8L935.3 686.6L930.3 683.4L925.4 680.1L920.6 676.8L916.1 673.5L911.6 670.1L907.3 666.6L903.2 663.1L899.3 659.6L895.5 656.1L891.9 652.5L888.5 649.0L885.2 645.4L882.2 641.8L879.3 638.2L876.7 634.7L874.3 631.1L872.0 627.5L870.0 624.0L868.2 620.5L866.6 617.0L865.2 613.5L864.0 610.1L863.1 606.7L862.4 603.4L861.9 600.1L861.6 596.9L861.5 593.7L861.7 590.6L862.1 587.6L862.7 584.6L863.5 581.7L864.6 578.9L865.8 576.1L867.3 573.5L869.0 570.9L870.9 568.5L873.1 566.1L875.4 563.8L877.9 561.7L880.7 559.6L883.6 557.6L886.8 555.8L890.1 554.1L893.6 552.5L897.3 551.0L901.1 549.6L905.2 548.3L909.4 547.2L913.7 546.2L918.2 545.3L922.9 544.5L927.7 543.9L932.6 543.4L937.7 543.0L942.9 542.8L948.2 542.7L953.6 542.7L959.1 542.8L964.7 543.1L970.4 543.5L976.2 544.0L982.1 544.7L988.0 545.5L993.9 546.4L999.9 547.5L1006.0 548.6L1012.1 549.9L1018.2 551.3L1024.3 552.9L1030.5 554.5L1036.6 556.3L1042.7 558.1L1048.8 560.1L1054.9 562.2L1060.9 564.4L1067.0 566.7L1072.9 569.1L1078.8 571.6L1084.7 574.2L1090.4 576.8L1096.1 579.6L1101.7 582.4L1107.2 585.3L1112.6 588.3L1117.9 591.4L1123.1 594.5L1128.2 597.7L1133.1 600.9L1137.9 604.2M1109.1 732.5L1104.2 732.5L1099.1 732.5L1094.0 732.3L1088.7 732.0L1083.4 731.5L1078.1 731.0L1072.6 730.3L1067.1 729.6L1061.6 728.7L1056.0 727.6L1050.4 726.5L1044.7 725.3L1039.1 723.9L1033.4 722.5L1027.7 720.9L1022.0 719.2L1016.3 717.4L1010.7 715.6L1005.1 713.6L999.5 711.5L993.9 709.4L988.4 707.1L983.0 704.8L977.6 702.3L972.3 699.8L967.0 697.2L961.9 694.6L956.8 691.9L951.8 689.1L947.0 686.2L942.2 683.3L937.6 680.3L933.1 677.3L928.7 674.2L924.4 671.1L920.3 667.9L916.4 664.7L912.5 661.5L908.9 658.3L905.4 655.0L902.0 651.7L898.9 648.4L895.9 645.1L893.1 641.8L890.4 638.5L888.0 635.1L885.7 631.8L883.6 628.5L881.8 625.3L880.1 622.0L878.6 618.8L877.3 615.6L876.2 612.4L875.4 609.3L874.7 606.2L874.2 603.1L874.0 600.1L873.9 597.2L874.1 594.3L874.4 591.5L875.0 588.7L875.8 586.1L876.7 583.5L877.9 580.9L879.3 578.5L880.9 576.1L882.6 573.8L884.6 571.6L886.8 569.5L889.1 567.5L891.7 565.6L894.4 563.8L897.3 562.1L900.4 560.5L903.6 559.0L907.0 557.6L910.6 556.3L914.4 555.1L918.2 554.1L922.3 553.1L926.5 552.3L930.8 551.6L935.2 551.0L939.8 550.6L944.5 550.2L949.3 550.0L954.2 549.9L959.2 549.9L964.4 550.0L969.6 550.3L974.8 550.7L980.2 551.2L985.6 551.8L991.1 552.5L996.6 553.4L1002.2 554.3L1007.8 555.4L1013.4 556.6L1019.1 557.9L1024.8 559.3L1030.4 560.9L1036.1 562.5L1041.8 564.2L1047.4 566.1L1053.1 568.0L1058.7 570.0L1064.3 572.2L1069.8 574.4L1075.2 576.7L1080.7 579.1L1086.0 581.6L1091.3 584.1L1096.5 586.7L1101.6 589.4L1106.6 592.2L1111.5 595.0L1116.3 597.9L1121.0 600.9L1125.5 603.9L1130.0 607.0M1102.9 725.2L1098.3 725.3L1093.7 725.2L1088.9 725.1L1084.1 724.8L1079.2 724.4L1074.3 723.9L1069.3 723.3L1064.2 722.5L1059.1 721.7L1053.9 720.8L1048.8 719.8L1043.6 718.6L1038.4 717.4L1033.1 716.0L1027.9 714.6L1022.7 713.0L1017.4 711.4L1012.2 709.7L1007.1 707.9L1001.9 705.9L996.8 704.0L991.7 701.9L986.7 699.7L981.8 697.5L976.9 695.2L972.0 692.8L967.3 690.4L962.6 687.8L958.1 685.3L953.6 682.6L949.2 679.9L944.9 677.2L940.8 674.4L936.7 671.6L932.8 668.7L929.0 665.8L925.4 662.9L921.9 659.9L918.5 656.9L915.3 653.9L912.2 650.9L909.3 647.8L906.5 644.8L903.9 641.7L901.5 638.7L899.2 635.6L897.2 632.6L895.3 629.5L893.5 626.5L892.0 623.5L890.6 620.5L889.4 617.6L888.4 614.7L887.6 611.8L887.0 608.9L886.6 606.1L886.3 603.4L886.3 600.7L886.4 598.0L886.8 595.4L887.3 592.9L888.0 590.4L888.9 588.0L890.0 585.7L891.3 583.4L892.7 581.3L894.3 579.2L896.2 577.1L898.1 575.2L900.3 573.3L902.7 571.6L905.2 569.9L907.8 568.3L910.7 566.9L913.7 565.5L916.8 564.2L920.1 563.0L923.5 562.0L927.1 561.0L930.8 560.1L934.7 559.4L938.7 558.7L942.8 558.2L947.0 557.8L951.3 557.4L955.7 557.2L960.3 557.1L964.9 557.1L969.6 557.3L974.4 557.5L979.2 557.9L984.1 558.3L989.1 558.9L994.2 559.6L999.3 560.3L1004.4 561.2L1009.6 562.2L1014.7 563.3L1020.0 564.5L1025.2 565.8L1030.4 567.2L1035.6 568.7L1040.9 570.3L1046.1 572.0L1051.3 573.8L1056.4 575.7L1061.6 577.6L1066.6 579.7L1071.7 581.8L1076.7 584.0L1081.6 586.3L1086.4 588.6L1091.2 591.1L1095.9 593.5L1100.5 596.1L1105.0 598.7L1109.5 601.4L1113.8 604.1L1118.0 606.9L1122.1 609.7M1096.6 718.0L1092.4 718.0L1088.2 718.0L1083.9 717.8L1079.5 717.6L1075.0 717.2L1070.5 716.8L1065.9 716.2L1061.3 715.5L1056.6 714.8L1051.9 713.9L1047.2 713.0L1042.4 711.9L1037.7 710.8L1032.9 709.6L1028.1 708.3L1023.3 706.9L1018.5 705.4L1013.8 703.8L1009.1 702.1L1004.3 700.4L999.7 698.6L995.0 696.7L990.5 694.7L985.9 692.6L981.5 690.5L977.1 688.4L972.7 686.1L968.5 683.8L964.3 681.5L960.2 679.1L956.2 676.6L952.3 674.1L948.5 671.6L944.8 669.0L941.2 666.4L937.7 663.7L934.4 661.0L931.2 658.3L928.1 655.6L925.2 652.8L922.4 650.0L919.7 647.3L917.2 644.5L914.8 641.7L912.6 638.9L910.5 636.1L908.6 633.3L906.9 630.5L905.3 627.8L903.9 625.0L902.6 622.3L901.6 619.6L900.6 617.0L899.9 614.3L899.3 611.7L898.9 609.2L898.7 606.6L898.7 604.2L898.8 601.8L899.1 599.4L899.6 597.1L900.2 594.8L901.1 592.6L902.1 590.5L903.2 588.4L904.5 586.4L906.0 584.5L907.7 582.6L909.5 580.9L911.5 579.2L913.6 577.6L915.9 576.1L918.4 574.6L921.0 573.3L923.7 572.0L926.6 570.8L929.6 569.8L932.7 568.8L936.0 567.9L939.4 567.1L942.9 566.4L946.5 565.8L950.3 565.3L954.1 564.9L958.1 564.6L962.1 564.5L966.3 564.4L970.5 564.4L974.8 564.5L979.2 564.7L983.6 565.0L988.1 565.4L992.7 566.0L997.3 566.6L1001.9 567.3L1006.6 568.1L1011.3 569.0L1016.1 570.0L1020.8 571.1L1025.6 572.3L1030.4 573.6L1035.2 575.0L1040.0 576.4L1044.7 578.0L1049.5 579.6L1054.2 581.3L1058.9 583.1L1063.5 585.0L1068.1 586.9L1072.7 588.9L1077.2 591.0L1081.6 593.2L1086.0 595.4L1090.3 597.6L1094.5 600.0L1098.6 602.4L1102.6 604.8L1106.6 607.3L1110.4 609.8L1114.2 612.4M1090.4 710.8L1086.6 710.8L1082.7 710.8L1078.8 710.6L1074.8 710.4L1070.8 710.1L1066.7 709.6L1062.5 709.1L1058.3 708.5L1054.1 707.9L1049.9 707.1L1045.6 706.2L1041.3 705.3L1036.9 704.3L1032.6 703.1L1028.3 701.9L1024.0 700.7L1019.6 699.3L1015.3 697.9L1011.0 696.4L1006.8 694.8L1002.6 693.1L998.4 691.4L994.2 689.6L990.1 687.8L986.1 685.9L982.1 683.9L978.1 681.9L974.3 679.8L970.5 677.7L966.8 675.5L963.1 673.3L959.6 671.0L956.2 668.7L952.8 666.4L949.6 664.0L946.5 661.6L943.4 659.1L940.5 656.7L937.7 654.2L935.1 651.7L932.5 649.2L930.1 646.7L927.8 644.2L925.7 641.6L923.7 639.1L921.8 636.6L920.1 634.1L918.5 631.5L917.1 629.0L915.8 626.6L914.7 624.1L913.7 621.7L912.8 619.2L912.2 616.9L911.7 614.5L911.3 612.2L911.1 609.9L911.1 607.7L911.2 605.5L911.5 603.3L911.9 601.2L912.5 599.2L913.2 597.2L914.1 595.3L915.2 593.4L916.4 591.6L917.7 589.8L919.2 588.2L920.9 586.6L922.7 585.0L924.6 583.6L926.7 582.2L928.9 580.9L931.2 579.7L933.7 578.5L936.3 577.5L939.1 576.5L941.9 575.6L944.9 574.8L947.9 574.1L951.1 573.5L954.4 572.9L957.8 572.5L961.3 572.1L964.9 571.9L968.6 571.7L972.3 571.6L976.1 571.6L980.0 571.7L984.0 571.9L988.0 572.2L992.1 572.6L996.2 573.1L1000.4 573.6L1004.6 574.3L1008.8 575.0L1013.1 575.8L1017.4 576.7L1021.7 577.7L1026.0 578.8L1030.4 580.0L1034.7 581.2L1039.0 582.5L1043.3 583.9L1047.6 585.4L1051.9 587.0L1056.2 588.6L1060.4 590.3L1064.5 592.0L1068.7 593.9L1072.7 595.7L1076.8 597.7L1080.7 599.7L1084.6 601.8L1088.4 603.9L1092.2 606.0L1095.8 608.2L1099.4 610.5L1102.9 612.8L1106.2 615.1" fill="none" stroke="#2b0610" stroke-width="1.15"/></g>
<path d="M1349.0 757.4L1346.9 762.6L1344.4 767.5L1341.5 772.4L1338.3 777.0L1334.7 781.5L1330.7 785.9L1326.4 790.0L1321.7 794.0L1316.6 797.8L1311.2 801.4L1305.4 804.8L1299.3 808.0L1292.9 811.0L1286.2 813.8L1279.1 816.3L1271.8 818.7L1264.1 820.9L1256.2 822.8L1248.0 824.5L1239.5 826.0L1230.8 827.2L1221.8 828.3L1212.6 829.1L1203.1 829.7L1193.5 830.0L1183.7 830.1L1173.6 830.0L1163.4 829.7L1153.1 829.1L1142.6 828.3L1131.9 827.3L1121.1 826.0L1110.2 824.5L1099.3 822.8L1088.2 820.9L1077.1 818.8L1065.9 816.4L1054.6 813.8L1043.4 811.0L1032.1 808.1L1020.8 804.9L1009.5 801.5L998.3 797.9L987.0 794.1L975.9 790.1L964.8 786.0L953.8 781.7L942.9 777.2L932.1 772.5L921.4 767.7L910.8 762.7L900.4 757.6L890.1 752.3L880.0 746.9L870.1 741.4L860.4 735.7L850.9 730.0L841.6 724.1L832.6 718.1L823.8 712.1L815.2 705.9L806.9 699.7L798.9 693.4L791.1 687.0L783.7 680.6L776.5 674.1L769.7 667.6L763.2 661.0L757.0 654.5L751.1 647.9L745.6 641.3L740.4 634.7L735.6 628.1L731.1 621.5L727.0 615.0L723.2 608.5L719.9 602.0L716.9 595.6L714.3 589.2L712.1 582.9L710.2 576.7L708.8 570.5L707.8 564.4L707.1 558.5L706.8 552.6L707.0 546.8L707.5 541.2L708.4 535.6L709.7 530.2L711.4 525.0L713.5 519.8L716.0 514.9L718.9 510.0L722.1 505.4L725.7 500.9L729.7 496.5L734.0 492.4L738.7 488.4L743.8 484.6L749.2 481.0L755.0 477.6L761.1 474.4L767.5 471.4L774.2 468.6L781.3 466.1L788.6 463.7L796.3 461.5L804.2 459.6L812.4 457.9L820.9 456.4L829.6 455.2L838.6 454.1L847.8 453.3L857.3 452.7L866.9 452.4L876.7 452.3L886.8 452.4L897.0 452.7L907.3 453.3L917.8 454.1L928.5 455.1L939.3 456.4L950.2 457.9L961.1 459.6L972.2 461.5L983.3 463.6L994.5 466.0L1005.8 468.6L1017.0 471.4L1028.3 474.3L1039.6 477.5L1050.9 480.9L1062.1 484.5L1073.4 488.3L1084.5 492.3L1095.6 496.4L1106.6 500.7L1117.5 505.2L1128.3 509.9L1139.0 514.7L1149.6 519.7L1160.0 524.8L1170.3 530.1L1180.4 535.5L1190.3 541.0L1200.0 546.7L1209.5 552.4L1218.8 558.3L1227.8 564.3L1236.6 570.3L1245.2 576.5L1253.5 582.7L1261.5 589.0L1269.3 595.4L1276.7 601.8L1283.9 608.3L1290.7 614.8L1297.2 621.4L1303.4 627.9L1309.3 634.5L1314.8 641.1L1320.0 647.7L1324.8 654.3L1329.3 660.9L1333.4 667.4L1337.2 673.9L1340.5 680.4L1343.5 686.8L1346.1 693.2L1348.3 699.5L1350.2 705.7L1351.6 711.9L1352.6 718.0L1353.3 723.9L1353.6 729.8L1353.4 735.6L1352.9 741.2L1352.0 746.8L1350.7 752.2L1349.0 757.4Z" fill="none" stroke="#3a0812" stroke-width="1.2"/>
<g clip-path="url(#c3)"><path d="M858.0 492.0L1178.0 417.0L1267.0 603.0L1236.0 614.0L1000.0 640.0L870.0 520.0Z" fill="url(#gdark)"/><path d="M1199.3 255.4L1360.4 595.8M1188.0 260.8L1349.1 601.1M1176.7 266.1L1337.8 606.5M1165.4 271.5L1326.5 611.8M1154.1 276.8L1315.2 617.2M1142.8 282.2L1303.9 622.5M1131.5 287.5L1292.6 627.9M1120.2 292.9L1281.3 633.2M1108.9 298.2L1270.0 638.6M1097.6 303.6L1258.7 643.9M1086.3 308.9L1247.4 649.3M1075.0 314.3L1236.1 654.6M1063.7 319.6L1224.8 660.0M1052.4 325.0L1213.5 665.3M1041.1 330.3L1202.2 670.7M1029.8 335.7L1190.9 676.0M1018.5 341.0L1179.6 681.4M1007.2 346.4L1168.3 686.7M995.9 351.7L1157.0 692.1M984.6 357.1L1145.7 697.4M973.3 362.4L1134.4 702.8M962.0 367.8L1123.1 708.1M950.7 373.1L1111.8 713.5M939.4 378.5L1100.5 718.8M928.1 383.8L1089.2 724.2M916.8 389.2L1078.0 729.5M905.5 394.5L1066.7 734.9M894.2 399.9L1055.4 740.2M882.9 405.2L1044.1 745.6M871.6 410.6L1032.8 750.9M860.3 415.9L1021.5 756.3M849.0 421.2L1010.2 761.6M837.7 426.6L998.9 766.9M826.4 431.9L987.6 772.3M815.1 437.3L976.3 777.6M803.8 442.6L965.0 783.0M792.5 448.0L953.7 788.3M781.2 453.3L942.4 793.7M769.9 458.7L931.1 799.0" fill="none" stroke="#2b0610" stroke-width="1.2"/><path d="M805.4 425.4L1242.8 318.2M808.2 436.6L1245.5 329.4M810.9 447.7L1248.3 340.6M813.6 458.9L1251.0 351.8M816.4 470.1L1253.8 362.9M819.1 481.2L1256.5 374.1M821.8 492.4L1259.2 385.3M824.6 503.6L1262.0 396.4M827.3 514.8L1264.7 407.6M830.1 525.9L1267.4 418.8M832.8 537.1L1270.2 429.9M835.5 548.3L1272.9 441.1M838.3 559.4L1275.6 452.3M841.0 570.6L1278.4 463.4M843.7 581.8L1281.1 474.6M846.5 592.9L1283.9 485.8M849.2 604.1L1286.6 497.0M851.9 615.3L1289.3 508.1M854.7 626.5L1292.1 519.3M857.4 637.6L1294.8 530.5M860.2 648.8L1297.5 541.6M862.9 660.0L1300.3 552.8M865.6 671.1L1303.0 564.0M868.4 682.3L1305.7 575.1M871.1 693.5L1308.5 586.3M873.8 704.6L1311.2 597.5M876.6 715.8L1314.0 608.7M879.3 727.0L1316.7 619.8M882.0 738.2L1319.4 631.0" fill="none" stroke="#2b0610" stroke-width="1.2"/></g>
<g clip-path="url(#c4)"><path d="M871.8 494.3L862.9 495.6L854.3 497.2L846.1 499.1L838.2 501.4L830.8 503.9L823.7 506.7L817.1 509.7L811.0 513.1L805.2 516.7L800.0 520.5L795.2 524.6L790.9 529.0L787.1 533.5L783.8 538.3L781.0 543.4L778.7 548.6L777.0 554.0L775.7 559.5L775.0 565.3L774.8 571.2L775.1 577.3L776.0 583.4L777.4 589.7L779.3 596.1L781.7 602.6L784.6 609.2L788.0 615.9L792.0 622.6L796.4 629.3L801.3 636.1L806.7 642.8L812.5 649.6L818.8 656.4L825.5 663.1L832.6 669.7L840.2 676.4L848.1 682.9L856.4 689.4L865.1 695.7L874.1 702.0L975.0 679.0L1000.0 600.0L973.0 492.0Z" fill="#f02c56"/><path d="M1068.5 517.0L974.5 774.8M1058.9 513.5L964.9 771.3M1049.3 510.0L955.3 767.8M1039.8 506.5L945.7 764.3M1030.2 503.0L936.2 760.8M1020.6 499.5L926.6 757.3M1011.0 496.0L917.0 753.8M1001.4 492.5L907.4 750.3M991.8 489.0L897.8 746.8M982.3 485.5L888.3 743.3M972.7 482.0L878.7 739.8M963.1 478.5L869.1 736.3M953.5 475.0L859.5 732.9M943.9 471.6L849.9 729.4M934.4 468.1L840.3 725.9M924.8 464.6L830.8 722.4M915.2 461.1L821.2 718.9M905.6 457.6L811.6 715.4M896.0 454.1L802.0 711.9M886.4 450.6L792.4 708.4M876.9 447.1L782.8 704.9M867.3 443.6L773.3 701.4M857.7 440.1L763.7 697.9M848.1 436.6L754.1 694.4M838.5 433.1L744.5 690.9M828.9 429.6L734.9 687.4M819.4 426.1L725.3 683.9M809.8 422.6L715.8 680.4M800.2 419.1L706.2 676.9" fill="none" stroke="#2b0610" stroke-width="1.2"/><path d="M857.6 381.6L1102.5 565.3M850.7 390.8L1095.6 574.5M843.8 400.0L1088.7 583.7M836.9 409.2L1081.8 592.9M830.0 418.4L1074.9 602.1M823.1 427.6L1068.0 611.3M816.2 436.8L1061.1 620.5M809.3 446.0L1054.2 629.7M802.4 455.2L1047.3 638.9M795.5 464.4L1040.4 648.1M788.6 473.6L1033.5 657.3M781.7 482.8L1026.6 666.5M774.8 492.0L1019.7 675.7M767.9 501.2L1012.8 684.9M761.0 510.4L1005.9 694.1M754.1 519.6L999.0 703.3M747.2 528.8L992.1 712.5M740.3 538.0L985.2 721.7M733.4 547.2L978.3 730.9M726.5 556.4L971.4 740.1M719.6 565.6L964.5 749.3M712.7 574.8L957.6 758.5M705.8 584.0L950.7 767.7M698.9 593.2L943.8 776.9M692.0 602.4L936.9 786.1M685.1 611.6L930.0 795.3M678.2 620.8L923.1 804.5M671.3 630.0L916.2 813.7" fill="none" stroke="#2b0610" stroke-width="1.2"/></g>
<g clip-path="url(#c5)"><path d="M905.0 489.0L939.5 489.0L872.0 690.0L864.0 705.0L837.0 684.0Z" fill="#2dcc86"/><path d="M1014.5 516.3L932.9 740.0M1004.9 512.8L923.3 736.5M995.3 509.3L913.7 733.0M985.7 505.9L904.2 729.5M976.1 502.4L894.6 726.0M966.5 498.9L885.0 722.5M957.0 495.4L875.4 719.0M947.4 491.9L865.8 715.5M937.8 488.4L856.2 712.0M928.2 484.9L846.7 708.5M918.6 481.4L837.1 705.0M909.0 477.9L827.5 701.5M899.5 474.4L817.9 698.0M889.9 470.9L808.3 694.5M880.3 467.4L798.7 691.1M870.7 463.9L789.2 687.6M861.1 460.4L779.6 684.1M851.6 456.9L770.0 680.6M842.0 453.4L760.4 677.1" fill="none" stroke="#2b0610" stroke-width="1.2"/><path d="M875.3 438.0L1044.6 564.9M868.4 447.2L1037.7 574.1M861.5 456.4L1030.8 583.3M854.6 465.6L1023.9 592.5M847.7 474.8L1017.0 601.7M840.8 484.0L1010.1 610.9M833.9 493.2L1003.2 620.1M827.0 502.4L996.3 629.3M820.1 511.6L989.4 638.5M813.2 520.8L982.5 647.7M806.3 530.0L975.6 656.9M799.4 539.2L968.7 666.1M792.5 548.4L961.8 675.3M785.6 557.6L954.9 684.5M778.7 566.8L948.0 693.7M771.8 576.0L941.1 702.9M764.9 585.2L934.2 712.1M758.0 594.4L927.3 721.3M751.1 603.6L920.4 730.5M744.2 612.8L913.5 739.7M737.3 622.0L906.6 748.9M730.4 631.2L899.7 758.1" fill="none" stroke="#2b0610" stroke-width="1.2"/></g>
<path d="M1230.0 600.0L1267.0 603.0L1272.0 715.0L1215.0 700.0L1205.0 650.0Z" fill="#70001c" fill-opacity=".22"/>
<g clip-path="url(#c6)"><path d="M1235.0 583.0L1228.3 610.7L1218.0 641.7L1209.4 667.5L1199.0 693.3L1188.7 710.6L1174.9 722.6L1159.4 727.8L1143.9 726.0L1109.5 719.2L1075.0 710.6L1040.6 702.0L1006.0 691.6L973.4 677.8L959.6 664.0L944.0 646.8L933.8 631.3L975.8 490.9L1004.6 488.0L1043.0 499.0L1099.4 519.5L1150.6 543.0L1201.8 566.5L1234.2 585.1Z" fill="url(#gb3)"/><path d="M975.8 490.9L1004.6 488.0L1043.0 499.0L1099.4 519.5L1150.6 543.0L1201.8 566.5L1234.2 585.1L1229.0 617.0L1222.7 613.3L1165.8 583.0L1090.0 552.6L1014.0 537.4L960.0 532.0Z" fill="url(#gbi)"/><path d="M960.0 532.0L1014.0 537.4L1090.0 552.6L1165.8 583.0L1222.7 613.3L1229.0 617.0L1225.0 632.0L1215.0 628.5L1165.8 621.0L1090.0 586.8L995.0 571.6L949.0 570.0Z" fill="#921a36"/><path d="M1235.0 583.0L1228.3 610.7L1218.0 641.7L1209.4 667.5L1199.0 693.3L1188.7 710.6L1174.9 722.6L1159.4 727.8L1143.9 726.0L1109.5 719.2L1075.0 710.6L1040.6 702.0L1006.0 691.6L973.4 677.8L959.6 664.0L944.0 646.8L933.8 631.3L975.8 490.9L1004.6 488.0L1043.0 499.0L1099.4 519.5L1150.6 543.0L1201.8 566.5L1234.2 585.1Z" fill="url(#ghubL)"/><path d="M1191.2 713.1L1264.3 495.5M1190.3 715.3L1263.4 497.7M1189.2 717.4L1262.3 499.8M1188.0 719.4L1261.1 501.8M1186.6 721.4L1259.7 503.8M1185.0 723.3L1258.1 505.7M1183.3 725.1L1256.4 507.5M1181.4 726.9L1254.5 509.3M1179.3 728.5L1252.4 510.9M1177.1 730.1L1250.2 512.5M1174.7 731.6L1247.8 514.0M1172.2 733.0L1245.3 515.4M1169.5 734.3L1242.6 516.7M1166.7 735.5L1239.8 517.9M1163.7 736.7L1236.8 519.1M1160.6 737.7L1233.7 520.1M1157.4 738.6L1230.5 521.0M1154.1 739.5L1227.2 521.9M1150.6 740.2L1223.7 522.6M1147.0 740.9L1220.1 523.3M1143.3 741.4L1216.4 523.8M1139.5 741.8L1212.6 524.2M1135.5 742.2L1208.6 524.6M1131.5 742.4L1204.6 524.8M1127.4 742.5L1200.5 524.9M1123.2 742.6L1196.3 525.0M1118.9 742.5L1192.0 524.9M1114.5 742.3L1187.6 524.7M1110.1 742.0L1183.2 524.4M1105.6 741.6L1178.7 524.0M1101.0 741.2L1174.1 523.6M1096.4 740.6L1169.5 523.0M1091.8 739.9L1164.9 522.3M1087.1 739.1L1160.2 521.5M1082.3 738.2L1155.4 520.6M1077.6 737.2L1150.7 519.6M1072.8 736.2L1145.9 518.6M1068.0 735.0L1141.1 517.4M1063.2 733.7L1136.3 516.1M1058.4 732.4L1131.5 514.8M1053.6 730.9L1126.7 513.3M1048.8 729.4L1121.9 511.8M1044.1 727.8L1117.2 510.2M1039.3 726.1L1112.4 508.5M1034.6 724.3L1107.7 506.7M1029.9 722.5L1103.0 504.9M1025.3 720.5L1098.4 502.9M1020.7 718.5L1093.8 500.9M1016.2 716.5L1089.3 498.9M1011.7 714.3L1084.8 496.7M1007.3 712.1L1080.4 494.5M1003.0 709.8L1076.1 492.2M998.7 707.5L1071.8 489.9M994.6 705.1L1067.7 487.5M990.5 702.7L1063.6 485.1M986.5 700.2L1059.6 482.6M982.6 697.7L1055.7 480.1M978.9 695.1L1052.0 477.5M975.2 692.5L1048.3 474.9M971.7 689.8L1044.8 472.2M968.3 687.1L1041.4 469.5M965.0 684.4L1038.1 466.8M961.8 681.7L1034.9 464.1M958.8 678.9L1031.9 461.3M955.9 676.2L1029.0 458.6M953.1 673.4L1026.2 455.8M950.5 670.6L1023.6 453.0M948.1 667.8L1021.2 450.2M945.8 665.0L1018.9 447.4M943.7 662.2L1016.8 444.6M941.7 659.4L1014.8 441.8M939.9 656.6L1013.0 439.0M938.2 653.8L1011.3 436.2M936.7 651.0L1009.8 433.4M935.4 648.3L1008.5 430.7M934.2 645.6L1007.3 428.0M933.2 642.9L1006.3 425.3M932.4 640.2L1005.5 422.6M931.8 637.6L1004.9 420.0M931.3 635.0L1004.4 417.4M931.1 632.5L1004.2 414.9M931.0 630.0L1004.1 412.4M931.0 627.5L1004.1 409.9M931.3 625.1L1004.4 407.5M931.7 622.8L1004.8 405.2M932.3 620.5L1005.4 402.9M1246.0 550.0L1235.0 583.0L1228.3 610.7L1218.0 641.7L1209.4 667.5L1199.0 693.3L1188.7 710.6L1174.9 722.6L1159.4 727.8L1143.9 726.0L1109.5 719.2L1075.0 710.6L1040.6 702.0L1006.0 691.6L973.4 677.8L959.6 664.0L944.0 646.8L933.8 631.3L925.0 658.0M1247.8 544.7L1236.8 577.7L1230.1 605.4L1219.8 636.4L1211.2 662.2L1200.8 688.0L1190.5 705.3L1176.7 717.3L1161.2 722.5L1145.7 720.7L1111.3 713.9L1076.8 705.3L1042.4 696.7L1007.8 686.3L975.2 672.5L961.4 658.7L945.8 641.5L935.6 626.0L926.8 652.7M1249.6 539.4L1238.6 572.4L1231.9 600.1L1221.6 631.1L1213.0 656.9L1202.6 682.7L1192.3 700.0L1178.5 712.0L1163.0 717.2L1147.5 715.4L1113.1 708.6L1078.6 700.0L1044.2 691.4L1009.6 681.0L977.0 667.2L963.2 653.4L947.6 636.2L937.4 620.7L928.6 647.4M1251.3 534.1L1240.3 567.1L1233.6 594.8L1223.3 625.8L1214.7 651.6L1204.3 677.4L1194.0 694.7L1180.2 706.7L1164.7 711.9L1149.2 710.1L1114.8 703.3L1080.3 694.7L1045.9 686.1L1011.3 675.7L978.7 661.9L964.9 648.1L949.3 630.9L939.1 615.4L930.3 642.1M1253.1 528.8L1242.1 561.8L1235.4 589.5L1225.1 620.5L1216.5 646.3L1206.1 672.1L1195.8 689.4L1182.0 701.4L1166.5 706.6L1151.0 704.8L1116.6 698.0L1082.1 689.4L1047.7 680.8L1013.1 670.4L980.5 656.6L966.7 642.8L951.1 625.6L940.9 610.1L932.1 636.8M1254.9 523.5L1243.9 556.5L1237.2 584.2L1226.9 615.2L1218.3 641.0L1207.9 666.8L1197.6 684.1L1183.8 696.1L1168.3 701.3L1152.8 699.5L1118.4 692.7L1083.9 684.1L1049.5 675.5L1014.9 665.1L982.3 651.3L968.5 637.5L952.9 620.3L942.7 604.8L933.9 631.5M1256.7 518.1L1245.7 551.1L1239.0 578.8L1228.7 609.8L1220.1 635.6L1209.7 661.4L1199.4 678.7L1185.6 690.7L1170.1 695.9L1154.6 694.1L1120.2 687.3L1085.7 678.7L1051.3 670.1L1016.7 659.7L984.1 645.9L970.3 632.1L954.7 614.9L944.5 599.4L935.7 626.1M1258.5 512.8L1247.5 545.8L1240.8 573.5L1230.5 604.5L1221.9 630.3L1211.5 656.1L1201.2 673.4L1187.4 685.4L1171.9 690.6L1156.4 688.8L1122.0 682.0L1087.5 673.4L1053.1 664.8L1018.5 654.4L985.9 640.6L972.1 626.8L956.5 609.6L946.3 594.1L937.5 620.8M1260.3 507.5L1249.3 540.5L1242.6 568.2L1232.3 599.2L1223.7 625.0L1213.3 650.8L1203.0 668.1L1189.2 680.1L1173.7 685.3L1158.2 683.5L1123.8 676.7L1089.3 668.1L1054.9 659.5L1020.3 649.1L987.7 635.3L973.9 621.5L958.3 604.3L948.1 588.8L939.3 615.5M1262.0 502.2L1251.0 535.2L1244.3 562.9L1234.0 593.9L1225.4 619.7L1215.0 645.5L1204.7 662.8L1190.9 674.8L1175.4 680.0L1159.9 678.2L1125.5 671.4L1091.0 662.8L1056.6 654.2L1022.0 643.8L989.4 630.0L975.6 616.2L960.0 599.0L949.8 583.5L941.0 610.2M1263.8 496.9L1252.8 529.9L1246.1 557.6L1235.8 588.6L1227.2 614.4L1216.8 640.2L1206.5 657.5L1192.7 669.5L1177.2 674.7L1161.7 672.9L1127.3 666.1L1092.8 657.5L1058.4 648.9L1023.8 638.5L991.2 624.7L977.4 610.9L961.8 593.7L951.6 578.2L942.8 604.9M1265.6 491.6L1254.6 524.6L1247.9 552.3L1237.6 583.3L1229.0 609.1L1218.6 634.9L1208.3 652.2L1194.5 664.2L1179.0 669.4L1163.5 667.6L1129.1 660.8L1094.6 652.2L1060.2 643.6L1025.6 633.2L993.0 619.4L979.2 605.6L963.6 588.4L953.4 572.9L944.6 599.6M1267.4 486.3L1256.4 519.3L1249.7 547.0L1239.4 578.0L1230.8 603.8L1220.4 629.6L1210.1 646.9L1196.3 658.9L1180.8 664.1L1165.3 662.3L1130.9 655.5L1096.4 646.9L1062.0 638.3L1027.4 627.9L994.8 614.1L981.0 600.3L965.4 583.1L955.2 567.6L946.4 594.3M1269.2 481.0L1258.2 514.0L1251.5 541.7L1241.2 572.7L1232.6 598.5L1222.2 624.3L1211.9 641.6L1198.1 653.6L1182.6 658.8L1167.1 657.0L1132.7 650.2L1098.2 641.6L1063.8 633.0L1029.2 622.6L996.6 608.8L982.8 595.0L967.2 577.8L957.0 562.3L948.2 589.0M1271.0 475.7L1260.0 508.7L1253.3 536.4L1243.0 567.4L1234.4 593.2L1224.0 619.0L1213.7 636.3L1199.9 648.3L1184.4 653.5L1168.9 651.7L1134.5 644.9L1100.0 636.3L1065.6 627.7L1031.0 617.3L998.4 603.5L984.6 589.7L969.0 572.5L958.8 557.0L950.0 583.7M1272.7 470.4L1261.7 503.4L1255.0 531.1L1244.7 562.1L1236.1 587.9L1225.7 613.7L1215.4 631.0L1201.6 643.0L1186.1 648.2L1170.6 646.4L1136.2 639.6L1101.7 631.0L1067.3 622.4L1032.7 612.0L1000.1 598.2L986.3 584.4L970.7 567.2L960.5 551.7L951.7 578.4M1274.5 465.1L1263.5 498.1L1256.8 525.8L1246.5 556.8L1237.9 582.6L1227.5 608.4L1217.2 625.7L1203.4 637.7L1187.9 642.9L1172.4 641.1L1138.0 634.3L1103.5 625.7L1069.1 617.1L1034.5 606.7L1001.9 592.9L988.1 579.1L972.5 561.9L962.3 546.4L953.5 573.1M1276.3 459.8L1265.3 492.8L1258.6 520.5L1248.3 551.5L1239.7 577.3L1229.3 603.1L1219.0 620.4L1205.2 632.4L1189.7 637.6L1174.2 635.8L1139.8 629.0L1105.3 620.4L1070.9 611.8L1036.3 601.4L1003.7 587.6L989.9 573.8L974.3 556.6L964.1 541.1L955.3 567.8M1278.1 454.4L1267.1 487.4L1260.4 515.1L1250.1 546.1L1241.5 571.9L1231.1 597.7L1220.8 615.0L1207.0 627.0L1191.5 632.2L1176.0 630.4L1141.6 623.6L1107.1 615.0L1072.7 606.4L1038.1 596.0L1005.5 582.2L991.7 568.4L976.1 551.2L965.9 535.7L957.1 562.4M1279.9 449.1L1268.9 482.1L1262.2 509.8L1251.9 540.8L1243.3 566.6L1232.9 592.4L1222.6 609.7L1208.8 621.7L1193.3 626.9L1177.8 625.1L1143.4 618.3L1108.9 609.7L1074.5 601.1L1039.9 590.7L1007.3 576.9L993.5 563.1L977.9 545.9L967.7 530.4L958.9 557.1M1281.7 443.8L1270.7 476.8L1264.0 504.5L1253.7 535.5L1245.1 561.3L1234.7 587.1L1224.4 604.4L1210.6 616.4L1195.1 621.6L1179.6 619.8L1145.2 613.0L1110.7 604.4L1076.3 595.8L1041.7 585.4L1009.1 571.6L995.3 557.8L979.7 540.6L969.5 525.1L960.7 551.8M1283.4 438.5L1272.4 471.5L1265.7 499.2L1255.4 530.2L1246.8 556.0L1236.4 581.8L1226.1 599.1L1212.3 611.1L1196.8 616.3L1181.3 614.5L1146.9 607.7L1112.4 599.1L1078.0 590.5L1043.4 580.1L1010.8 566.3L997.0 552.5L981.4 535.3L971.2 519.8L962.4 546.5M1285.2 433.2L1274.2 466.2L1267.5 493.9L1257.2 524.9L1248.6 550.7L1238.2 576.5L1227.9 593.8L1214.1 605.8L1198.6 611.0L1183.1 609.2L1148.7 602.4L1114.2 593.8L1079.8 585.2L1045.2 574.8L1012.6 561.0L998.8 547.2L983.2 530.0L973.0 514.5L964.2 541.2M1287.0 427.9L1276.0 460.9L1269.3 488.6L1259.0 519.6L1250.4 545.4L1240.0 571.2L1229.7 588.5L1215.9 600.5L1200.4 605.7L1184.9 603.9L1150.5 597.1L1116.0 588.5L1081.6 579.9L1047.0 569.5L1014.4 555.7L1000.6 541.9L985.0 524.7L974.8 509.2L966.0 535.9M1288.8 422.6L1277.8 455.6L1271.1 483.3L1260.8 514.3L1252.2 540.1L1241.8 565.9L1231.5 583.2L1217.7 595.2L1202.2 600.4L1186.7 598.6L1152.3 591.8L1117.8 583.2L1083.4 574.6L1048.8 564.2L1016.2 550.4L1002.4 536.6L986.8 519.4L976.6 503.9L967.8 530.6M1290.6 417.3L1279.6 450.3L1272.9 478.0L1262.6 509.0L1254.0 534.8L1243.6 560.6L1233.3 577.9L1219.5 589.9L1204.0 595.1L1188.5 593.3L1154.1 586.5L1119.6 577.9L1085.2 569.3L1050.6 558.9L1018.0 545.1L1004.2 531.3L988.6 514.1L978.4 498.6L969.6 525.3M1292.4 412.0L1281.4 445.0L1274.7 472.7L1264.4 503.7L1255.8 529.5L1245.4 555.3L1235.1 572.6L1221.3 584.6L1205.8 589.8L1190.3 588.0L1155.9 581.2L1121.4 572.6L1087.0 564.0L1052.4 553.6L1019.8 539.8L1006.0 526.0L990.4 508.8L980.2 493.3L971.4 520.0M1294.1 406.7L1283.1 439.7L1276.4 467.4L1266.1 498.4L1257.5 524.2L1247.1 550.0L1236.8 567.3L1223.0 579.3L1207.5 584.5L1192.0 582.7L1157.6 575.9L1123.1 567.3L1088.7 558.7L1054.1 548.3L1021.5 534.5L1007.7 520.7L992.1 503.5L981.9 488.0L973.1 514.7M1295.9 401.4L1284.9 434.4L1278.2 462.1L1267.9 493.1L1259.3 518.9L1248.9 544.7L1238.6 562.0L1224.8 574.0L1209.3 579.2L1193.8 577.4L1159.4 570.6L1124.9 562.0L1090.5 553.4L1055.9 543.0L1023.3 529.2L1009.5 515.4L993.9 498.2L983.7 482.7L974.9 509.4M1297.7 396.1L1286.7 429.1L1280.0 456.8L1269.7 487.8L1261.1 513.6L1250.7 539.4L1240.4 556.7L1226.6 568.7L1211.1 573.9L1195.6 572.1L1161.2 565.3L1126.7 556.7L1092.3 548.1L1057.7 537.7L1025.1 523.9L1011.3 510.1L995.7 492.9L985.5 477.4L976.7 504.1M1299.5 390.7L1288.5 423.7L1281.8 451.4L1271.5 482.4L1262.9 508.2L1252.5 534.0L1242.2 551.3L1228.4 563.3L1212.9 568.5L1197.4 566.7L1163.0 559.9L1128.5 551.3L1094.1 542.7L1059.5 532.3L1026.9 518.5L1013.1 504.7L997.5 487.5L987.3 472.0L978.5 498.7M1301.3 385.4L1290.3 418.4L1283.6 446.1L1273.3 477.1L1264.7 502.9L1254.3 528.7L1244.0 546.0L1230.2 558.0L1214.7 563.2L1199.2 561.4L1164.8 554.6L1130.3 546.0L1095.9 537.4L1061.3 527.0L1028.7 513.2L1014.9 499.4L999.3 482.2L989.1 466.7L980.3 493.4M1303.1 380.1L1292.1 413.1L1285.4 440.8L1275.1 471.8L1266.5 497.6L1256.1 523.4L1245.8 540.7L1232.0 552.7L1216.5 557.9L1201.0 556.1L1166.6 549.3L1132.1 540.7L1097.7 532.1L1063.1 521.7L1030.5 507.9L1016.7 494.1L1001.1 476.9L990.9 461.4L982.1 488.1M1304.8 374.8L1293.8 407.8L1287.1 435.5L1276.8 466.5L1268.2 492.3L1257.8 518.1L1247.5 535.4L1233.7 547.4L1218.2 552.6L1202.7 550.8L1168.3 544.0L1133.8 535.4L1099.4 526.8L1064.8 516.4L1032.2 502.6L1018.4 488.8L1002.8 471.6L992.6 456.1L983.8 482.8M1306.6 369.5L1295.6 402.5L1288.9 430.2L1278.6 461.2L1270.0 487.0L1259.6 512.8L1249.3 530.1L1235.5 542.1L1220.0 547.3L1204.5 545.5L1170.1 538.7L1135.6 530.1L1101.2 521.5L1066.6 511.1L1034.0 497.3L1020.2 483.5L1004.6 466.3L994.4 450.8L985.6 477.5M1308.4 364.2L1297.4 397.2L1290.7 424.9L1280.4 455.9L1271.8 481.7L1261.4 507.5L1251.1 524.8L1237.3 536.8L1221.8 542.0L1206.3 540.2L1171.9 533.4L1137.4 524.8L1103.0 516.2L1068.4 505.8L1035.8 492.0L1022.0 478.2L1006.4 461.0L996.2 445.5L987.4 472.2M1310.2 358.9L1299.2 391.9L1292.5 419.6L1282.2 450.6L1273.6 476.4L1263.2 502.2L1252.9 519.5L1239.1 531.5L1223.6 536.7L1208.1 534.9L1173.7 528.1L1139.2 519.5L1104.8 510.9L1070.2 500.5L1037.6 486.7L1023.8 472.9L1008.2 455.7L998.0 440.2L989.2 466.9M1312.0 353.6L1301.0 386.6L1294.3 414.3L1284.0 445.3L1275.4 471.1L1265.0 496.9L1254.7 514.2L1240.9 526.2L1225.4 531.4L1209.9 529.6L1175.5 522.8L1141.0 514.2L1106.6 505.6L1072.0 495.2L1039.4 481.4L1025.6 467.6L1010.0 450.4L999.8 434.9L991.0 461.6M1313.8 348.3L1302.8 381.3L1296.1 409.0L1285.8 440.0L1277.2 465.8L1266.8 491.6L1256.5 508.9L1242.7 520.9L1227.2 526.1L1211.7 524.3L1177.3 517.5L1142.8 508.9L1108.4 500.3L1073.8 489.9L1041.2 476.1L1027.4 462.3L1011.8 445.1L1001.6 429.6L992.8 456.3M1315.5 343.0L1304.5 376.0L1297.8 403.7L1287.5 434.7L1278.9 460.5L1268.5 486.3L1258.2 503.6L1244.4 515.6L1228.9 520.8L1213.4 519.0L1179.0 512.2L1144.5 503.6L1110.1 495.0L1075.5 484.6L1042.9 470.8L1029.1 457.0L1013.5 439.8L1003.3 424.3L994.5 451.0M1317.3 337.7L1306.3 370.7L1299.6 398.4L1289.3 429.4L1280.7 455.2L1270.3 481.0L1260.0 498.3L1246.2 510.3L1230.7 515.5L1215.2 513.7L1180.8 506.9L1146.3 498.3L1111.9 489.7L1077.3 479.3L1044.7 465.5L1030.9 451.7L1015.3 434.5L1005.1 419.0L996.3 445.7M1319.1 332.4L1308.1 365.4L1301.4 393.1L1291.1 424.1L1282.5 449.9L1272.1 475.7L1261.8 493.0L1248.0 505.0L1232.5 510.2L1217.0 508.4L1182.6 501.6L1148.1 493.0L1113.7 484.4L1079.1 474.0L1046.5 460.2L1032.7 446.4L1017.1 429.2L1006.9 413.7L998.1 440.4M1320.9 327.0L1309.9 360.0L1303.2 387.7L1292.9 418.7L1284.3 444.5L1273.9 470.3L1263.6 487.6L1249.8 499.6L1234.3 504.8L1218.8 503.0L1184.4 496.2L1149.9 487.6L1115.5 479.0L1080.9 468.6L1048.3 454.8L1034.5 441.0L1018.9 423.8L1008.7 408.3L999.9 435.0" fill="none" stroke="#2b0610" stroke-width=".8"/></g>
<g clip-path="url(#c7)"><path d="M901.0 188.0L1127.0 131.0L1433.6 131.0L1365.0 333.0L1349.0 372.0L1299.0 335.0L806.5 457.6Z" fill="#ea2652"/><path d="M1539.6 169.7L1360.9 659.8M1531.7 166.8L1353.0 656.9M1523.9 163.9L1345.2 654.0M1516.0 161.1L1337.3 651.2M1508.2 158.2L1329.5 648.3M1500.3 155.3L1321.6 645.4M1492.5 152.5L1313.7 642.6M1484.6 149.6L1305.9 639.7M1476.8 146.7L1298.0 636.8M1468.9 143.9L1290.2 634.0M1461.0 141.0L1282.3 631.1M1453.2 138.1L1274.5 628.2M1445.3 135.3L1266.6 625.4M1437.5 132.4L1258.8 622.5M1429.6 129.5L1250.9 619.7M1421.8 126.7L1243.0 616.8M1413.9 123.8L1235.2 613.9M1406.1 121.0L1227.3 611.1M1398.2 118.1L1219.5 608.2M1390.3 115.2L1211.6 605.3M1382.5 112.4L1203.8 602.5M1374.6 109.5L1195.9 599.6M1366.8 106.6L1188.1 596.7M1358.9 103.8L1180.2 593.9M1351.1 100.9L1172.3 591.0M1343.2 98.0L1164.5 588.1M1335.4 95.2L1156.6 585.3M1327.5 92.3L1148.8 582.4M1319.6 89.4L1140.9 579.6M1311.8 86.6L1133.1 576.7M1303.9 83.7L1125.2 573.8M1296.1 80.9L1117.4 571.0M1288.2 78.0L1109.5 568.1M1280.4 75.1L1101.6 565.2M1272.5 72.3L1093.8 562.4M1264.7 69.4L1085.9 559.5M1256.8 66.5L1078.1 556.6M1248.9 63.7L1070.2 553.8M1241.1 60.8L1062.4 550.9M1233.2 57.9L1054.5 548.0M1225.4 55.1L1046.7 545.2M1217.5 52.2L1038.8 542.3M1209.7 49.3L1030.9 539.4M1201.8 46.5L1023.1 536.6M1194.0 43.6L1015.2 533.7M1186.1 40.7L1007.4 530.9M1178.2 37.9L999.5 528.0M1170.4 35.0L991.7 525.1M1162.5 32.2L983.8 522.3M1154.7 29.3L976.0 519.4M1146.8 26.4L968.1 516.5M1139.0 23.6L960.2 513.7M1131.1 20.7L952.4 510.8M1123.3 17.8L944.5 507.9M1115.4 15.0L936.7 505.1M1107.5 12.1L928.8 502.2M1099.7 9.2L921.0 499.3M1091.8 6.4L913.1 496.5M1084.0 3.5L905.3 493.6M1076.1 0.6L897.4 490.7M1068.3 -2.2L889.5 487.9M1060.4 -5.1L881.7 485.0M1052.6 -8.0L873.8 482.2M1044.7 -10.8L866.0 479.3M1036.8 -13.7L858.1 476.4M1029.0 -16.5L850.3 473.6M1021.1 -19.4L842.4 470.7M1013.3 -22.3L834.6 467.8M1005.4 -25.1L826.7 465.0M997.6 -28.0L818.8 462.1M989.7 -30.9L811.0 459.2M981.9 -33.7L803.1 456.4M974.0 -36.6L795.3 453.5M966.1 -39.5L787.4 450.6M958.3 -42.3L779.6 447.8M950.4 -45.2L771.7 444.9M942.6 -48.1L763.9 442.0M934.7 -50.9L756.0 439.2M926.9 -53.8L748.1 436.3M919.0 -56.7L740.3 433.5M911.2 -59.5L732.4 430.6M903.3 -62.4L724.6 427.7M895.4 -65.2L716.7 424.9M887.6 -68.1L708.9 422.0M879.7 -71.0L701.0 419.1" fill="none" stroke="#2b0610" stroke-width="1.2"/><path d="M780.0 133.0L814.0 124.3L848.0 115.7L882.0 107.0L916.0 98.3L950.0 89.4L984.0 80.3L1018.0 71.0L1052.0 61.5L1086.0 51.7L1120.0 41.8L1154.0 31.6L1188.0 21.2L1222.0 10.6L1256.0 -0.3L1290.0 -11.3L1324.0 -22.6L1358.0 -34.1L1392.0 -45.8L1426.0 -57.7L1460.0 -69.8M780.0 143.7L814.0 135.0L848.0 126.4L882.0 117.7L916.0 109.0L950.0 100.1L984.0 91.0L1018.0 81.7L1052.0 72.2L1086.0 62.4L1120.0 52.5L1154.0 42.3L1188.0 31.9L1222.0 21.3L1256.0 10.4L1290.0 -0.6L1324.0 -11.9L1358.0 -23.4L1392.0 -35.1L1426.0 -47.0L1460.0 -59.1M780.0 154.4L814.0 145.7L848.0 137.1L882.0 128.4L916.0 119.7L950.0 110.8L984.0 101.7L1018.0 92.4L1052.0 82.9L1086.0 73.1L1120.0 63.2L1154.0 53.0L1188.0 42.6L1222.0 32.0L1256.0 21.1L1290.0 10.1L1324.0 -1.2L1358.0 -12.7L1392.0 -24.4L1426.0 -36.3L1460.0 -48.4M780.0 165.1L814.0 156.4L848.0 147.8L882.0 139.1L916.0 130.4L950.0 121.5L984.0 112.4L1018.0 103.1L1052.0 93.6L1086.0 83.8L1120.0 73.9L1154.0 63.7L1188.0 53.3L1222.0 42.7L1256.0 31.8L1290.0 20.8L1324.0 9.5L1358.0 -2.0L1392.0 -13.7L1426.0 -25.6L1460.0 -37.7M780.0 175.8L814.0 167.1L848.0 158.5L882.0 149.8L916.0 141.1L950.0 132.2L984.0 123.1L1018.0 113.8L1052.0 104.3L1086.0 94.5L1120.0 84.6L1154.0 74.4L1188.0 64.0L1222.0 53.4L1256.0 42.5L1290.0 31.5L1324.0 20.2L1358.0 8.7L1392.0 -3.0L1426.0 -14.9L1460.0 -27.0M780.0 186.5L814.0 177.8L848.0 169.2L882.0 160.5L916.0 151.8L950.0 142.9L984.0 133.8L1018.0 124.5L1052.0 115.0L1086.0 105.2L1120.0 95.3L1154.0 85.1L1188.0 74.7L1222.0 64.1L1256.0 53.2L1290.0 42.2L1324.0 30.9L1358.0 19.4L1392.0 7.7L1426.0 -4.2L1460.0 -16.3M780.0 197.2L814.0 188.5L848.0 179.9L882.0 171.2L916.0 162.5L950.0 153.6L984.0 144.5L1018.0 135.2L1052.0 125.7L1086.0 115.9L1120.0 106.0L1154.0 95.8L1188.0 85.4L1222.0 74.8L1256.0 63.9L1290.0 52.9L1324.0 41.6L1358.0 30.1L1392.0 18.4L1426.0 6.5L1460.0 -5.6M780.0 207.9L814.0 199.2L848.0 190.6L882.0 181.9L916.0 173.2L950.0 164.3L984.0 155.2L1018.0 145.9L1052.0 136.4L1086.0 126.6L1120.0 116.7L1154.0 106.5L1188.0 96.1L1222.0 85.5L1256.0 74.6L1290.0 63.6L1324.0 52.3L1358.0 40.8L1392.0 29.1L1426.0 17.2L1460.0 5.1M780.0 218.6L814.0 209.9L848.0 201.3L882.0 192.6L916.0 183.9L950.0 175.0L984.0 165.9L1018.0 156.6L1052.0 147.1L1086.0 137.3L1120.0 127.4L1154.0 117.2L1188.0 106.8L1222.0 96.2L1256.0 85.3L1290.0 74.3L1324.0 63.0L1358.0 51.5L1392.0 39.8L1426.0 27.9L1460.0 15.8M780.0 229.3L814.0 220.6L848.0 212.0L882.0 203.3L916.0 194.6L950.0 185.7L984.0 176.6L1018.0 167.3L1052.0 157.8L1086.0 148.0L1120.0 138.1L1154.0 127.9L1188.0 117.5L1222.0 106.9L1256.0 96.0L1290.0 85.0L1324.0 73.7L1358.0 62.2L1392.0 50.5L1426.0 38.6L1460.0 26.5M780.0 240.0L814.0 231.3L848.0 222.7L882.0 214.0L916.0 205.3L950.0 196.4L984.0 187.3L1018.0 178.0L1052.0 168.5L1086.0 158.7L1120.0 148.8L1154.0 138.6L1188.0 128.2L1222.0 117.6L1256.0 106.7L1290.0 95.7L1324.0 84.4L1358.0 72.9L1392.0 61.2L1426.0 49.3L1460.0 37.2M780.0 250.7L814.0 242.0L848.0 233.4L882.0 224.7L916.0 216.0L950.0 207.1L984.0 198.0L1018.0 188.7L1052.0 179.2L1086.0 169.4L1120.0 159.5L1154.0 149.3L1188.0 138.9L1222.0 128.3L1256.0 117.4L1290.0 106.4L1324.0 95.1L1358.0 83.6L1392.0 71.9L1426.0 60.0L1460.0 47.9M780.0 261.4L814.0 252.7L848.0 244.1L882.0 235.4L916.0 226.7L950.0 217.8L984.0 208.7L1018.0 199.4L1052.0 189.9L1086.0 180.1L1120.0 170.2L1154.0 160.0L1188.0 149.6L1222.0 139.0L1256.0 128.1L1290.0 117.1L1324.0 105.8L1358.0 94.3L1392.0 82.6L1426.0 70.7L1460.0 58.6M780.0 272.1L814.0 263.4L848.0 254.8L882.0 246.1L916.0 237.4L950.0 228.5L984.0 219.4L1018.0 210.1L1052.0 200.6L1086.0 190.8L1120.0 180.9L1154.0 170.7L1188.0 160.3L1222.0 149.7L1256.0 138.8L1290.0 127.8L1324.0 116.5L1358.0 105.0L1392.0 93.3L1426.0 81.4L1460.0 69.3M780.0 282.8L814.0 274.1L848.0 265.5L882.0 256.8L916.0 248.1L950.0 239.2L984.0 230.1L1018.0 220.8L1052.0 211.3L1086.0 201.5L1120.0 191.6L1154.0 181.4L1188.0 171.0L1222.0 160.4L1256.0 149.5L1290.0 138.5L1324.0 127.2L1358.0 115.7L1392.0 104.0L1426.0 92.1L1460.0 80.0M780.0 293.5L814.0 284.8L848.0 276.2L882.0 267.5L916.0 258.8L950.0 249.9L984.0 240.8L1018.0 231.5L1052.0 222.0L1086.0 212.2L1120.0 202.3L1154.0 192.1L1188.0 181.7L1222.0 171.1L1256.0 160.2L1290.0 149.2L1324.0 137.9L1358.0 126.4L1392.0 114.7L1426.0 102.8L1460.0 90.7M780.0 304.2L814.0 295.5L848.0 286.9L882.0 278.2L916.0 269.5L950.0 260.6L984.0 251.5L1018.0 242.2L1052.0 232.7L1086.0 222.9L1120.0 213.0L1154.0 202.8L1188.0 192.4L1222.0 181.8L1256.0 170.9L1290.0 159.9L1324.0 148.6L1358.0 137.1L1392.0 125.4L1426.0 113.5L1460.0 101.4M780.0 314.9L814.0 306.2L848.0 297.6L882.0 288.9L916.0 280.2L950.0 271.3L984.0 262.2L1018.0 252.9L1052.0 243.4L1086.0 233.6L1120.0 223.7L1154.0 213.5L1188.0 203.1L1222.0 192.5L1256.0 181.6L1290.0 170.6L1324.0 159.3L1358.0 147.8L1392.0 136.1L1426.0 124.2L1460.0 112.1M780.0 325.6L814.0 316.9L848.0 308.3L882.0 299.6L916.0 290.9L950.0 282.0L984.0 272.9L1018.0 263.6L1052.0 254.1L1086.0 244.3L1120.0 234.4L1154.0 224.2L1188.0 213.8L1222.0 203.2L1256.0 192.3L1290.0 181.3L1324.0 170.0L1358.0 158.5L1392.0 146.8L1426.0 134.9L1460.0 122.8M780.0 336.3L814.0 327.6L848.0 319.0L882.0 310.3L916.0 301.6L950.0 292.7L984.0 283.6L1018.0 274.3L1052.0 264.8L1086.0 255.0L1120.0 245.1L1154.0 234.9L1188.0 224.5L1222.0 213.9L1256.0 203.0L1290.0 192.0L1324.0 180.7L1358.0 169.2L1392.0 157.5L1426.0 145.6L1460.0 133.5M780.0 347.0L814.0 338.3L848.0 329.7L882.0 321.0L916.0 312.3L950.0 303.4L984.0 294.3L1018.0 285.0L1052.0 275.5L1086.0 265.7L1120.0 255.8L1154.0 245.6L1188.0 235.2L1222.0 224.6L1256.0 213.7L1290.0 202.7L1324.0 191.4L1358.0 179.9L1392.0 168.2L1426.0 156.3L1460.0 144.2M780.0 357.7L814.0 349.0L848.0 340.4L882.0 331.7L916.0 323.0L950.0 314.1L984.0 305.0L1018.0 295.7L1052.0 286.2L1086.0 276.4L1120.0 266.5L1154.0 256.3L1188.0 245.9L1222.0 235.3L1256.0 224.4L1290.0 213.4L1324.0 202.1L1358.0 190.6L1392.0 178.9L1426.0 167.0L1460.0 154.9M780.0 368.4L814.0 359.7L848.0 351.1L882.0 342.4L916.0 333.7L950.0 324.8L984.0 315.7L1018.0 306.4L1052.0 296.9L1086.0 287.1L1120.0 277.2L1154.0 267.0L1188.0 256.6L1222.0 246.0L1256.0 235.1L1290.0 224.1L1324.0 212.8L1358.0 201.3L1392.0 189.6L1426.0 177.7L1460.0 165.6M780.0 379.1L814.0 370.4L848.0 361.8L882.0 353.1L916.0 344.4L950.0 335.5L984.0 326.4L1018.0 317.1L1052.0 307.6L1086.0 297.8L1120.0 287.9L1154.0 277.7L1188.0 267.3L1222.0 256.7L1256.0 245.8L1290.0 234.8L1324.0 223.5L1358.0 212.0L1392.0 200.3L1426.0 188.4L1460.0 176.3M780.0 389.8L814.0 381.1L848.0 372.5L882.0 363.8L916.0 355.1L950.0 346.2L984.0 337.1L1018.0 327.8L1052.0 318.3L1086.0 308.5L1120.0 298.6L1154.0 288.4L1188.0 278.0L1222.0 267.4L1256.0 256.5L1290.0 245.5L1324.0 234.2L1358.0 222.7L1392.0 211.0L1426.0 199.1L1460.0 187.0M780.0 400.5L814.0 391.8L848.0 383.2L882.0 374.5L916.0 365.8L950.0 356.9L984.0 347.8L1018.0 338.5L1052.0 329.0L1086.0 319.2L1120.0 309.3L1154.0 299.1L1188.0 288.7L1222.0 278.1L1256.0 267.2L1290.0 256.2L1324.0 244.9L1358.0 233.4L1392.0 221.7L1426.0 209.8L1460.0 197.7M780.0 411.2L814.0 402.5L848.0 393.9L882.0 385.2L916.0 376.5L950.0 367.6L984.0 358.5L1018.0 349.2L1052.0 339.7L1086.0 329.9L1120.0 320.0L1154.0 309.8L1188.0 299.4L1222.0 288.8L1256.0 277.9L1290.0 266.9L1324.0 255.6L1358.0 244.1L1392.0 232.4L1426.0 220.5L1460.0 208.4M780.0 421.9L814.0 413.2L848.0 404.6L882.0 395.9L916.0 387.2L950.0 378.3L984.0 369.2L1018.0 359.9L1052.0 350.4L1086.0 340.6L1120.0 330.7L1154.0 320.5L1188.0 310.1L1222.0 299.5L1256.0 288.6L1290.0 277.6L1324.0 266.3L1358.0 254.8L1392.0 243.1L1426.0 231.2L1460.0 219.1M780.0 432.6L814.0 423.9L848.0 415.3L882.0 406.6L916.0 397.9L950.0 389.0L984.0 379.9L1018.0 370.6L1052.0 361.1L1086.0 351.3L1120.0 341.4L1154.0 331.2L1188.0 320.8L1222.0 310.2L1256.0 299.3L1290.0 288.3L1324.0 277.0L1358.0 265.5L1392.0 253.8L1426.0 241.9L1460.0 229.8M780.0 443.3L814.0 434.6L848.0 426.0L882.0 417.3L916.0 408.6L950.0 399.7L984.0 390.6L1018.0 381.3L1052.0 371.8L1086.0 362.0L1120.0 352.1L1154.0 341.9L1188.0 331.5L1222.0 320.9L1256.0 310.0L1290.0 299.0L1324.0 287.7L1358.0 276.2L1392.0 264.5L1426.0 252.6L1460.0 240.5M780.0 454.0L814.0 445.3L848.0 436.7L882.0 428.0L916.0 419.3L950.0 410.4L984.0 401.3L1018.0 392.0L1052.0 382.5L1086.0 372.7L1120.0 362.8L1154.0 352.6L1188.0 342.2L1222.0 331.6L1256.0 320.7L1290.0 309.7L1324.0 298.4L1358.0 286.9L1392.0 275.2L1426.0 263.3L1460.0 251.2M780.0 464.7L814.0 456.0L848.0 447.4L882.0 438.7L916.0 430.0L950.0 421.1L984.0 412.0L1018.0 402.7L1052.0 393.2L1086.0 383.4L1120.0 373.5L1154.0 363.3L1188.0 352.9L1222.0 342.3L1256.0 331.4L1290.0 320.4L1324.0 309.1L1358.0 297.6L1392.0 285.9L1426.0 274.0L1460.0 261.9M780.0 475.4L814.0 466.7L848.0 458.1L882.0 449.4L916.0 440.7L950.0 431.8L984.0 422.7L1018.0 413.4L1052.0 403.9L1086.0 394.1L1120.0 384.2L1154.0 374.0L1188.0 363.6L1222.0 353.0L1256.0 342.1L1290.0 331.1L1324.0 319.8L1358.0 308.3L1392.0 296.6L1426.0 284.7L1460.0 272.6M780.0 486.1L814.0 477.4L848.0 468.8L882.0 460.1L916.0 451.4L950.0 442.5L984.0 433.4L1018.0 424.1L1052.0 414.6L1086.0 404.8L1120.0 394.9L1154.0 384.7L1188.0 374.3L1222.0 363.7L1256.0 352.8L1290.0 341.8L1324.0 330.5L1358.0 319.0L1392.0 307.3L1426.0 295.4L1460.0 283.3M780.0 496.8L814.0 488.1L848.0 479.5L882.0 470.8L916.0 462.1L950.0 453.2L984.0 444.1L1018.0 434.8L1052.0 425.3L1086.0 415.5L1120.0 405.6L1154.0 395.4L1188.0 385.0L1222.0 374.4L1256.0 363.5L1290.0 352.5L1324.0 341.2L1358.0 329.7L1392.0 318.0L1426.0 306.1L1460.0 294.0M780.0 507.5L814.0 498.8L848.0 490.2L882.0 481.5L916.0 472.8L950.0 463.9L984.0 454.8L1018.0 445.5L1052.0 436.0L1086.0 426.2L1120.0 416.3L1154.0 406.1L1188.0 395.7L1222.0 385.1L1256.0 374.2L1290.0 363.2L1324.0 351.9L1358.0 340.4L1392.0 328.7L1426.0 316.8L1460.0 304.7M780.0 518.2L814.0 509.5L848.0 500.9L882.0 492.2L916.0 483.5L950.0 474.6L984.0 465.5L1018.0 456.2L1052.0 446.7L1086.0 436.9L1120.0 427.0L1154.0 416.8L1188.0 406.4L1222.0 395.8L1256.0 384.9L1290.0 373.9L1324.0 362.6L1358.0 351.1L1392.0 339.4L1426.0 327.5L1460.0 315.4M780.0 528.9L814.0 520.2L848.0 511.6L882.0 502.9L916.0 494.2L950.0 485.3L984.0 476.2L1018.0 466.9L1052.0 457.4L1086.0 447.6L1120.0 437.7L1154.0 427.5L1188.0 417.1L1222.0 406.5L1256.0 395.6L1290.0 384.6L1324.0 373.3L1358.0 361.8L1392.0 350.1L1426.0 338.2L1460.0 326.1M780.0 539.6L814.0 530.9L848.0 522.3L882.0 513.6L916.0 504.9L950.0 496.0L984.0 486.9L1018.0 477.6L1052.0 468.1L1086.0 458.3L1120.0 448.4L1154.0 438.2L1188.0 427.8L1222.0 417.2L1256.0 406.3L1290.0 395.3L1324.0 384.0L1358.0 372.5L1392.0 360.8L1426.0 348.9L1460.0 336.8M780.0 550.3L814.0 541.6L848.0 533.0L882.0 524.3L916.0 515.6L950.0 506.7L984.0 497.6L1018.0 488.3L1052.0 478.8L1086.0 469.0L1120.0 459.1L1154.0 448.9L1188.0 438.5L1222.0 427.9L1256.0 417.0L1290.0 406.0L1324.0 394.7L1358.0 383.2L1392.0 371.5L1426.0 359.6L1460.0 347.5M780.0 561.0L814.0 552.3L848.0 543.7L882.0 535.0L916.0 526.3L950.0 517.4L984.0 508.3L1018.0 499.0L1052.0 489.5L1086.0 479.7L1120.0 469.8L1154.0 459.6L1188.0 449.2L1222.0 438.6L1256.0 427.7L1290.0 416.7L1324.0 405.4L1358.0 393.9L1392.0 382.2L1426.0 370.3L1460.0 358.2M780.0 571.7L814.0 563.0L848.0 554.4L882.0 545.7L916.0 537.0L950.0 528.1L984.0 519.0L1018.0 509.7L1052.0 500.2L1086.0 490.4L1120.0 480.5L1154.0 470.3L1188.0 459.9L1222.0 449.3L1256.0 438.4L1290.0 427.4L1324.0 416.1L1358.0 404.6L1392.0 392.9L1426.0 381.0L1460.0 368.9M780.0 582.4L814.0 573.7L848.0 565.1L882.0 556.4L916.0 547.7L950.0 538.8L984.0 529.7L1018.0 520.4L1052.0 510.9L1086.0 501.1L1120.0 491.2L1154.0 481.0L1188.0 470.6L1222.0 460.0L1256.0 449.1L1290.0 438.1L1324.0 426.8L1358.0 415.3L1392.0 403.6L1426.0 391.7L1460.0 379.6M780.0 593.1L814.0 584.4L848.0 575.8L882.0 567.1L916.0 558.4L950.0 549.5L984.0 540.4L1018.0 531.1L1052.0 521.6L1086.0 511.8L1120.0 501.9L1154.0 491.7L1188.0 481.3L1222.0 470.7L1256.0 459.8L1290.0 448.8L1324.0 437.5L1358.0 426.0L1392.0 414.3L1426.0 402.4L1460.0 390.3M780.0 603.8L814.0 595.1L848.0 586.5L882.0 577.8L916.0 569.1L950.0 560.2L984.0 551.1L1018.0 541.8L1052.0 532.3L1086.0 522.5L1120.0 512.6L1154.0 502.4L1188.0 492.0L1222.0 481.4L1256.0 470.5L1290.0 459.5L1324.0 448.2L1358.0 436.7L1392.0 425.0L1426.0 413.1L1460.0 401.0M780.0 614.5L814.0 605.8L848.0 597.2L882.0 588.5L916.0 579.8L950.0 570.9L984.0 561.8L1018.0 552.5L1052.0 543.0L1086.0 533.2L1120.0 523.3L1154.0 513.1L1188.0 502.7L1222.0 492.1L1256.0 481.2L1290.0 470.2L1324.0 458.9L1358.0 447.4L1392.0 435.7L1426.0 423.8L1460.0 411.7M780.0 625.2L814.0 616.5L848.0 607.9L882.0 599.2L916.0 590.5L950.0 581.6L984.0 572.5L1018.0 563.2L1052.0 553.7L1086.0 543.9L1120.0 534.0L1154.0 523.8L1188.0 513.4L1222.0 502.8L1256.0 491.9L1290.0 480.9L1324.0 469.6L1358.0 458.1L1392.0 446.4L1426.0 434.5L1460.0 422.4M780.0 635.9L814.0 627.2L848.0 618.6L882.0 609.9L916.0 601.2L950.0 592.3L984.0 583.2L1018.0 573.9L1052.0 564.4L1086.0 554.6L1120.0 544.7L1154.0 534.5L1188.0 524.1L1222.0 513.5L1256.0 502.6L1290.0 491.6L1324.0 480.3L1358.0 468.8L1392.0 457.1L1426.0 445.2L1460.0 433.1M780.0 646.6L814.0 637.9L848.0 629.3L882.0 620.6L916.0 611.9L950.0 603.0L984.0 593.9L1018.0 584.6L1052.0 575.1L1086.0 565.3L1120.0 555.4L1154.0 545.2L1188.0 534.8L1222.0 524.2L1256.0 513.3L1290.0 502.3L1324.0 491.0L1358.0 479.5L1392.0 467.8L1426.0 455.9L1460.0 443.8M780.0 657.3L814.0 648.6L848.0 640.0L882.0 631.3L916.0 622.6L950.0 613.7L984.0 604.6L1018.0 595.3L1052.0 585.8L1086.0 576.0L1120.0 566.1L1154.0 555.9L1188.0 545.5L1222.0 534.9L1256.0 524.0L1290.0 513.0L1324.0 501.7L1358.0 490.2L1392.0 478.5L1426.0 466.6L1460.0 454.5M780.0 668.0L814.0 659.3L848.0 650.7L882.0 642.0L916.0 633.3L950.0 624.4L984.0 615.3L1018.0 606.0L1052.0 596.5L1086.0 586.7L1120.0 576.8L1154.0 566.6L1188.0 556.2L1222.0 545.6L1256.0 534.7L1290.0 523.7L1324.0 512.4L1358.0 500.9L1392.0 489.2L1426.0 477.3L1460.0 465.2M780.0 678.7L814.0 670.0L848.0 661.4L882.0 652.7L916.0 644.0L950.0 635.1L984.0 626.0L1018.0 616.7L1052.0 607.2L1086.0 597.4L1120.0 587.5L1154.0 577.3L1188.0 566.9L1222.0 556.3L1256.0 545.4L1290.0 534.4L1324.0 523.1L1358.0 511.6L1392.0 499.9L1426.0 488.0L1460.0 475.9M780.0 689.4L814.0 680.7L848.0 672.1L882.0 663.4L916.0 654.7L950.0 645.8L984.0 636.7L1018.0 627.4L1052.0 617.9L1086.0 608.1L1120.0 598.2L1154.0 588.0L1188.0 577.6L1222.0 567.0L1256.0 556.1L1290.0 545.1L1324.0 533.8L1358.0 522.3L1392.0 510.6L1426.0 498.7L1460.0 486.6" fill="none" stroke="#2b0610" stroke-width="1.2"/></g>
<path d="M1369 131L1299 334" stroke="#200008" stroke-width="1.6" fill="none"/>
<g clip-path="url(#c8)"><path d="M806.5 457.6L1299.0 335.0L1349.0 372.0L858.0 492.0Z" fill="#d6224a"/><path d="M766.5 331.2L1314.2 195.0M770.5 347.3L1318.2 211.1M774.5 363.3L1322.2 227.1M778.5 379.4L1326.2 243.2M782.5 395.4L1330.2 259.2M786.5 411.5L1334.1 275.3M790.5 427.5L1338.1 291.3M794.5 443.6L1342.1 307.4M798.4 459.6L1346.1 323.4M802.4 475.6L1350.1 339.4M806.4 491.7L1354.1 355.5M810.4 507.7L1358.1 371.5M814.4 523.8L1362.1 387.6M818.4 539.8L1366.1 403.6M822.4 555.9L1370.1 419.7M826.4 571.9L1374.0 435.7M830.4 588.0L1378.0 451.8M834.4 604.0L1382.0 467.8M838.3 620.0L1386.0 483.8" fill="none" stroke="#2b0610" stroke-width="1.2"/><path d="M1001.5 71.4L1427.2 386.4M996.6 78.2L1422.2 393.1M991.6 84.9L1417.2 399.8M986.6 91.6L1412.2 406.5M981.6 98.3L1407.3 413.3M976.7 105.0L1402.3 420.0M971.7 111.8L1397.3 426.7M966.7 118.5L1392.3 433.4M961.8 125.2L1387.4 440.2M956.8 131.9L1382.4 446.9M951.8 138.6L1377.4 453.6M946.8 145.4L1372.4 460.3M941.9 152.1L1367.5 467.0M936.9 158.8L1362.5 473.8M931.9 165.5L1357.5 480.5M926.9 172.3L1352.5 487.2M922.0 179.0L1347.6 493.9M917.0 185.7L1342.6 500.6M912.0 192.4L1337.6 507.4M907.0 199.1L1332.7 514.1M902.1 205.9L1327.7 520.8M897.1 212.6L1322.7 527.5M892.1 219.3L1317.7 534.3M887.1 226.0L1312.8 541.0M882.2 232.7L1307.8 547.7M877.2 239.5L1302.8 554.4M872.2 246.2L1297.8 561.1M867.2 252.9L1292.9 567.9M862.3 259.6L1287.9 574.6M857.3 266.3L1282.9 581.3M852.3 273.1L1277.9 588.0M847.4 279.8L1273.0 594.7M842.4 286.5L1268.0 601.5M837.4 293.2L1263.0 608.2M832.4 300.0L1258.0 614.9M827.5 306.7L1253.1 621.6M822.5 313.4L1248.1 628.4M817.5 320.1L1243.1 635.1M812.5 326.8L1238.2 641.8M807.6 333.6L1233.2 648.5M802.6 340.3L1228.2 655.2M797.6 347.0L1223.2 662.0M792.6 353.7L1218.3 668.7M787.7 360.4L1213.3 675.4M782.7 367.2L1208.3 682.1M777.7 373.9L1203.3 688.8M772.7 380.6L1198.4 695.6M767.8 387.3L1193.4 702.3M762.8 394.1L1188.4 709.0M757.8 400.8L1183.4 715.7M752.9 407.5L1178.5 722.5M747.9 414.2L1173.5 729.2M742.9 420.9L1168.5 735.9M737.9 427.7L1163.5 742.6M733.0 434.4L1158.6 749.3M728.0 441.1L1153.6 756.1" fill="none" stroke="#2b0610" stroke-width="1.2"/></g>
<path d="M808 257L817 240.600L829 225L846 212.500L867 201L901 188L1127 131" stroke="#7ad04a" stroke-width="1" fill="none"/>
<path d="M901 188L806.500 457.600" stroke="#62e428" stroke-width="1" stroke-dasharray="14 9" fill="none"/>
<path d="M806.3 459.2L799.5 460.7L793.0 462.4L786.7 464.3L780.6 466.3L774.7 468.5L769.0 470.8L763.5 473.2L758.3 475.8L753.3 478.6L748.5 481.5L744.0 484.5L739.7 487.6L735.7 490.9L731.9 494.3L728.4 497.9L725.1 501.5L722.1 505.3L719.4 509.2L716.9 513.2L714.7 517.3" stroke="#62e428" stroke-width="1" stroke-dasharray="10 6" fill="none"/>
<path d="M858.0 492.0L1349.0 372.0" stroke="#62e428" stroke-width="1.15" fill="none"/>
<path d="M929.0 427.0L944.0 423.0" stroke="#62e428" stroke-width="1.15" fill="none"/>
<path d="M1051.0 397.0L1071.0 392.0" stroke="#62e428" stroke-width="1.15" fill="none"/>
<path d="M1173.0 418.0L1195.0 412.0" stroke="#62e428" stroke-width="1.15" fill="none"/>
<path d="M858.4 496.0L1268.0 603.0" stroke="#62e428" stroke-width="1.15" fill="none"/>
<path d="M971.0 583.0L1157.0 633.0" stroke="#62e428" stroke-width="1.15" fill="none"/>
<path d="M1157.0 633.0L1157.0 727.0" stroke="#62e428" stroke-width="1.15" fill="none"/>
<path d="M1268.0 603.0L1272.0 812.0" stroke="#62e428" stroke-width="1.15" fill="none"/>
<path d="M863.0 704.0L1157.0 727.0" stroke="#62e428" stroke-width="1.15" fill="none"/>
<path d="M863.0 704.0L1272.0 812.0" stroke="#62e428" stroke-width="1.15" fill="none"/>
<path d="M858.4 496.0L971.0 583.0" stroke="#7fd4f0" stroke-width="1.15" fill="none"/>
<path d="M1157.0 633.0L1268.0 603.0" stroke="#7fd4f0" stroke-width="1.15" fill="none"/>
<path d="M1157.0 727.0L1272.0 812.0" stroke="#7fd4f0" stroke-width="1.15" fill="none"/>
<path d="M863.0 704.0L971.0 677.0" stroke="#7fd4f0" stroke-width="1.15" fill="none"/>
<path d="M858.4 496.0L857.0 591.7L863.0 704.0" stroke="#62e428" stroke-width="1.15" fill="none"/>
<path d="M971.0 583.0L972.0 678.0" stroke="#62e428" stroke-width="1.15" fill="none"/>
<path d="M899 185l4 4m0 -4l-4 4" stroke="#e01020" stroke-width=".8"/>
<path d="M804.5 455.6l4 4m0 -4l-4 4" stroke="#e01020" stroke-width=".8"/>
<path d="M1363 331l4 4m0 -4l-4 4" stroke="#e01020" stroke-width=".8"/>
<path d="M1266 601l4 4m0 -4l-4 4" stroke="#e01020" stroke-width=".8"/>
<path d="M1155 725l4 4m0 -4l-4 4" stroke="#e01020" stroke-width=".8"/>
<path d="M934.8 452.6C930.5 454.2 917.6 458.0 909.0 462.3C900.4 466.6 891.3 471.9 883.2 478.4C875.1 484.8 867.1 491.9 860.6 501.0C854.1 510.1 849.9 520.8 844.5 533.2C839.1 545.6 833.2 561.2 828.4 575.2C823.6 589.2 819.0 603.6 815.5 617.0C812.0 630.4 809.3 642.9 807.4 655.8C805.5 668.7 804.2 683.8 804.2 694.5C804.2 705.2 805.0 712.8 807.4 720.3C809.8 727.8 814.1 734.9 818.7 739.7C823.3 744.6 828.9 748.1 834.8 749.4C840.7 750.7 847.2 749.6 854.2 747.7C861.2 745.8 869.3 742.0 876.8 738.0C884.3 734.0 892.9 728.6 899.4 723.5C905.9 718.4 910.7 713.9 915.5 707.4C920.3 700.9 923.0 694.5 928.4 684.8C933.8 675.1 940.7 661.2 947.7 649.4C954.7 637.6 962.8 625.2 970.3 613.9C977.8 602.6 985.4 591.8 992.9 581.6C1000.4 571.4 1009.0 561.7 1015.5 552.6C1022.0 543.5 1027.8 535.4 1031.6 526.8C1035.3 518.2 1037.5 508.0 1038.0 501.0C1038.5 494.0 1038.0 489.6 1034.8 484.8C1031.6 480.0 1025.7 475.2 1018.7 472.0C1011.7 468.8 1002.6 467.9 992.9 465.5C983.2 463.1 970.3 459.5 960.6 457.4C950.9 455.2 939.1 453.4 934.8 452.6" stroke="#f030f2" stroke-width="6.5" fill="none" stroke-linecap="round" stroke-linejoin="round"/>
<text x="1889" y="178" text-anchor="end" font-family="Liberation Sans,sans-serif" font-weight="bold" font-size="38" textLength="107" lengthAdjust="spacingAndGlyphs">ANSYS</text>
<text x="1889" y="199" text-anchor="end" font-family="Liberation Sans,sans-serif" font-weight="bold" font-size="18.5" textLength="62" lengthAdjust="spacingAndGlyphs">2020 R2</text>
<g><path d="M1825 812L1795 820" stroke="#8a0a0a" stroke-width="3.500"/><path d="M1786 822L1797 813.500L1803 816L1801 825L1797 826.500Z" fill="#8a0a0a"/>
<path d="M1826 812L1857 837" stroke="#158a15" stroke-width="3.500"/><path d="M1866 844L1849 840L1858 829Z" fill="#158a15"/>
<path d="M1824 812L1813 848" stroke="#1010c8" stroke-width="4"/><path d="M1807 862L1806 845L1819 850Z" fill="#1010c8"/>
<circle cx="1817" cy="859" r="5.500" fill="#4cc8d8"/>
<text x="1777" y="825" font-family="Liberation Serif,serif" font-size="12" fill="#c01818">X</text>
<text x="1874" y="851" font-family="Liberation Serif,serif" font-size="12" fill="#48c848">Y</text>
<text x="1803" y="874" font-family="Liberation Serif,serif" font-size="12" fill="#1818c0">Z</text></g>
</svg>
</body></html>
